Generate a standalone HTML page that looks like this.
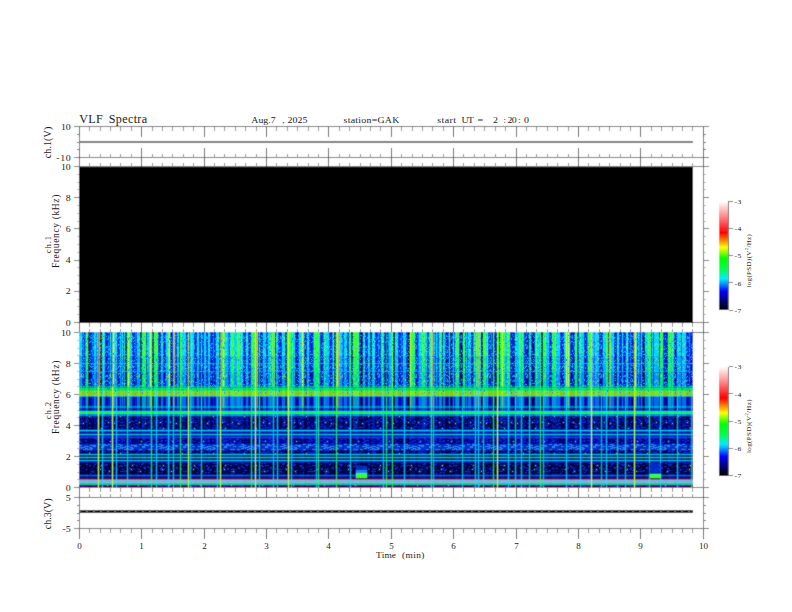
<!DOCTYPE html><html><head><meta charset="utf-8"><style>html,body{margin:0;padding:0;background:#fff;}svg{display:block}</style></head><body><svg width="792" height="612" viewBox="0 0 792 612" shape-rendering="crispEdges" font-family="Liberation Serif" fill="#1a1a1a">
<defs><filter id="soft" x="0" y="0" width="792" height="612" filterUnits="userSpaceOnUse"><feConvolveMatrix order="3" kernelMatrix="1 2 1 2 16 2 1 2 1" edgeMode="duplicate"/></filter></defs>
<g filter="url(#soft)">
<rect width="792" height="612" fill="#fff"/>
<line x1="79.5" y1="126.5" x2="703.5" y2="126.5" stroke="#686868" stroke-width="1"/>
<line x1="79.5" y1="157.5" x2="703.5" y2="157.5" stroke="#686868" stroke-width="1"/>
<line x1="79.5" y1="126.5" x2="79.5" y2="157.5" stroke="#686868" stroke-width="1"/>
<line x1="703.5" y1="126.5" x2="703.5" y2="157.5" stroke="#686868" stroke-width="1"/>
<line x1="79.5" y1="126.5" x2="79.5" y2="136.5" stroke="#404040" stroke-width="1"/>
<line x1="89.5" y1="126.5" x2="89.5" y2="130.5" stroke="#8a8a8a" stroke-width="1"/>
<line x1="100.5" y1="126.5" x2="100.5" y2="130.5" stroke="#8a8a8a" stroke-width="1"/>
<line x1="110.5" y1="126.5" x2="110.5" y2="130.5" stroke="#8a8a8a" stroke-width="1"/>
<line x1="120.5" y1="126.5" x2="120.5" y2="130.5" stroke="#8a8a8a" stroke-width="1"/>
<line x1="131.5" y1="126.5" x2="131.5" y2="130.5" stroke="#8a8a8a" stroke-width="1"/>
<line x1="141.5" y1="126.5" x2="141.5" y2="136.5" stroke="#404040" stroke-width="1"/>
<line x1="152.5" y1="126.5" x2="152.5" y2="130.5" stroke="#8a8a8a" stroke-width="1"/>
<line x1="162.5" y1="126.5" x2="162.5" y2="130.5" stroke="#8a8a8a" stroke-width="1"/>
<line x1="172.5" y1="126.5" x2="172.5" y2="130.5" stroke="#8a8a8a" stroke-width="1"/>
<line x1="183.5" y1="126.5" x2="183.5" y2="130.5" stroke="#8a8a8a" stroke-width="1"/>
<line x1="193.5" y1="126.5" x2="193.5" y2="130.5" stroke="#8a8a8a" stroke-width="1"/>
<line x1="204.5" y1="126.5" x2="204.5" y2="136.5" stroke="#404040" stroke-width="1"/>
<line x1="214.5" y1="126.5" x2="214.5" y2="130.5" stroke="#8a8a8a" stroke-width="1"/>
<line x1="224.5" y1="126.5" x2="224.5" y2="130.5" stroke="#8a8a8a" stroke-width="1"/>
<line x1="235.5" y1="126.5" x2="235.5" y2="130.5" stroke="#8a8a8a" stroke-width="1"/>
<line x1="245.5" y1="126.5" x2="245.5" y2="130.5" stroke="#8a8a8a" stroke-width="1"/>
<line x1="256.5" y1="126.5" x2="256.5" y2="130.5" stroke="#8a8a8a" stroke-width="1"/>
<line x1="266.5" y1="126.5" x2="266.5" y2="136.5" stroke="#404040" stroke-width="1"/>
<line x1="276.5" y1="126.5" x2="276.5" y2="130.5" stroke="#8a8a8a" stroke-width="1"/>
<line x1="287.5" y1="126.5" x2="287.5" y2="130.5" stroke="#8a8a8a" stroke-width="1"/>
<line x1="297.5" y1="126.5" x2="297.5" y2="130.5" stroke="#8a8a8a" stroke-width="1"/>
<line x1="308.5" y1="126.5" x2="308.5" y2="130.5" stroke="#8a8a8a" stroke-width="1"/>
<line x1="318.5" y1="126.5" x2="318.5" y2="130.5" stroke="#8a8a8a" stroke-width="1"/>
<line x1="328.5" y1="126.5" x2="328.5" y2="136.5" stroke="#404040" stroke-width="1"/>
<line x1="339.5" y1="126.5" x2="339.5" y2="130.5" stroke="#8a8a8a" stroke-width="1"/>
<line x1="349.5" y1="126.5" x2="349.5" y2="130.5" stroke="#8a8a8a" stroke-width="1"/>
<line x1="360.5" y1="126.5" x2="360.5" y2="130.5" stroke="#8a8a8a" stroke-width="1"/>
<line x1="370.5" y1="126.5" x2="370.5" y2="130.5" stroke="#8a8a8a" stroke-width="1"/>
<line x1="380.5" y1="126.5" x2="380.5" y2="130.5" stroke="#8a8a8a" stroke-width="1"/>
<line x1="391.5" y1="126.5" x2="391.5" y2="136.5" stroke="#404040" stroke-width="1"/>
<line x1="401.5" y1="126.5" x2="401.5" y2="130.5" stroke="#8a8a8a" stroke-width="1"/>
<line x1="412.5" y1="126.5" x2="412.5" y2="130.5" stroke="#8a8a8a" stroke-width="1"/>
<line x1="422.5" y1="126.5" x2="422.5" y2="130.5" stroke="#8a8a8a" stroke-width="1"/>
<line x1="432.5" y1="126.5" x2="432.5" y2="130.5" stroke="#8a8a8a" stroke-width="1"/>
<line x1="443.5" y1="126.5" x2="443.5" y2="130.5" stroke="#8a8a8a" stroke-width="1"/>
<line x1="453.5" y1="126.5" x2="453.5" y2="136.5" stroke="#404040" stroke-width="1"/>
<line x1="463.5" y1="126.5" x2="463.5" y2="130.5" stroke="#8a8a8a" stroke-width="1"/>
<line x1="474.5" y1="126.5" x2="474.5" y2="130.5" stroke="#8a8a8a" stroke-width="1"/>
<line x1="484.5" y1="126.5" x2="484.5" y2="130.5" stroke="#8a8a8a" stroke-width="1"/>
<line x1="495.5" y1="126.5" x2="495.5" y2="130.5" stroke="#8a8a8a" stroke-width="1"/>
<line x1="505.5" y1="126.5" x2="505.5" y2="130.5" stroke="#8a8a8a" stroke-width="1"/>
<line x1="516.5" y1="126.5" x2="516.5" y2="136.5" stroke="#404040" stroke-width="1"/>
<line x1="526.5" y1="126.5" x2="526.5" y2="130.5" stroke="#8a8a8a" stroke-width="1"/>
<line x1="536.5" y1="126.5" x2="536.5" y2="130.5" stroke="#8a8a8a" stroke-width="1"/>
<line x1="547.5" y1="126.5" x2="547.5" y2="130.5" stroke="#8a8a8a" stroke-width="1"/>
<line x1="557.5" y1="126.5" x2="557.5" y2="130.5" stroke="#8a8a8a" stroke-width="1"/>
<line x1="568.5" y1="126.5" x2="568.5" y2="130.5" stroke="#8a8a8a" stroke-width="1"/>
<line x1="578.5" y1="126.5" x2="578.5" y2="136.5" stroke="#404040" stroke-width="1"/>
<line x1="588.5" y1="126.5" x2="588.5" y2="130.5" stroke="#8a8a8a" stroke-width="1"/>
<line x1="599.5" y1="126.5" x2="599.5" y2="130.5" stroke="#8a8a8a" stroke-width="1"/>
<line x1="609.5" y1="126.5" x2="609.5" y2="130.5" stroke="#8a8a8a" stroke-width="1"/>
<line x1="620.5" y1="126.5" x2="620.5" y2="130.5" stroke="#8a8a8a" stroke-width="1"/>
<line x1="630.5" y1="126.5" x2="630.5" y2="130.5" stroke="#8a8a8a" stroke-width="1"/>
<line x1="640.5" y1="126.5" x2="640.5" y2="136.5" stroke="#404040" stroke-width="1"/>
<line x1="651.5" y1="126.5" x2="651.5" y2="130.5" stroke="#8a8a8a" stroke-width="1"/>
<line x1="661.5" y1="126.5" x2="661.5" y2="130.5" stroke="#8a8a8a" stroke-width="1"/>
<line x1="672.5" y1="126.5" x2="672.5" y2="130.5" stroke="#8a8a8a" stroke-width="1"/>
<line x1="682.5" y1="126.5" x2="682.5" y2="130.5" stroke="#8a8a8a" stroke-width="1"/>
<line x1="692.5" y1="126.5" x2="692.5" y2="130.5" stroke="#8a8a8a" stroke-width="1"/>
<line x1="703.5" y1="126.5" x2="703.5" y2="136.5" stroke="#404040" stroke-width="1"/>
<line x1="79.5" y1="157.5" x2="79.5" y2="147.5" stroke="#404040" stroke-width="1"/>
<line x1="89.5" y1="157.5" x2="89.5" y2="153.5" stroke="#8a8a8a" stroke-width="1"/>
<line x1="100.5" y1="157.5" x2="100.5" y2="153.5" stroke="#8a8a8a" stroke-width="1"/>
<line x1="110.5" y1="157.5" x2="110.5" y2="153.5" stroke="#8a8a8a" stroke-width="1"/>
<line x1="120.5" y1="157.5" x2="120.5" y2="153.5" stroke="#8a8a8a" stroke-width="1"/>
<line x1="131.5" y1="157.5" x2="131.5" y2="153.5" stroke="#8a8a8a" stroke-width="1"/>
<line x1="141.5" y1="157.5" x2="141.5" y2="147.5" stroke="#404040" stroke-width="1"/>
<line x1="152.5" y1="157.5" x2="152.5" y2="153.5" stroke="#8a8a8a" stroke-width="1"/>
<line x1="162.5" y1="157.5" x2="162.5" y2="153.5" stroke="#8a8a8a" stroke-width="1"/>
<line x1="172.5" y1="157.5" x2="172.5" y2="153.5" stroke="#8a8a8a" stroke-width="1"/>
<line x1="183.5" y1="157.5" x2="183.5" y2="153.5" stroke="#8a8a8a" stroke-width="1"/>
<line x1="193.5" y1="157.5" x2="193.5" y2="153.5" stroke="#8a8a8a" stroke-width="1"/>
<line x1="204.5" y1="157.5" x2="204.5" y2="147.5" stroke="#404040" stroke-width="1"/>
<line x1="214.5" y1="157.5" x2="214.5" y2="153.5" stroke="#8a8a8a" stroke-width="1"/>
<line x1="224.5" y1="157.5" x2="224.5" y2="153.5" stroke="#8a8a8a" stroke-width="1"/>
<line x1="235.5" y1="157.5" x2="235.5" y2="153.5" stroke="#8a8a8a" stroke-width="1"/>
<line x1="245.5" y1="157.5" x2="245.5" y2="153.5" stroke="#8a8a8a" stroke-width="1"/>
<line x1="256.5" y1="157.5" x2="256.5" y2="153.5" stroke="#8a8a8a" stroke-width="1"/>
<line x1="266.5" y1="157.5" x2="266.5" y2="147.5" stroke="#404040" stroke-width="1"/>
<line x1="276.5" y1="157.5" x2="276.5" y2="153.5" stroke="#8a8a8a" stroke-width="1"/>
<line x1="287.5" y1="157.5" x2="287.5" y2="153.5" stroke="#8a8a8a" stroke-width="1"/>
<line x1="297.5" y1="157.5" x2="297.5" y2="153.5" stroke="#8a8a8a" stroke-width="1"/>
<line x1="308.5" y1="157.5" x2="308.5" y2="153.5" stroke="#8a8a8a" stroke-width="1"/>
<line x1="318.5" y1="157.5" x2="318.5" y2="153.5" stroke="#8a8a8a" stroke-width="1"/>
<line x1="328.5" y1="157.5" x2="328.5" y2="147.5" stroke="#404040" stroke-width="1"/>
<line x1="339.5" y1="157.5" x2="339.5" y2="153.5" stroke="#8a8a8a" stroke-width="1"/>
<line x1="349.5" y1="157.5" x2="349.5" y2="153.5" stroke="#8a8a8a" stroke-width="1"/>
<line x1="360.5" y1="157.5" x2="360.5" y2="153.5" stroke="#8a8a8a" stroke-width="1"/>
<line x1="370.5" y1="157.5" x2="370.5" y2="153.5" stroke="#8a8a8a" stroke-width="1"/>
<line x1="380.5" y1="157.5" x2="380.5" y2="153.5" stroke="#8a8a8a" stroke-width="1"/>
<line x1="391.5" y1="157.5" x2="391.5" y2="147.5" stroke="#404040" stroke-width="1"/>
<line x1="401.5" y1="157.5" x2="401.5" y2="153.5" stroke="#8a8a8a" stroke-width="1"/>
<line x1="412.5" y1="157.5" x2="412.5" y2="153.5" stroke="#8a8a8a" stroke-width="1"/>
<line x1="422.5" y1="157.5" x2="422.5" y2="153.5" stroke="#8a8a8a" stroke-width="1"/>
<line x1="432.5" y1="157.5" x2="432.5" y2="153.5" stroke="#8a8a8a" stroke-width="1"/>
<line x1="443.5" y1="157.5" x2="443.5" y2="153.5" stroke="#8a8a8a" stroke-width="1"/>
<line x1="453.5" y1="157.5" x2="453.5" y2="147.5" stroke="#404040" stroke-width="1"/>
<line x1="463.5" y1="157.5" x2="463.5" y2="153.5" stroke="#8a8a8a" stroke-width="1"/>
<line x1="474.5" y1="157.5" x2="474.5" y2="153.5" stroke="#8a8a8a" stroke-width="1"/>
<line x1="484.5" y1="157.5" x2="484.5" y2="153.5" stroke="#8a8a8a" stroke-width="1"/>
<line x1="495.5" y1="157.5" x2="495.5" y2="153.5" stroke="#8a8a8a" stroke-width="1"/>
<line x1="505.5" y1="157.5" x2="505.5" y2="153.5" stroke="#8a8a8a" stroke-width="1"/>
<line x1="516.5" y1="157.5" x2="516.5" y2="147.5" stroke="#404040" stroke-width="1"/>
<line x1="526.5" y1="157.5" x2="526.5" y2="153.5" stroke="#8a8a8a" stroke-width="1"/>
<line x1="536.5" y1="157.5" x2="536.5" y2="153.5" stroke="#8a8a8a" stroke-width="1"/>
<line x1="547.5" y1="157.5" x2="547.5" y2="153.5" stroke="#8a8a8a" stroke-width="1"/>
<line x1="557.5" y1="157.5" x2="557.5" y2="153.5" stroke="#8a8a8a" stroke-width="1"/>
<line x1="568.5" y1="157.5" x2="568.5" y2="153.5" stroke="#8a8a8a" stroke-width="1"/>
<line x1="578.5" y1="157.5" x2="578.5" y2="147.5" stroke="#404040" stroke-width="1"/>
<line x1="588.5" y1="157.5" x2="588.5" y2="153.5" stroke="#8a8a8a" stroke-width="1"/>
<line x1="599.5" y1="157.5" x2="599.5" y2="153.5" stroke="#8a8a8a" stroke-width="1"/>
<line x1="609.5" y1="157.5" x2="609.5" y2="153.5" stroke="#8a8a8a" stroke-width="1"/>
<line x1="620.5" y1="157.5" x2="620.5" y2="153.5" stroke="#8a8a8a" stroke-width="1"/>
<line x1="630.5" y1="157.5" x2="630.5" y2="153.5" stroke="#8a8a8a" stroke-width="1"/>
<line x1="640.5" y1="157.5" x2="640.5" y2="147.5" stroke="#404040" stroke-width="1"/>
<line x1="651.5" y1="157.5" x2="651.5" y2="153.5" stroke="#8a8a8a" stroke-width="1"/>
<line x1="661.5" y1="157.5" x2="661.5" y2="153.5" stroke="#8a8a8a" stroke-width="1"/>
<line x1="672.5" y1="157.5" x2="672.5" y2="153.5" stroke="#8a8a8a" stroke-width="1"/>
<line x1="682.5" y1="157.5" x2="682.5" y2="153.5" stroke="#8a8a8a" stroke-width="1"/>
<line x1="692.5" y1="157.5" x2="692.5" y2="153.5" stroke="#8a8a8a" stroke-width="1"/>
<line x1="703.5" y1="157.5" x2="703.5" y2="147.5" stroke="#404040" stroke-width="1"/>
<line x1="74" y1="126.5" x2="79.5" y2="126.5" stroke="#686868" stroke-width="1"/>
<line x1="703.5" y1="126.5" x2="708.5" y2="126.5" stroke="#686868" stroke-width="1"/>
<line x1="74" y1="157.5" x2="79.5" y2="157.5" stroke="#686868" stroke-width="1"/>
<line x1="703.5" y1="157.5" x2="708.5" y2="157.5" stroke="#686868" stroke-width="1"/>
<line x1="77" y1="134.25" x2="79.5" y2="134.25" stroke="#666" stroke-width="1"/>
<line x1="703.5" y1="134.25" x2="705.5" y2="134.25" stroke="#666" stroke-width="1"/>
<line x1="77" y1="149.75" x2="79.5" y2="149.75" stroke="#666" stroke-width="1"/>
<line x1="703.5" y1="149.75" x2="705.5" y2="149.75" stroke="#666" stroke-width="1"/>
<line x1="77" y1="142.0" x2="79.5" y2="142.0" stroke="#666" stroke-width="1"/>
<line x1="703.5" y1="142.0" x2="705.5" y2="142.0" stroke="#666" stroke-width="1"/>
<rect x="79" y="141" width="614" height="2" fill="#777"/>
<line x1="79.5" y1="166.5" x2="703.5" y2="166.5" stroke="#686868" stroke-width="1"/>
<line x1="79.5" y1="322.5" x2="703.5" y2="322.5" stroke="#686868" stroke-width="1"/>
<line x1="79.5" y1="166.5" x2="79.5" y2="322.5" stroke="#686868" stroke-width="1"/>
<line x1="703.5" y1="166.5" x2="703.5" y2="322.5" stroke="#686868" stroke-width="1"/>
<line x1="79.5" y1="166.5" x2="79.5" y2="156.5" stroke="#404040" stroke-width="1"/>
<line x1="89.5" y1="166.5" x2="89.5" y2="162.5" stroke="#8a8a8a" stroke-width="1"/>
<line x1="100.5" y1="166.5" x2="100.5" y2="162.5" stroke="#8a8a8a" stroke-width="1"/>
<line x1="110.5" y1="166.5" x2="110.5" y2="162.5" stroke="#8a8a8a" stroke-width="1"/>
<line x1="120.5" y1="166.5" x2="120.5" y2="162.5" stroke="#8a8a8a" stroke-width="1"/>
<line x1="131.5" y1="166.5" x2="131.5" y2="162.5" stroke="#8a8a8a" stroke-width="1"/>
<line x1="141.5" y1="166.5" x2="141.5" y2="156.5" stroke="#404040" stroke-width="1"/>
<line x1="152.5" y1="166.5" x2="152.5" y2="162.5" stroke="#8a8a8a" stroke-width="1"/>
<line x1="162.5" y1="166.5" x2="162.5" y2="162.5" stroke="#8a8a8a" stroke-width="1"/>
<line x1="172.5" y1="166.5" x2="172.5" y2="162.5" stroke="#8a8a8a" stroke-width="1"/>
<line x1="183.5" y1="166.5" x2="183.5" y2="162.5" stroke="#8a8a8a" stroke-width="1"/>
<line x1="193.5" y1="166.5" x2="193.5" y2="162.5" stroke="#8a8a8a" stroke-width="1"/>
<line x1="204.5" y1="166.5" x2="204.5" y2="156.5" stroke="#404040" stroke-width="1"/>
<line x1="214.5" y1="166.5" x2="214.5" y2="162.5" stroke="#8a8a8a" stroke-width="1"/>
<line x1="224.5" y1="166.5" x2="224.5" y2="162.5" stroke="#8a8a8a" stroke-width="1"/>
<line x1="235.5" y1="166.5" x2="235.5" y2="162.5" stroke="#8a8a8a" stroke-width="1"/>
<line x1="245.5" y1="166.5" x2="245.5" y2="162.5" stroke="#8a8a8a" stroke-width="1"/>
<line x1="256.5" y1="166.5" x2="256.5" y2="162.5" stroke="#8a8a8a" stroke-width="1"/>
<line x1="266.5" y1="166.5" x2="266.5" y2="156.5" stroke="#404040" stroke-width="1"/>
<line x1="276.5" y1="166.5" x2="276.5" y2="162.5" stroke="#8a8a8a" stroke-width="1"/>
<line x1="287.5" y1="166.5" x2="287.5" y2="162.5" stroke="#8a8a8a" stroke-width="1"/>
<line x1="297.5" y1="166.5" x2="297.5" y2="162.5" stroke="#8a8a8a" stroke-width="1"/>
<line x1="308.5" y1="166.5" x2="308.5" y2="162.5" stroke="#8a8a8a" stroke-width="1"/>
<line x1="318.5" y1="166.5" x2="318.5" y2="162.5" stroke="#8a8a8a" stroke-width="1"/>
<line x1="328.5" y1="166.5" x2="328.5" y2="156.5" stroke="#404040" stroke-width="1"/>
<line x1="339.5" y1="166.5" x2="339.5" y2="162.5" stroke="#8a8a8a" stroke-width="1"/>
<line x1="349.5" y1="166.5" x2="349.5" y2="162.5" stroke="#8a8a8a" stroke-width="1"/>
<line x1="360.5" y1="166.5" x2="360.5" y2="162.5" stroke="#8a8a8a" stroke-width="1"/>
<line x1="370.5" y1="166.5" x2="370.5" y2="162.5" stroke="#8a8a8a" stroke-width="1"/>
<line x1="380.5" y1="166.5" x2="380.5" y2="162.5" stroke="#8a8a8a" stroke-width="1"/>
<line x1="391.5" y1="166.5" x2="391.5" y2="156.5" stroke="#404040" stroke-width="1"/>
<line x1="401.5" y1="166.5" x2="401.5" y2="162.5" stroke="#8a8a8a" stroke-width="1"/>
<line x1="412.5" y1="166.5" x2="412.5" y2="162.5" stroke="#8a8a8a" stroke-width="1"/>
<line x1="422.5" y1="166.5" x2="422.5" y2="162.5" stroke="#8a8a8a" stroke-width="1"/>
<line x1="432.5" y1="166.5" x2="432.5" y2="162.5" stroke="#8a8a8a" stroke-width="1"/>
<line x1="443.5" y1="166.5" x2="443.5" y2="162.5" stroke="#8a8a8a" stroke-width="1"/>
<line x1="453.5" y1="166.5" x2="453.5" y2="156.5" stroke="#404040" stroke-width="1"/>
<line x1="463.5" y1="166.5" x2="463.5" y2="162.5" stroke="#8a8a8a" stroke-width="1"/>
<line x1="474.5" y1="166.5" x2="474.5" y2="162.5" stroke="#8a8a8a" stroke-width="1"/>
<line x1="484.5" y1="166.5" x2="484.5" y2="162.5" stroke="#8a8a8a" stroke-width="1"/>
<line x1="495.5" y1="166.5" x2="495.5" y2="162.5" stroke="#8a8a8a" stroke-width="1"/>
<line x1="505.5" y1="166.5" x2="505.5" y2="162.5" stroke="#8a8a8a" stroke-width="1"/>
<line x1="516.5" y1="166.5" x2="516.5" y2="156.5" stroke="#404040" stroke-width="1"/>
<line x1="526.5" y1="166.5" x2="526.5" y2="162.5" stroke="#8a8a8a" stroke-width="1"/>
<line x1="536.5" y1="166.5" x2="536.5" y2="162.5" stroke="#8a8a8a" stroke-width="1"/>
<line x1="547.5" y1="166.5" x2="547.5" y2="162.5" stroke="#8a8a8a" stroke-width="1"/>
<line x1="557.5" y1="166.5" x2="557.5" y2="162.5" stroke="#8a8a8a" stroke-width="1"/>
<line x1="568.5" y1="166.5" x2="568.5" y2="162.5" stroke="#8a8a8a" stroke-width="1"/>
<line x1="578.5" y1="166.5" x2="578.5" y2="156.5" stroke="#404040" stroke-width="1"/>
<line x1="588.5" y1="166.5" x2="588.5" y2="162.5" stroke="#8a8a8a" stroke-width="1"/>
<line x1="599.5" y1="166.5" x2="599.5" y2="162.5" stroke="#8a8a8a" stroke-width="1"/>
<line x1="609.5" y1="166.5" x2="609.5" y2="162.5" stroke="#8a8a8a" stroke-width="1"/>
<line x1="620.5" y1="166.5" x2="620.5" y2="162.5" stroke="#8a8a8a" stroke-width="1"/>
<line x1="630.5" y1="166.5" x2="630.5" y2="162.5" stroke="#8a8a8a" stroke-width="1"/>
<line x1="640.5" y1="166.5" x2="640.5" y2="156.5" stroke="#404040" stroke-width="1"/>
<line x1="651.5" y1="166.5" x2="651.5" y2="162.5" stroke="#8a8a8a" stroke-width="1"/>
<line x1="661.5" y1="166.5" x2="661.5" y2="162.5" stroke="#8a8a8a" stroke-width="1"/>
<line x1="672.5" y1="166.5" x2="672.5" y2="162.5" stroke="#8a8a8a" stroke-width="1"/>
<line x1="682.5" y1="166.5" x2="682.5" y2="162.5" stroke="#8a8a8a" stroke-width="1"/>
<line x1="692.5" y1="166.5" x2="692.5" y2="162.5" stroke="#8a8a8a" stroke-width="1"/>
<line x1="703.5" y1="166.5" x2="703.5" y2="156.5" stroke="#404040" stroke-width="1"/>
<line x1="79.5" y1="322.5" x2="79.5" y2="332.5" stroke="#404040" stroke-width="1"/>
<line x1="89.5" y1="322.5" x2="89.5" y2="326.5" stroke="#8a8a8a" stroke-width="1"/>
<line x1="100.5" y1="322.5" x2="100.5" y2="326.5" stroke="#8a8a8a" stroke-width="1"/>
<line x1="110.5" y1="322.5" x2="110.5" y2="326.5" stroke="#8a8a8a" stroke-width="1"/>
<line x1="120.5" y1="322.5" x2="120.5" y2="326.5" stroke="#8a8a8a" stroke-width="1"/>
<line x1="131.5" y1="322.5" x2="131.5" y2="326.5" stroke="#8a8a8a" stroke-width="1"/>
<line x1="141.5" y1="322.5" x2="141.5" y2="332.5" stroke="#404040" stroke-width="1"/>
<line x1="152.5" y1="322.5" x2="152.5" y2="326.5" stroke="#8a8a8a" stroke-width="1"/>
<line x1="162.5" y1="322.5" x2="162.5" y2="326.5" stroke="#8a8a8a" stroke-width="1"/>
<line x1="172.5" y1="322.5" x2="172.5" y2="326.5" stroke="#8a8a8a" stroke-width="1"/>
<line x1="183.5" y1="322.5" x2="183.5" y2="326.5" stroke="#8a8a8a" stroke-width="1"/>
<line x1="193.5" y1="322.5" x2="193.5" y2="326.5" stroke="#8a8a8a" stroke-width="1"/>
<line x1="204.5" y1="322.5" x2="204.5" y2="332.5" stroke="#404040" stroke-width="1"/>
<line x1="214.5" y1="322.5" x2="214.5" y2="326.5" stroke="#8a8a8a" stroke-width="1"/>
<line x1="224.5" y1="322.5" x2="224.5" y2="326.5" stroke="#8a8a8a" stroke-width="1"/>
<line x1="235.5" y1="322.5" x2="235.5" y2="326.5" stroke="#8a8a8a" stroke-width="1"/>
<line x1="245.5" y1="322.5" x2="245.5" y2="326.5" stroke="#8a8a8a" stroke-width="1"/>
<line x1="256.5" y1="322.5" x2="256.5" y2="326.5" stroke="#8a8a8a" stroke-width="1"/>
<line x1="266.5" y1="322.5" x2="266.5" y2="332.5" stroke="#404040" stroke-width="1"/>
<line x1="276.5" y1="322.5" x2="276.5" y2="326.5" stroke="#8a8a8a" stroke-width="1"/>
<line x1="287.5" y1="322.5" x2="287.5" y2="326.5" stroke="#8a8a8a" stroke-width="1"/>
<line x1="297.5" y1="322.5" x2="297.5" y2="326.5" stroke="#8a8a8a" stroke-width="1"/>
<line x1="308.5" y1="322.5" x2="308.5" y2="326.5" stroke="#8a8a8a" stroke-width="1"/>
<line x1="318.5" y1="322.5" x2="318.5" y2="326.5" stroke="#8a8a8a" stroke-width="1"/>
<line x1="328.5" y1="322.5" x2="328.5" y2="332.5" stroke="#404040" stroke-width="1"/>
<line x1="339.5" y1="322.5" x2="339.5" y2="326.5" stroke="#8a8a8a" stroke-width="1"/>
<line x1="349.5" y1="322.5" x2="349.5" y2="326.5" stroke="#8a8a8a" stroke-width="1"/>
<line x1="360.5" y1="322.5" x2="360.5" y2="326.5" stroke="#8a8a8a" stroke-width="1"/>
<line x1="370.5" y1="322.5" x2="370.5" y2="326.5" stroke="#8a8a8a" stroke-width="1"/>
<line x1="380.5" y1="322.5" x2="380.5" y2="326.5" stroke="#8a8a8a" stroke-width="1"/>
<line x1="391.5" y1="322.5" x2="391.5" y2="332.5" stroke="#404040" stroke-width="1"/>
<line x1="401.5" y1="322.5" x2="401.5" y2="326.5" stroke="#8a8a8a" stroke-width="1"/>
<line x1="412.5" y1="322.5" x2="412.5" y2="326.5" stroke="#8a8a8a" stroke-width="1"/>
<line x1="422.5" y1="322.5" x2="422.5" y2="326.5" stroke="#8a8a8a" stroke-width="1"/>
<line x1="432.5" y1="322.5" x2="432.5" y2="326.5" stroke="#8a8a8a" stroke-width="1"/>
<line x1="443.5" y1="322.5" x2="443.5" y2="326.5" stroke="#8a8a8a" stroke-width="1"/>
<line x1="453.5" y1="322.5" x2="453.5" y2="332.5" stroke="#404040" stroke-width="1"/>
<line x1="463.5" y1="322.5" x2="463.5" y2="326.5" stroke="#8a8a8a" stroke-width="1"/>
<line x1="474.5" y1="322.5" x2="474.5" y2="326.5" stroke="#8a8a8a" stroke-width="1"/>
<line x1="484.5" y1="322.5" x2="484.5" y2="326.5" stroke="#8a8a8a" stroke-width="1"/>
<line x1="495.5" y1="322.5" x2="495.5" y2="326.5" stroke="#8a8a8a" stroke-width="1"/>
<line x1="505.5" y1="322.5" x2="505.5" y2="326.5" stroke="#8a8a8a" stroke-width="1"/>
<line x1="516.5" y1="322.5" x2="516.5" y2="332.5" stroke="#404040" stroke-width="1"/>
<line x1="526.5" y1="322.5" x2="526.5" y2="326.5" stroke="#8a8a8a" stroke-width="1"/>
<line x1="536.5" y1="322.5" x2="536.5" y2="326.5" stroke="#8a8a8a" stroke-width="1"/>
<line x1="547.5" y1="322.5" x2="547.5" y2="326.5" stroke="#8a8a8a" stroke-width="1"/>
<line x1="557.5" y1="322.5" x2="557.5" y2="326.5" stroke="#8a8a8a" stroke-width="1"/>
<line x1="568.5" y1="322.5" x2="568.5" y2="326.5" stroke="#8a8a8a" stroke-width="1"/>
<line x1="578.5" y1="322.5" x2="578.5" y2="332.5" stroke="#404040" stroke-width="1"/>
<line x1="588.5" y1="322.5" x2="588.5" y2="326.5" stroke="#8a8a8a" stroke-width="1"/>
<line x1="599.5" y1="322.5" x2="599.5" y2="326.5" stroke="#8a8a8a" stroke-width="1"/>
<line x1="609.5" y1="322.5" x2="609.5" y2="326.5" stroke="#8a8a8a" stroke-width="1"/>
<line x1="620.5" y1="322.5" x2="620.5" y2="326.5" stroke="#8a8a8a" stroke-width="1"/>
<line x1="630.5" y1="322.5" x2="630.5" y2="326.5" stroke="#8a8a8a" stroke-width="1"/>
<line x1="640.5" y1="322.5" x2="640.5" y2="332.5" stroke="#404040" stroke-width="1"/>
<line x1="651.5" y1="322.5" x2="651.5" y2="326.5" stroke="#8a8a8a" stroke-width="1"/>
<line x1="661.5" y1="322.5" x2="661.5" y2="326.5" stroke="#8a8a8a" stroke-width="1"/>
<line x1="672.5" y1="322.5" x2="672.5" y2="326.5" stroke="#8a8a8a" stroke-width="1"/>
<line x1="682.5" y1="322.5" x2="682.5" y2="326.5" stroke="#8a8a8a" stroke-width="1"/>
<line x1="692.5" y1="322.5" x2="692.5" y2="326.5" stroke="#8a8a8a" stroke-width="1"/>
<line x1="703.5" y1="322.5" x2="703.5" y2="332.5" stroke="#404040" stroke-width="1"/>
<line x1="74" y1="322.5" x2="79.5" y2="322.5" stroke="#686868" stroke-width="1"/>
<line x1="703.5" y1="322.5" x2="708.5" y2="322.5" stroke="#686868" stroke-width="1"/>
<line x1="77" y1="314.7" x2="79.5" y2="314.7" stroke="#bbb" stroke-width="1"/>
<line x1="703.5" y1="314.7" x2="705.5" y2="314.7" stroke="#bbb" stroke-width="1"/>
<line x1="77" y1="306.9" x2="79.5" y2="306.9" stroke="#bbb" stroke-width="1"/>
<line x1="703.5" y1="306.9" x2="705.5" y2="306.9" stroke="#bbb" stroke-width="1"/>
<line x1="77" y1="299.1" x2="79.5" y2="299.1" stroke="#bbb" stroke-width="1"/>
<line x1="703.5" y1="299.1" x2="705.5" y2="299.1" stroke="#bbb" stroke-width="1"/>
<line x1="74" y1="291.3" x2="79.5" y2="291.3" stroke="#686868" stroke-width="1"/>
<line x1="703.5" y1="291.3" x2="708.5" y2="291.3" stroke="#686868" stroke-width="1"/>
<line x1="77" y1="283.5" x2="79.5" y2="283.5" stroke="#bbb" stroke-width="1"/>
<line x1="703.5" y1="283.5" x2="705.5" y2="283.5" stroke="#bbb" stroke-width="1"/>
<line x1="77" y1="275.7" x2="79.5" y2="275.7" stroke="#bbb" stroke-width="1"/>
<line x1="703.5" y1="275.7" x2="705.5" y2="275.7" stroke="#bbb" stroke-width="1"/>
<line x1="77" y1="267.9" x2="79.5" y2="267.9" stroke="#bbb" stroke-width="1"/>
<line x1="703.5" y1="267.9" x2="705.5" y2="267.9" stroke="#bbb" stroke-width="1"/>
<line x1="74" y1="260.1" x2="79.5" y2="260.1" stroke="#686868" stroke-width="1"/>
<line x1="703.5" y1="260.1" x2="708.5" y2="260.1" stroke="#686868" stroke-width="1"/>
<line x1="77" y1="252.3" x2="79.5" y2="252.3" stroke="#bbb" stroke-width="1"/>
<line x1="703.5" y1="252.3" x2="705.5" y2="252.3" stroke="#bbb" stroke-width="1"/>
<line x1="77" y1="244.5" x2="79.5" y2="244.5" stroke="#bbb" stroke-width="1"/>
<line x1="703.5" y1="244.5" x2="705.5" y2="244.5" stroke="#bbb" stroke-width="1"/>
<line x1="77" y1="236.7" x2="79.5" y2="236.7" stroke="#bbb" stroke-width="1"/>
<line x1="703.5" y1="236.7" x2="705.5" y2="236.7" stroke="#bbb" stroke-width="1"/>
<line x1="74" y1="228.9" x2="79.5" y2="228.9" stroke="#686868" stroke-width="1"/>
<line x1="703.5" y1="228.9" x2="708.5" y2="228.9" stroke="#686868" stroke-width="1"/>
<line x1="77" y1="221.10000000000002" x2="79.5" y2="221.10000000000002" stroke="#bbb" stroke-width="1"/>
<line x1="703.5" y1="221.10000000000002" x2="705.5" y2="221.10000000000002" stroke="#bbb" stroke-width="1"/>
<line x1="77" y1="213.3" x2="79.5" y2="213.3" stroke="#bbb" stroke-width="1"/>
<line x1="703.5" y1="213.3" x2="705.5" y2="213.3" stroke="#bbb" stroke-width="1"/>
<line x1="77" y1="205.5" x2="79.5" y2="205.5" stroke="#bbb" stroke-width="1"/>
<line x1="703.5" y1="205.5" x2="705.5" y2="205.5" stroke="#bbb" stroke-width="1"/>
<line x1="74" y1="197.7" x2="79.5" y2="197.7" stroke="#686868" stroke-width="1"/>
<line x1="703.5" y1="197.7" x2="708.5" y2="197.7" stroke="#686868" stroke-width="1"/>
<line x1="77" y1="189.9" x2="79.5" y2="189.9" stroke="#bbb" stroke-width="1"/>
<line x1="703.5" y1="189.9" x2="705.5" y2="189.9" stroke="#bbb" stroke-width="1"/>
<line x1="77" y1="182.1" x2="79.5" y2="182.1" stroke="#bbb" stroke-width="1"/>
<line x1="703.5" y1="182.1" x2="705.5" y2="182.1" stroke="#bbb" stroke-width="1"/>
<line x1="77" y1="174.3" x2="79.5" y2="174.3" stroke="#bbb" stroke-width="1"/>
<line x1="703.5" y1="174.3" x2="705.5" y2="174.3" stroke="#bbb" stroke-width="1"/>
<line x1="74" y1="166.5" x2="79.5" y2="166.5" stroke="#686868" stroke-width="1"/>
<line x1="703.5" y1="166.5" x2="708.5" y2="166.5" stroke="#686868" stroke-width="1"/>
<rect x="79" y="167" width="614" height="156" fill="#000"/>
<line x1="79.5" y1="332.5" x2="703.5" y2="332.5" stroke="#686868" stroke-width="1"/>
<line x1="79.5" y1="487.5" x2="703.5" y2="487.5" stroke="#686868" stroke-width="1"/>
<line x1="79.5" y1="332.5" x2="79.5" y2="487.5" stroke="#686868" stroke-width="1"/>
<line x1="703.5" y1="332.5" x2="703.5" y2="487.5" stroke="#686868" stroke-width="1"/>
<line x1="79.5" y1="332.5" x2="79.5" y2="322.5" stroke="#404040" stroke-width="1"/>
<line x1="89.5" y1="332.5" x2="89.5" y2="328.5" stroke="#8a8a8a" stroke-width="1"/>
<line x1="100.5" y1="332.5" x2="100.5" y2="328.5" stroke="#8a8a8a" stroke-width="1"/>
<line x1="110.5" y1="332.5" x2="110.5" y2="328.5" stroke="#8a8a8a" stroke-width="1"/>
<line x1="120.5" y1="332.5" x2="120.5" y2="328.5" stroke="#8a8a8a" stroke-width="1"/>
<line x1="131.5" y1="332.5" x2="131.5" y2="328.5" stroke="#8a8a8a" stroke-width="1"/>
<line x1="141.5" y1="332.5" x2="141.5" y2="322.5" stroke="#404040" stroke-width="1"/>
<line x1="152.5" y1="332.5" x2="152.5" y2="328.5" stroke="#8a8a8a" stroke-width="1"/>
<line x1="162.5" y1="332.5" x2="162.5" y2="328.5" stroke="#8a8a8a" stroke-width="1"/>
<line x1="172.5" y1="332.5" x2="172.5" y2="328.5" stroke="#8a8a8a" stroke-width="1"/>
<line x1="183.5" y1="332.5" x2="183.5" y2="328.5" stroke="#8a8a8a" stroke-width="1"/>
<line x1="193.5" y1="332.5" x2="193.5" y2="328.5" stroke="#8a8a8a" stroke-width="1"/>
<line x1="204.5" y1="332.5" x2="204.5" y2="322.5" stroke="#404040" stroke-width="1"/>
<line x1="214.5" y1="332.5" x2="214.5" y2="328.5" stroke="#8a8a8a" stroke-width="1"/>
<line x1="224.5" y1="332.5" x2="224.5" y2="328.5" stroke="#8a8a8a" stroke-width="1"/>
<line x1="235.5" y1="332.5" x2="235.5" y2="328.5" stroke="#8a8a8a" stroke-width="1"/>
<line x1="245.5" y1="332.5" x2="245.5" y2="328.5" stroke="#8a8a8a" stroke-width="1"/>
<line x1="256.5" y1="332.5" x2="256.5" y2="328.5" stroke="#8a8a8a" stroke-width="1"/>
<line x1="266.5" y1="332.5" x2="266.5" y2="322.5" stroke="#404040" stroke-width="1"/>
<line x1="276.5" y1="332.5" x2="276.5" y2="328.5" stroke="#8a8a8a" stroke-width="1"/>
<line x1="287.5" y1="332.5" x2="287.5" y2="328.5" stroke="#8a8a8a" stroke-width="1"/>
<line x1="297.5" y1="332.5" x2="297.5" y2="328.5" stroke="#8a8a8a" stroke-width="1"/>
<line x1="308.5" y1="332.5" x2="308.5" y2="328.5" stroke="#8a8a8a" stroke-width="1"/>
<line x1="318.5" y1="332.5" x2="318.5" y2="328.5" stroke="#8a8a8a" stroke-width="1"/>
<line x1="328.5" y1="332.5" x2="328.5" y2="322.5" stroke="#404040" stroke-width="1"/>
<line x1="339.5" y1="332.5" x2="339.5" y2="328.5" stroke="#8a8a8a" stroke-width="1"/>
<line x1="349.5" y1="332.5" x2="349.5" y2="328.5" stroke="#8a8a8a" stroke-width="1"/>
<line x1="360.5" y1="332.5" x2="360.5" y2="328.5" stroke="#8a8a8a" stroke-width="1"/>
<line x1="370.5" y1="332.5" x2="370.5" y2="328.5" stroke="#8a8a8a" stroke-width="1"/>
<line x1="380.5" y1="332.5" x2="380.5" y2="328.5" stroke="#8a8a8a" stroke-width="1"/>
<line x1="391.5" y1="332.5" x2="391.5" y2="322.5" stroke="#404040" stroke-width="1"/>
<line x1="401.5" y1="332.5" x2="401.5" y2="328.5" stroke="#8a8a8a" stroke-width="1"/>
<line x1="412.5" y1="332.5" x2="412.5" y2="328.5" stroke="#8a8a8a" stroke-width="1"/>
<line x1="422.5" y1="332.5" x2="422.5" y2="328.5" stroke="#8a8a8a" stroke-width="1"/>
<line x1="432.5" y1="332.5" x2="432.5" y2="328.5" stroke="#8a8a8a" stroke-width="1"/>
<line x1="443.5" y1="332.5" x2="443.5" y2="328.5" stroke="#8a8a8a" stroke-width="1"/>
<line x1="453.5" y1="332.5" x2="453.5" y2="322.5" stroke="#404040" stroke-width="1"/>
<line x1="463.5" y1="332.5" x2="463.5" y2="328.5" stroke="#8a8a8a" stroke-width="1"/>
<line x1="474.5" y1="332.5" x2="474.5" y2="328.5" stroke="#8a8a8a" stroke-width="1"/>
<line x1="484.5" y1="332.5" x2="484.5" y2="328.5" stroke="#8a8a8a" stroke-width="1"/>
<line x1="495.5" y1="332.5" x2="495.5" y2="328.5" stroke="#8a8a8a" stroke-width="1"/>
<line x1="505.5" y1="332.5" x2="505.5" y2="328.5" stroke="#8a8a8a" stroke-width="1"/>
<line x1="516.5" y1="332.5" x2="516.5" y2="322.5" stroke="#404040" stroke-width="1"/>
<line x1="526.5" y1="332.5" x2="526.5" y2="328.5" stroke="#8a8a8a" stroke-width="1"/>
<line x1="536.5" y1="332.5" x2="536.5" y2="328.5" stroke="#8a8a8a" stroke-width="1"/>
<line x1="547.5" y1="332.5" x2="547.5" y2="328.5" stroke="#8a8a8a" stroke-width="1"/>
<line x1="557.5" y1="332.5" x2="557.5" y2="328.5" stroke="#8a8a8a" stroke-width="1"/>
<line x1="568.5" y1="332.5" x2="568.5" y2="328.5" stroke="#8a8a8a" stroke-width="1"/>
<line x1="578.5" y1="332.5" x2="578.5" y2="322.5" stroke="#404040" stroke-width="1"/>
<line x1="588.5" y1="332.5" x2="588.5" y2="328.5" stroke="#8a8a8a" stroke-width="1"/>
<line x1="599.5" y1="332.5" x2="599.5" y2="328.5" stroke="#8a8a8a" stroke-width="1"/>
<line x1="609.5" y1="332.5" x2="609.5" y2="328.5" stroke="#8a8a8a" stroke-width="1"/>
<line x1="620.5" y1="332.5" x2="620.5" y2="328.5" stroke="#8a8a8a" stroke-width="1"/>
<line x1="630.5" y1="332.5" x2="630.5" y2="328.5" stroke="#8a8a8a" stroke-width="1"/>
<line x1="640.5" y1="332.5" x2="640.5" y2="322.5" stroke="#404040" stroke-width="1"/>
<line x1="651.5" y1="332.5" x2="651.5" y2="328.5" stroke="#8a8a8a" stroke-width="1"/>
<line x1="661.5" y1="332.5" x2="661.5" y2="328.5" stroke="#8a8a8a" stroke-width="1"/>
<line x1="672.5" y1="332.5" x2="672.5" y2="328.5" stroke="#8a8a8a" stroke-width="1"/>
<line x1="682.5" y1="332.5" x2="682.5" y2="328.5" stroke="#8a8a8a" stroke-width="1"/>
<line x1="692.5" y1="332.5" x2="692.5" y2="328.5" stroke="#8a8a8a" stroke-width="1"/>
<line x1="703.5" y1="332.5" x2="703.5" y2="322.5" stroke="#404040" stroke-width="1"/>
<line x1="79.5" y1="487.5" x2="79.5" y2="497.5" stroke="#404040" stroke-width="1"/>
<line x1="89.5" y1="487.5" x2="89.5" y2="491.5" stroke="#8a8a8a" stroke-width="1"/>
<line x1="100.5" y1="487.5" x2="100.5" y2="491.5" stroke="#8a8a8a" stroke-width="1"/>
<line x1="110.5" y1="487.5" x2="110.5" y2="491.5" stroke="#8a8a8a" stroke-width="1"/>
<line x1="120.5" y1="487.5" x2="120.5" y2="491.5" stroke="#8a8a8a" stroke-width="1"/>
<line x1="131.5" y1="487.5" x2="131.5" y2="491.5" stroke="#8a8a8a" stroke-width="1"/>
<line x1="141.5" y1="487.5" x2="141.5" y2="497.5" stroke="#404040" stroke-width="1"/>
<line x1="152.5" y1="487.5" x2="152.5" y2="491.5" stroke="#8a8a8a" stroke-width="1"/>
<line x1="162.5" y1="487.5" x2="162.5" y2="491.5" stroke="#8a8a8a" stroke-width="1"/>
<line x1="172.5" y1="487.5" x2="172.5" y2="491.5" stroke="#8a8a8a" stroke-width="1"/>
<line x1="183.5" y1="487.5" x2="183.5" y2="491.5" stroke="#8a8a8a" stroke-width="1"/>
<line x1="193.5" y1="487.5" x2="193.5" y2="491.5" stroke="#8a8a8a" stroke-width="1"/>
<line x1="204.5" y1="487.5" x2="204.5" y2="497.5" stroke="#404040" stroke-width="1"/>
<line x1="214.5" y1="487.5" x2="214.5" y2="491.5" stroke="#8a8a8a" stroke-width="1"/>
<line x1="224.5" y1="487.5" x2="224.5" y2="491.5" stroke="#8a8a8a" stroke-width="1"/>
<line x1="235.5" y1="487.5" x2="235.5" y2="491.5" stroke="#8a8a8a" stroke-width="1"/>
<line x1="245.5" y1="487.5" x2="245.5" y2="491.5" stroke="#8a8a8a" stroke-width="1"/>
<line x1="256.5" y1="487.5" x2="256.5" y2="491.5" stroke="#8a8a8a" stroke-width="1"/>
<line x1="266.5" y1="487.5" x2="266.5" y2="497.5" stroke="#404040" stroke-width="1"/>
<line x1="276.5" y1="487.5" x2="276.5" y2="491.5" stroke="#8a8a8a" stroke-width="1"/>
<line x1="287.5" y1="487.5" x2="287.5" y2="491.5" stroke="#8a8a8a" stroke-width="1"/>
<line x1="297.5" y1="487.5" x2="297.5" y2="491.5" stroke="#8a8a8a" stroke-width="1"/>
<line x1="308.5" y1="487.5" x2="308.5" y2="491.5" stroke="#8a8a8a" stroke-width="1"/>
<line x1="318.5" y1="487.5" x2="318.5" y2="491.5" stroke="#8a8a8a" stroke-width="1"/>
<line x1="328.5" y1="487.5" x2="328.5" y2="497.5" stroke="#404040" stroke-width="1"/>
<line x1="339.5" y1="487.5" x2="339.5" y2="491.5" stroke="#8a8a8a" stroke-width="1"/>
<line x1="349.5" y1="487.5" x2="349.5" y2="491.5" stroke="#8a8a8a" stroke-width="1"/>
<line x1="360.5" y1="487.5" x2="360.5" y2="491.5" stroke="#8a8a8a" stroke-width="1"/>
<line x1="370.5" y1="487.5" x2="370.5" y2="491.5" stroke="#8a8a8a" stroke-width="1"/>
<line x1="380.5" y1="487.5" x2="380.5" y2="491.5" stroke="#8a8a8a" stroke-width="1"/>
<line x1="391.5" y1="487.5" x2="391.5" y2="497.5" stroke="#404040" stroke-width="1"/>
<line x1="401.5" y1="487.5" x2="401.5" y2="491.5" stroke="#8a8a8a" stroke-width="1"/>
<line x1="412.5" y1="487.5" x2="412.5" y2="491.5" stroke="#8a8a8a" stroke-width="1"/>
<line x1="422.5" y1="487.5" x2="422.5" y2="491.5" stroke="#8a8a8a" stroke-width="1"/>
<line x1="432.5" y1="487.5" x2="432.5" y2="491.5" stroke="#8a8a8a" stroke-width="1"/>
<line x1="443.5" y1="487.5" x2="443.5" y2="491.5" stroke="#8a8a8a" stroke-width="1"/>
<line x1="453.5" y1="487.5" x2="453.5" y2="497.5" stroke="#404040" stroke-width="1"/>
<line x1="463.5" y1="487.5" x2="463.5" y2="491.5" stroke="#8a8a8a" stroke-width="1"/>
<line x1="474.5" y1="487.5" x2="474.5" y2="491.5" stroke="#8a8a8a" stroke-width="1"/>
<line x1="484.5" y1="487.5" x2="484.5" y2="491.5" stroke="#8a8a8a" stroke-width="1"/>
<line x1="495.5" y1="487.5" x2="495.5" y2="491.5" stroke="#8a8a8a" stroke-width="1"/>
<line x1="505.5" y1="487.5" x2="505.5" y2="491.5" stroke="#8a8a8a" stroke-width="1"/>
<line x1="516.5" y1="487.5" x2="516.5" y2="497.5" stroke="#404040" stroke-width="1"/>
<line x1="526.5" y1="487.5" x2="526.5" y2="491.5" stroke="#8a8a8a" stroke-width="1"/>
<line x1="536.5" y1="487.5" x2="536.5" y2="491.5" stroke="#8a8a8a" stroke-width="1"/>
<line x1="547.5" y1="487.5" x2="547.5" y2="491.5" stroke="#8a8a8a" stroke-width="1"/>
<line x1="557.5" y1="487.5" x2="557.5" y2="491.5" stroke="#8a8a8a" stroke-width="1"/>
<line x1="568.5" y1="487.5" x2="568.5" y2="491.5" stroke="#8a8a8a" stroke-width="1"/>
<line x1="578.5" y1="487.5" x2="578.5" y2="497.5" stroke="#404040" stroke-width="1"/>
<line x1="588.5" y1="487.5" x2="588.5" y2="491.5" stroke="#8a8a8a" stroke-width="1"/>
<line x1="599.5" y1="487.5" x2="599.5" y2="491.5" stroke="#8a8a8a" stroke-width="1"/>
<line x1="609.5" y1="487.5" x2="609.5" y2="491.5" stroke="#8a8a8a" stroke-width="1"/>
<line x1="620.5" y1="487.5" x2="620.5" y2="491.5" stroke="#8a8a8a" stroke-width="1"/>
<line x1="630.5" y1="487.5" x2="630.5" y2="491.5" stroke="#8a8a8a" stroke-width="1"/>
<line x1="640.5" y1="487.5" x2="640.5" y2="497.5" stroke="#404040" stroke-width="1"/>
<line x1="651.5" y1="487.5" x2="651.5" y2="491.5" stroke="#8a8a8a" stroke-width="1"/>
<line x1="661.5" y1="487.5" x2="661.5" y2="491.5" stroke="#8a8a8a" stroke-width="1"/>
<line x1="672.5" y1="487.5" x2="672.5" y2="491.5" stroke="#8a8a8a" stroke-width="1"/>
<line x1="682.5" y1="487.5" x2="682.5" y2="491.5" stroke="#8a8a8a" stroke-width="1"/>
<line x1="692.5" y1="487.5" x2="692.5" y2="491.5" stroke="#8a8a8a" stroke-width="1"/>
<line x1="703.5" y1="487.5" x2="703.5" y2="497.5" stroke="#404040" stroke-width="1"/>
<line x1="74" y1="487.5" x2="79.5" y2="487.5" stroke="#686868" stroke-width="1"/>
<line x1="703.5" y1="487.5" x2="708.5" y2="487.5" stroke="#686868" stroke-width="1"/>
<line x1="77" y1="479.75" x2="79.5" y2="479.75" stroke="#bbb" stroke-width="1"/>
<line x1="703.5" y1="479.75" x2="705.5" y2="479.75" stroke="#bbb" stroke-width="1"/>
<line x1="77" y1="472.0" x2="79.5" y2="472.0" stroke="#bbb" stroke-width="1"/>
<line x1="703.5" y1="472.0" x2="705.5" y2="472.0" stroke="#bbb" stroke-width="1"/>
<line x1="77" y1="464.25" x2="79.5" y2="464.25" stroke="#bbb" stroke-width="1"/>
<line x1="703.5" y1="464.25" x2="705.5" y2="464.25" stroke="#bbb" stroke-width="1"/>
<line x1="74" y1="456.5" x2="79.5" y2="456.5" stroke="#686868" stroke-width="1"/>
<line x1="703.5" y1="456.5" x2="708.5" y2="456.5" stroke="#686868" stroke-width="1"/>
<line x1="77" y1="448.75" x2="79.5" y2="448.75" stroke="#bbb" stroke-width="1"/>
<line x1="703.5" y1="448.75" x2="705.5" y2="448.75" stroke="#bbb" stroke-width="1"/>
<line x1="77" y1="441.0" x2="79.5" y2="441.0" stroke="#bbb" stroke-width="1"/>
<line x1="703.5" y1="441.0" x2="705.5" y2="441.0" stroke="#bbb" stroke-width="1"/>
<line x1="77" y1="433.25" x2="79.5" y2="433.25" stroke="#bbb" stroke-width="1"/>
<line x1="703.5" y1="433.25" x2="705.5" y2="433.25" stroke="#bbb" stroke-width="1"/>
<line x1="74" y1="425.5" x2="79.5" y2="425.5" stroke="#686868" stroke-width="1"/>
<line x1="703.5" y1="425.5" x2="708.5" y2="425.5" stroke="#686868" stroke-width="1"/>
<line x1="77" y1="417.75" x2="79.5" y2="417.75" stroke="#bbb" stroke-width="1"/>
<line x1="703.5" y1="417.75" x2="705.5" y2="417.75" stroke="#bbb" stroke-width="1"/>
<line x1="77" y1="410.0" x2="79.5" y2="410.0" stroke="#bbb" stroke-width="1"/>
<line x1="703.5" y1="410.0" x2="705.5" y2="410.0" stroke="#bbb" stroke-width="1"/>
<line x1="77" y1="402.25" x2="79.5" y2="402.25" stroke="#bbb" stroke-width="1"/>
<line x1="703.5" y1="402.25" x2="705.5" y2="402.25" stroke="#bbb" stroke-width="1"/>
<line x1="74" y1="394.5" x2="79.5" y2="394.5" stroke="#686868" stroke-width="1"/>
<line x1="703.5" y1="394.5" x2="708.5" y2="394.5" stroke="#686868" stroke-width="1"/>
<line x1="77" y1="386.75" x2="79.5" y2="386.75" stroke="#bbb" stroke-width="1"/>
<line x1="703.5" y1="386.75" x2="705.5" y2="386.75" stroke="#bbb" stroke-width="1"/>
<line x1="77" y1="379.0" x2="79.5" y2="379.0" stroke="#bbb" stroke-width="1"/>
<line x1="703.5" y1="379.0" x2="705.5" y2="379.0" stroke="#bbb" stroke-width="1"/>
<line x1="77" y1="371.25" x2="79.5" y2="371.25" stroke="#bbb" stroke-width="1"/>
<line x1="703.5" y1="371.25" x2="705.5" y2="371.25" stroke="#bbb" stroke-width="1"/>
<line x1="74" y1="363.5" x2="79.5" y2="363.5" stroke="#686868" stroke-width="1"/>
<line x1="703.5" y1="363.5" x2="708.5" y2="363.5" stroke="#686868" stroke-width="1"/>
<line x1="77" y1="355.75" x2="79.5" y2="355.75" stroke="#bbb" stroke-width="1"/>
<line x1="703.5" y1="355.75" x2="705.5" y2="355.75" stroke="#bbb" stroke-width="1"/>
<line x1="77" y1="348.0" x2="79.5" y2="348.0" stroke="#bbb" stroke-width="1"/>
<line x1="703.5" y1="348.0" x2="705.5" y2="348.0" stroke="#bbb" stroke-width="1"/>
<line x1="77" y1="340.25" x2="79.5" y2="340.25" stroke="#bbb" stroke-width="1"/>
<line x1="703.5" y1="340.25" x2="705.5" y2="340.25" stroke="#bbb" stroke-width="1"/>
<line x1="74" y1="332.5" x2="79.5" y2="332.5" stroke="#686868" stroke-width="1"/>
<line x1="703.5" y1="332.5" x2="708.5" y2="332.5" stroke="#686868" stroke-width="1"/>
<defs>
<filter id="bl" x="0" y="0" width="1" height="1"><feGaussianBlur stdDeviation="0.7"/></filter>
<pattern id="pc" width="37" height="29" patternUnits="userSpaceOnUse"><path d="M0 0h1v1h-1zM8 0h1v1h-1zM9 0h1v1h-1zM13 0h1v1h-1zM19 0h1v1h-1zM20 0h1v1h-1zM26 0h1v1h-1zM35 0h1v1h-1zM2 1h1v1h-1zM5 1h1v1h-1zM19 1h1v1h-1zM23 1h1v1h-1zM34 1h1v1h-1zM35 1h1v1h-1zM3 2h1v1h-1zM17 2h1v1h-1zM26 2h1v1h-1zM29 2h1v1h-1zM1 3h1v1h-1zM3 3h1v1h-1zM12 3h1v1h-1zM13 3h1v1h-1zM14 3h1v1h-1zM17 3h1v1h-1zM20 3h1v1h-1zM21 3h1v1h-1zM23 3h1v1h-1zM29 3h1v1h-1zM32 3h1v1h-1zM33 3h1v1h-1zM2 4h1v1h-1zM3 4h1v1h-1zM4 4h1v1h-1zM6 4h1v1h-1zM20 4h1v1h-1zM31 4h1v1h-1zM33 4h1v1h-1zM0 5h1v1h-1zM10 5h1v1h-1zM11 5h1v1h-1zM18 5h1v1h-1zM35 5h1v1h-1zM36 5h1v1h-1zM12 6h1v1h-1zM14 6h1v1h-1zM15 6h1v1h-1zM16 6h1v1h-1zM26 6h1v1h-1zM35 6h1v1h-1zM0 7h1v1h-1zM1 7h1v1h-1zM3 7h1v1h-1zM7 7h1v1h-1zM8 7h1v1h-1zM11 7h1v1h-1zM19 7h1v1h-1zM21 7h1v1h-1zM22 7h1v1h-1zM28 7h1v1h-1zM32 7h1v1h-1zM6 8h1v1h-1zM25 8h1v1h-1zM27 8h1v1h-1zM29 8h1v1h-1zM30 8h1v1h-1zM36 8h1v1h-1zM2 9h1v1h-1zM4 9h1v1h-1zM9 9h1v1h-1zM14 9h1v1h-1zM16 9h1v1h-1zM24 9h1v1h-1zM26 9h1v1h-1zM30 9h1v1h-1zM3 10h1v1h-1zM7 10h1v1h-1zM9 10h1v1h-1zM10 10h1v1h-1zM17 10h1v1h-1zM34 10h1v1h-1zM35 10h1v1h-1zM1 11h1v1h-1zM15 11h1v1h-1zM20 11h1v1h-1zM25 11h1v1h-1zM27 11h1v1h-1zM34 11h1v1h-1zM8 12h1v1h-1zM10 12h1v1h-1zM13 12h1v1h-1zM16 12h1v1h-1zM20 12h1v1h-1zM21 12h1v1h-1zM23 12h1v1h-1zM7 13h1v1h-1zM9 13h1v1h-1zM15 13h1v1h-1zM22 13h1v1h-1zM33 13h1v1h-1zM9 14h1v1h-1zM13 14h1v1h-1zM4 15h1v1h-1zM8 15h1v1h-1zM14 15h1v1h-1zM25 15h1v1h-1zM31 15h1v1h-1zM2 16h1v1h-1zM10 16h1v1h-1zM17 16h1v1h-1zM19 16h1v1h-1zM27 16h1v1h-1zM28 16h1v1h-1zM36 16h1v1h-1zM2 17h1v1h-1zM3 17h1v1h-1zM4 17h1v1h-1zM8 17h1v1h-1zM15 17h1v1h-1zM17 17h1v1h-1zM21 17h1v1h-1zM32 17h1v1h-1zM5 18h1v1h-1zM7 18h1v1h-1zM8 18h1v1h-1zM10 18h1v1h-1zM12 18h1v1h-1zM16 18h1v1h-1zM17 18h1v1h-1zM19 18h1v1h-1zM21 18h1v1h-1zM22 18h1v1h-1zM23 18h1v1h-1zM34 18h1v1h-1zM4 19h1v1h-1zM7 19h1v1h-1zM17 19h1v1h-1zM21 19h1v1h-1zM22 19h1v1h-1zM27 19h1v1h-1zM30 19h1v1h-1zM34 19h1v1h-1zM36 19h1v1h-1zM1 20h1v1h-1zM2 20h1v1h-1zM6 20h1v1h-1zM19 20h1v1h-1zM30 20h1v1h-1zM33 20h1v1h-1zM36 20h1v1h-1zM9 21h1v1h-1zM13 21h1v1h-1zM23 21h1v1h-1zM0 22h1v1h-1zM1 22h1v1h-1zM5 22h1v1h-1zM8 22h1v1h-1zM9 22h1v1h-1zM12 22h1v1h-1zM16 22h1v1h-1zM17 22h1v1h-1zM20 22h1v1h-1zM22 22h1v1h-1zM12 23h1v1h-1zM15 23h1v1h-1zM18 23h1v1h-1zM19 23h1v1h-1zM2 24h1v1h-1zM23 24h1v1h-1zM26 24h1v1h-1zM27 24h1v1h-1zM7 25h1v1h-1zM8 25h1v1h-1zM11 25h1v1h-1zM18 25h1v1h-1zM26 25h1v1h-1zM30 25h1v1h-1zM1 26h1v1h-1zM7 26h1v1h-1zM9 26h1v1h-1zM25 26h1v1h-1zM2 27h1v1h-1zM3 27h1v1h-1zM9 27h1v1h-1zM19 27h1v1h-1zM23 27h1v1h-1zM32 27h1v1h-1zM33 27h1v1h-1zM35 27h1v1h-1zM4 28h1v1h-1zM8 28h1v1h-1zM9 28h1v1h-1zM12 28h1v1h-1zM19 28h1v1h-1zM21 28h1v1h-1zM25 28h1v1h-1zM26 28h1v1h-1zM28 28h1v1h-1zM31 28h1v1h-1zM32 28h1v1h-1zM33 28h1v1h-1z" fill="#20b0ff" fill-opacity="0.85"/></pattern>
<pattern id="pb" width="41" height="31" patternUnits="userSpaceOnUse"><path d="M2 0h1v1h-1zM3 0h1v1h-1zM20 0h1v1h-1zM21 0h1v1h-1zM29 0h1v1h-1zM31 0h1v1h-1zM40 1h1v1h-1zM5 2h1v1h-1zM10 2h1v1h-1zM18 2h1v1h-1zM22 2h1v1h-1zM24 2h1v1h-1zM26 2h1v1h-1zM33 2h1v1h-1zM36 2h1v1h-1zM40 2h1v1h-1zM1 3h1v1h-1zM13 3h1v1h-1zM16 3h1v1h-1zM25 3h1v1h-1zM28 3h1v1h-1zM29 3h1v1h-1zM31 3h1v1h-1zM6 4h1v1h-1zM7 4h1v1h-1zM9 4h1v1h-1zM12 4h1v1h-1zM27 4h1v1h-1zM31 4h1v1h-1zM40 4h1v1h-1zM1 5h1v1h-1zM5 5h1v1h-1zM11 5h1v1h-1zM15 5h1v1h-1zM23 5h1v1h-1zM24 5h1v1h-1zM25 5h1v1h-1zM30 5h1v1h-1zM13 6h1v1h-1zM18 6h1v1h-1zM19 6h1v1h-1zM23 6h1v1h-1zM30 6h1v1h-1zM34 6h1v1h-1zM6 7h1v1h-1zM29 7h1v1h-1zM35 7h1v1h-1zM0 8h1v1h-1zM8 8h1v1h-1zM16 8h1v1h-1zM17 8h1v1h-1zM27 8h1v1h-1zM28 8h1v1h-1zM37 8h1v1h-1zM1 9h1v1h-1zM14 9h1v1h-1zM22 9h1v1h-1zM35 9h1v1h-1zM40 9h1v1h-1zM10 10h1v1h-1zM5 11h1v1h-1zM6 11h1v1h-1zM22 11h1v1h-1zM35 11h1v1h-1zM40 11h1v1h-1zM21 12h1v1h-1zM22 12h1v1h-1zM24 12h1v1h-1zM28 12h1v1h-1zM31 12h1v1h-1zM32 12h1v1h-1zM37 12h1v1h-1zM40 12h1v1h-1zM4 13h1v1h-1zM6 13h1v1h-1zM13 13h1v1h-1zM15 13h1v1h-1zM16 13h1v1h-1zM17 13h1v1h-1zM19 13h1v1h-1zM29 13h1v1h-1zM8 14h1v1h-1zM18 14h1v1h-1zM23 14h1v1h-1zM25 14h1v1h-1zM4 15h1v1h-1zM0 16h1v1h-1zM11 16h1v1h-1zM13 16h1v1h-1zM17 16h1v1h-1zM36 16h1v1h-1zM38 16h1v1h-1zM9 17h1v1h-1zM12 17h1v1h-1zM16 17h1v1h-1zM24 17h1v1h-1zM26 17h1v1h-1zM33 17h1v1h-1zM35 17h1v1h-1zM6 18h1v1h-1zM15 18h1v1h-1zM18 18h1v1h-1zM23 18h1v1h-1zM30 18h1v1h-1zM37 18h1v1h-1zM2 19h1v1h-1zM4 19h1v1h-1zM7 19h1v1h-1zM12 19h1v1h-1zM17 19h1v1h-1zM31 19h1v1h-1zM33 19h1v1h-1zM7 20h1v1h-1zM31 20h1v1h-1zM20 21h1v1h-1zM22 21h1v1h-1zM30 21h1v1h-1zM35 21h1v1h-1zM36 21h1v1h-1zM37 21h1v1h-1zM40 21h1v1h-1zM1 23h1v1h-1zM4 23h1v1h-1zM5 23h1v1h-1zM11 23h1v1h-1zM16 23h1v1h-1zM23 23h1v1h-1zM26 23h1v1h-1zM31 23h1v1h-1zM35 23h1v1h-1zM39 23h1v1h-1zM10 24h1v1h-1zM11 24h1v1h-1zM12 24h1v1h-1zM24 24h1v1h-1zM25 24h1v1h-1zM30 24h1v1h-1zM36 24h1v1h-1zM39 24h1v1h-1zM8 25h1v1h-1zM14 25h1v1h-1zM27 25h1v1h-1zM36 25h1v1h-1zM8 26h1v1h-1zM18 26h1v1h-1zM24 26h1v1h-1zM27 26h1v1h-1zM32 26h1v1h-1zM15 27h1v1h-1zM16 27h1v1h-1zM20 27h1v1h-1zM36 27h1v1h-1zM3 28h1v1h-1zM19 28h1v1h-1zM23 28h1v1h-1zM32 28h1v1h-1zM38 28h1v1h-1zM3 29h1v1h-1zM13 29h1v1h-1zM23 29h1v1h-1zM24 29h1v1h-1zM30 29h1v1h-1zM31 29h1v1h-1zM33 29h1v1h-1zM37 29h1v1h-1zM6 30h1v1h-1zM15 30h1v1h-1zM23 30h1v1h-1zM26 30h1v1h-1zM31 30h1v1h-1zM39 30h1v1h-1z" fill="#0040e8" fill-opacity="0.75"/></pattern>
<pattern id="pk" width="43" height="23" patternUnits="userSpaceOnUse"><path d="M6 0h1v1h-1zM25 0h1v1h-1zM1 2h1v1h-1zM27 2h1v1h-1zM30 2h1v1h-1zM40 2h1v1h-1zM12 3h1v1h-1zM12 4h1v1h-1zM38 4h1v1h-1zM18 5h1v1h-1zM28 5h1v1h-1zM1 7h1v1h-1zM9 7h1v1h-1zM18 7h1v1h-1zM31 8h1v1h-1zM35 9h1v1h-1zM42 11h1v1h-1zM14 12h1v1h-1zM22 12h1v1h-1zM33 13h1v1h-1zM0 14h1v1h-1zM5 14h1v1h-1zM12 14h1v1h-1zM37 14h1v1h-1zM38 14h1v1h-1zM41 14h1v1h-1zM8 15h1v1h-1zM40 15h1v1h-1zM25 16h1v1h-1zM40 16h1v1h-1zM8 19h1v1h-1zM20 19h1v1h-1zM22 19h1v1h-1zM5 20h1v1h-1zM35 20h1v1h-1zM30 21h1v1h-1zM35 22h1v1h-1z" fill="#000050" fill-opacity="0.6"/></pattern>
<pattern id="pb2" width="41" height="31" patternUnits="userSpaceOnUse"><path d="M4 0h1v1h-1zM16 0h1v1h-1zM23 0h1v1h-1zM24 0h1v1h-1zM37 0h1v1h-1zM4 1h1v1h-1zM19 1h1v1h-1zM31 1h1v1h-1zM35 1h1v1h-1zM8 2h1v1h-1zM13 2h1v1h-1zM14 2h1v1h-1zM19 2h1v1h-1zM23 3h1v1h-1zM14 4h1v1h-1zM23 4h1v1h-1zM18 5h1v1h-1zM4 6h1v1h-1zM16 6h1v1h-1zM18 6h1v1h-1zM15 7h1v1h-1zM18 7h1v1h-1zM19 7h1v1h-1zM28 7h1v1h-1zM8 8h1v1h-1zM11 10h1v1h-1zM23 10h1v1h-1zM24 10h1v1h-1zM15 11h1v1h-1zM30 11h1v1h-1zM7 12h1v1h-1zM31 12h1v1h-1zM6 13h1v1h-1zM14 13h1v1h-1zM24 13h1v1h-1zM31 13h1v1h-1zM15 15h1v1h-1zM22 15h1v1h-1zM24 15h1v1h-1zM38 15h1v1h-1zM25 16h1v1h-1zM27 16h1v1h-1zM6 17h1v1h-1zM14 17h1v1h-1zM18 17h1v1h-1zM26 17h1v1h-1zM17 18h1v1h-1zM19 18h1v1h-1zM29 18h1v1h-1zM33 18h1v1h-1zM33 19h1v1h-1zM5 20h1v1h-1zM14 20h1v1h-1zM19 20h1v1h-1zM24 20h1v1h-1zM12 21h1v1h-1zM19 21h1v1h-1zM31 21h1v1h-1zM24 23h1v1h-1zM35 25h1v1h-1zM38 25h1v1h-1zM11 26h1v1h-1zM13 26h1v1h-1zM21 26h1v1h-1zM25 26h1v1h-1zM6 27h1v1h-1zM8 27h1v1h-1zM18 27h1v1h-1zM5 28h1v1h-1zM29 28h1v1h-1zM36 28h1v1h-1zM5 29h1v1h-1zM11 29h1v1h-1zM20 29h1v1h-1zM34 29h1v1h-1zM37 29h1v1h-1zM17 30h1v1h-1z" fill="#0050f0" fill-opacity="0.7"/></pattern>
<pattern id="pg" width="29" height="37" patternUnits="userSpaceOnUse"><path d="M16 0h1v1h-1zM0 2h1v1h-1zM6 2h1v1h-1zM7 3h1v1h-1zM11 3h1v1h-1zM14 3h1v1h-1zM15 3h1v1h-1zM21 3h1v1h-1zM25 3h1v1h-1zM4 4h1v1h-1zM18 4h1v1h-1zM20 4h1v1h-1zM23 4h1v1h-1zM9 5h1v1h-1zM15 5h1v1h-1zM23 5h1v1h-1zM21 6h1v1h-1zM22 6h1v1h-1zM23 6h1v1h-1zM14 7h1v1h-1zM15 7h1v1h-1zM6 8h1v1h-1zM21 8h1v1h-1zM26 8h1v1h-1zM5 9h1v1h-1zM10 9h1v1h-1zM28 9h1v1h-1zM18 10h1v1h-1zM28 10h1v1h-1zM10 11h1v1h-1zM13 11h1v1h-1zM17 11h1v1h-1zM19 11h1v1h-1zM0 12h1v1h-1zM16 12h1v1h-1zM6 13h1v1h-1zM8 13h1v1h-1zM15 13h1v1h-1zM20 13h1v1h-1zM8 14h1v1h-1zM3 15h1v1h-1zM12 15h1v1h-1zM18 15h1v1h-1zM27 15h1v1h-1zM5 16h1v1h-1zM14 16h1v1h-1zM23 16h1v1h-1zM6 17h1v1h-1zM10 17h1v1h-1zM11 17h1v1h-1zM27 17h1v1h-1zM20 18h1v1h-1zM2 19h1v1h-1zM28 19h1v1h-1zM9 20h1v1h-1zM15 20h1v1h-1zM21 20h1v1h-1zM23 20h1v1h-1zM4 21h1v1h-1zM13 21h1v1h-1zM15 21h1v1h-1zM22 21h1v1h-1zM27 21h1v1h-1zM6 22h1v1h-1zM16 22h1v1h-1zM4 23h1v1h-1zM17 24h1v1h-1zM25 24h1v1h-1zM26 24h1v1h-1zM2 25h1v1h-1zM6 25h1v1h-1zM8 25h1v1h-1zM18 25h1v1h-1zM18 26h1v1h-1zM0 27h1v1h-1zM9 27h1v1h-1zM17 27h1v1h-1zM20 27h1v1h-1zM2 28h1v1h-1zM15 28h1v1h-1zM24 28h1v1h-1zM26 28h1v1h-1zM5 29h1v1h-1zM10 29h1v1h-1zM16 29h1v1h-1zM26 30h1v1h-1zM11 31h1v1h-1zM20 31h1v1h-1zM20 32h1v1h-1zM22 32h1v1h-1zM27 32h1v1h-1zM4 33h1v1h-1zM1 34h1v1h-1zM2 34h1v1h-1zM8 34h1v1h-1zM13 34h1v1h-1zM14 34h1v1h-1zM16 34h1v1h-1zM8 35h1v1h-1zM11 35h1v1h-1zM0 36h1v1h-1zM5 36h1v1h-1z" fill="#90ff40" fill-opacity="0.6"/></pattern>
<pattern id="pn" width="47" height="19" patternUnits="userSpaceOnUse"><path d="M4 0h2v1h-2zM25 0h2v1h-2zM31 0h2v1h-2zM0 1h2v1h-2zM1 1h2v1h-2zM19 1h2v1h-2zM27 1h2v1h-2zM33 1h2v1h-2zM1 2h2v1h-2zM2 2h2v1h-2zM7 2h2v1h-2zM11 2h2v1h-2zM12 2h2v1h-2zM16 2h2v1h-2zM28 2h2v1h-2zM34 2h2v1h-2zM41 2h2v1h-2zM4 3h2v1h-2zM20 3h2v1h-2zM24 3h2v1h-2zM29 3h2v1h-2zM36 3h2v1h-2zM38 3h2v1h-2zM6 4h2v1h-2zM7 4h2v1h-2zM16 4h2v1h-2zM19 4h2v1h-2zM27 4h2v1h-2zM35 4h2v1h-2zM4 5h2v1h-2zM10 5h2v1h-2zM33 5h2v1h-2zM42 5h2v1h-2zM2 6h2v1h-2zM3 6h2v1h-2zM39 6h2v1h-2zM1 7h2v1h-2zM7 7h2v1h-2zM25 7h2v1h-2zM26 7h2v1h-2zM29 7h2v1h-2zM0 8h2v1h-2zM10 8h2v1h-2zM12 8h2v1h-2zM39 8h2v1h-2zM11 9h2v1h-2zM18 9h2v1h-2zM26 9h2v1h-2zM30 9h2v1h-2zM32 9h2v1h-2zM42 9h2v1h-2zM6 10h2v1h-2zM18 10h2v1h-2zM24 10h2v1h-2zM27 10h2v1h-2zM46 10h2v1h-2zM3 11h2v1h-2zM7 11h2v1h-2zM20 11h2v1h-2zM35 11h2v1h-2zM3 12h2v1h-2zM9 12h2v1h-2zM19 12h2v1h-2zM35 12h2v1h-2zM39 12h2v1h-2zM19 13h2v1h-2zM22 13h2v1h-2zM28 13h2v1h-2zM39 13h2v1h-2zM43 13h2v1h-2zM45 13h2v1h-2zM9 14h2v1h-2zM10 14h2v1h-2zM14 14h2v1h-2zM21 14h2v1h-2zM32 14h2v1h-2zM26 15h2v1h-2zM28 15h2v1h-2zM29 15h2v1h-2zM31 15h2v1h-2zM42 15h2v1h-2zM44 15h2v1h-2zM45 15h2v1h-2zM46 15h2v1h-2zM8 16h2v1h-2zM17 16h2v1h-2zM20 16h2v1h-2zM46 16h2v1h-2zM13 17h2v1h-2zM43 17h2v1h-2zM0 18h2v1h-2zM8 18h2v1h-2zM9 18h2v1h-2zM15 18h2v1h-2zM18 18h2v1h-2zM22 18h2v1h-2zM33 18h2v1h-2zM43 18h2v1h-2z" fill="#0a30f0" fill-opacity="0.8"/></pattern>
<pattern id="pd" width="53" height="29" patternUnits="userSpaceOnUse"><path d="M4 0h3v2h-3zM44 0h3v2h-3zM8 1h3v2h-3zM10 1h3v2h-3zM42 1h3v2h-3zM19 2h3v2h-3zM22 2h3v2h-3zM28 3h3v2h-3zM33 3h3v2h-3zM51 3h3v2h-3zM34 4h3v2h-3zM40 4h3v2h-3zM25 5h3v2h-3zM29 5h3v2h-3zM36 5h3v2h-3zM38 5h3v2h-3zM29 6h3v2h-3zM33 7h3v2h-3zM35 7h3v2h-3zM51 7h3v2h-3zM3 8h3v2h-3zM23 8h3v2h-3zM27 8h3v2h-3zM32 8h3v2h-3zM33 8h3v2h-3zM34 9h3v2h-3zM47 9h3v2h-3zM14 10h3v2h-3zM13 11h3v2h-3zM46 11h3v2h-3zM48 11h3v2h-3zM49 11h3v2h-3zM50 11h3v2h-3zM6 12h3v2h-3zM26 12h3v2h-3zM43 12h3v2h-3zM48 12h3v2h-3zM16 13h3v2h-3zM36 13h3v2h-3zM40 13h3v2h-3zM45 13h3v2h-3zM14 14h3v2h-3zM40 14h3v2h-3zM17 15h3v2h-3zM20 15h3v2h-3zM21 15h3v2h-3zM29 15h3v2h-3zM45 15h3v2h-3zM21 16h3v2h-3zM23 16h3v2h-3zM24 16h3v2h-3zM38 16h3v2h-3zM6 17h3v2h-3zM9 17h3v2h-3zM12 17h3v2h-3zM32 17h3v2h-3zM23 18h3v2h-3zM28 18h3v2h-3zM32 18h3v2h-3zM39 18h3v2h-3zM42 18h3v2h-3zM8 19h3v2h-3zM25 19h3v2h-3zM39 19h3v2h-3zM40 19h3v2h-3zM14 20h3v2h-3zM17 20h3v2h-3zM33 20h3v2h-3zM48 20h3v2h-3zM21 22h3v2h-3zM24 22h3v2h-3zM37 22h3v2h-3zM39 22h3v2h-3zM45 22h3v2h-3zM26 23h3v2h-3zM29 23h3v2h-3zM12 24h3v2h-3zM17 24h3v2h-3zM34 24h3v2h-3zM12 25h3v2h-3zM14 25h3v2h-3zM43 25h3v2h-3zM52 25h3v2h-3zM6 26h3v2h-3zM20 26h3v2h-3zM25 26h3v2h-3zM36 26h3v2h-3zM48 26h3v2h-3zM40 27h3v2h-3zM46 27h3v2h-3zM13 28h3v2h-3zM23 28h3v2h-3z" fill="#000040" fill-opacity="0.6"/></pattern>
<pattern id="pw" width="31" height="37" patternUnits="userSpaceOnUse"><path d="M6 0h1v1h-1zM16 0h1v1h-1zM26 0h1v1h-1zM17 1h1v1h-1zM28 1h1v1h-1zM0 2h1v1h-1zM4 2h1v1h-1zM5 5h1v1h-1zM10 6h1v1h-1zM1 7h1v1h-1zM28 7h1v1h-1zM28 8h1v1h-1zM29 9h1v1h-1zM1 11h1v1h-1zM3 13h1v1h-1zM9 14h1v1h-1zM12 15h1v1h-1zM30 15h1v1h-1zM5 17h1v1h-1zM1 19h1v1h-1zM12 19h1v1h-1zM12 21h1v1h-1zM18 21h1v1h-1zM0 23h1v1h-1zM4 27h1v1h-1zM7 27h1v1h-1zM0 28h1v1h-1zM29 28h1v1h-1zM2 30h1v1h-1zM13 30h1v1h-1zM4 32h1v1h-1zM2 33h1v1h-1zM12 35h1v1h-1z" fill="#80c8ff" fill-opacity="0.9"/></pattern>
<pattern id="pw2" width="31" height="37" patternUnits="userSpaceOnUse"><path d="M1 0h1v1h-1zM29 2h1v1h-1zM14 4h1v1h-1zM27 9h1v1h-1zM5 15h1v1h-1zM15 15h1v1h-1zM21 16h1v1h-1zM8 21h1v1h-1zM7 25h1v1h-1zM16 27h1v1h-1zM12 30h1v1h-1zM17 34h1v1h-1z" fill="#80c8ff" fill-opacity="0.8"/></pattern>
<pattern id="plb" width="41" height="13" patternUnits="userSpaceOnUse"><path d="M10 0h3v1h-3zM13 0h3v1h-3zM17 0h3v1h-3zM22 0h3v1h-3zM25 0h3v1h-3zM37 0h3v1h-3zM19 1h3v1h-3zM20 1h3v1h-3zM38 1h3v1h-3zM39 1h3v1h-3zM16 2h3v1h-3zM21 2h3v1h-3zM26 2h3v1h-3zM36 2h3v1h-3zM8 3h3v1h-3zM11 3h3v1h-3zM21 3h3v1h-3zM22 3h3v1h-3zM23 3h3v1h-3zM38 3h3v1h-3zM2 4h3v1h-3zM4 4h3v1h-3zM11 4h3v1h-3zM19 4h3v1h-3zM28 4h3v1h-3zM34 4h3v1h-3zM35 4h3v1h-3zM36 4h3v1h-3zM0 5h3v1h-3zM7 5h3v1h-3zM19 5h3v1h-3zM38 5h3v1h-3zM3 6h3v1h-3zM8 6h3v1h-3zM36 6h3v1h-3zM40 6h3v1h-3zM1 7h3v1h-3zM5 7h3v1h-3zM7 7h3v1h-3zM16 7h3v1h-3zM25 7h3v1h-3zM27 7h3v1h-3zM32 7h3v1h-3zM3 8h3v1h-3zM4 8h3v1h-3zM9 8h3v1h-3zM10 8h3v1h-3zM15 8h3v1h-3zM22 8h3v1h-3zM25 8h3v1h-3zM6 9h3v1h-3zM23 9h3v1h-3zM30 9h3v1h-3zM33 9h3v1h-3zM36 9h3v1h-3zM14 10h3v1h-3zM23 10h3v1h-3zM33 10h3v1h-3zM11 11h3v1h-3zM30 11h3v1h-3zM36 11h3v1h-3zM12 12h3v1h-3zM18 12h3v1h-3zM25 12h3v1h-3zM31 12h3v1h-3zM33 12h3v1h-3zM39 12h3v1h-3z" fill="#3090ff" fill-opacity="0.8"/></pattern>
</defs>
<g>
<rect x="79" y="332" width="614" height="156" fill="#00008a"/>
<rect x="79" y="332" width="3" height="24" fill="#00d7fa"/>
<rect x="82" y="332" width="1" height="24" fill="#001ee6"/>
<rect x="83" y="332" width="1" height="24" fill="#0082ff"/>
<rect x="84" y="332" width="1" height="24" fill="#001ee6"/>
<rect x="85" y="332" width="1" height="24" fill="#0082ff"/>
<rect x="86" y="332" width="2" height="24" fill="#32ff3c"/>
<rect x="88" y="332" width="1" height="24" fill="#00003c"/>
<rect x="89" y="332" width="1" height="24" fill="#0000aa"/>
<rect x="90" y="332" width="2" height="24" fill="#001ee6"/>
<rect x="92" y="332" width="1" height="24" fill="#0082ff"/>
<rect x="93" y="332" width="1" height="24" fill="#001ee6"/>
<rect x="94" y="332" width="2" height="24" fill="#00d7fa"/>
<rect x="96" y="332" width="1" height="24" fill="#0082ff"/>
<rect x="97" y="332" width="1" height="24" fill="#00d7fa"/>
<rect x="98" y="332" width="1" height="24" fill="#001ee6"/>
<rect x="99" y="332" width="1" height="24" fill="#c8aa3c"/>
<rect x="100" y="332" width="2" height="24" fill="#00003c"/>
<rect x="102" y="332" width="1" height="24" fill="#00d7fa"/>
<rect x="103" y="332" width="1" height="24" fill="#32ff3c"/>
<rect x="104" y="332" width="1" height="24" fill="#00d7fa"/>
<rect x="105" y="332" width="1" height="24" fill="#0000aa"/>
<rect x="106" y="332" width="2" height="24" fill="#001ee6"/>
<rect x="108" y="332" width="1" height="24" fill="#0082ff"/>
<rect x="109" y="332" width="1" height="24" fill="#001ee6"/>
<rect x="110" y="332" width="1" height="24" fill="#00d7fa"/>
<rect x="111" y="332" width="1" height="24" fill="#001ee6"/>
<rect x="112" y="332" width="1" height="24" fill="#0082ff"/>
<rect x="113" y="332" width="1" height="24" fill="#b4ff00"/>
<rect x="114" y="332" width="3" height="24" fill="#00d7fa"/>
<rect x="117" y="332" width="1" height="24" fill="#0000aa"/>
<rect x="118" y="332" width="2" height="24" fill="#001ee6"/>
<rect x="120" y="332" width="1" height="24" fill="#00d7fa"/>
<rect x="121" y="332" width="1" height="24" fill="#0082ff"/>
<rect x="122" y="332" width="1" height="24" fill="#00d7fa"/>
<rect x="123" y="332" width="1" height="24" fill="#001ee6"/>
<rect x="124" y="332" width="1" height="24" fill="#00d7fa"/>
<rect x="125" y="332" width="2" height="24" fill="#00003c"/>
<rect x="127" y="332" width="1" height="24" fill="#32ff3c"/>
<rect x="128" y="332" width="1" height="24" fill="#b4ff00"/>
<rect x="129" y="332" width="1" height="24" fill="#32ff3c"/>
<rect x="130" y="332" width="2" height="24" fill="#00d7fa"/>
<rect x="132" y="332" width="3" height="24" fill="#001ee6"/>
<rect x="135" y="332" width="1" height="24" fill="#0082ff"/>
<rect x="136" y="332" width="1" height="24" fill="#001ee6"/>
<rect x="137" y="332" width="3" height="24" fill="#00d7fa"/>
<rect x="140" y="332" width="1" height="24" fill="#00003c"/>
<rect x="141" y="332" width="1" height="24" fill="#0000aa"/>
<rect x="142" y="332" width="4" height="24" fill="#32ff3c"/>
<rect x="146" y="332" width="1" height="24" fill="#0000aa"/>
<rect x="147" y="332" width="3" height="24" fill="#00d7fa"/>
<rect x="150" y="332" width="2" height="24" fill="#b4ff00"/>
<rect x="152" y="332" width="1" height="24" fill="#00003c"/>
<rect x="153" y="332" width="1" height="24" fill="#0000aa"/>
<rect x="154" y="332" width="4" height="24" fill="#32ff3c"/>
<rect x="158" y="332" width="2" height="24" fill="#001ee6"/>
<rect x="160" y="332" width="1" height="24" fill="#0000aa"/>
<rect x="161" y="332" width="2" height="24" fill="#00d7fa"/>
<rect x="163" y="332" width="3" height="24" fill="#001ee6"/>
<rect x="166" y="332" width="2" height="24" fill="#00d7fa"/>
<rect x="168" y="332" width="1" height="24" fill="#32ff3c"/>
<rect x="169" y="332" width="1" height="24" fill="#b4ff00"/>
<rect x="170" y="332" width="1" height="24" fill="#0000aa"/>
<rect x="171" y="332" width="2" height="24" fill="#001ee6"/>
<rect x="173" y="332" width="1" height="24" fill="#00d7fa"/>
<rect x="174" y="332" width="1" height="24" fill="#c8aa3c"/>
<rect x="175" y="332" width="2" height="24" fill="#001ee6"/>
<rect x="177" y="332" width="2" height="24" fill="#00d7fa"/>
<rect x="179" y="332" width="1" height="24" fill="#00003c"/>
<rect x="180" y="332" width="2" height="24" fill="#32ff3c"/>
<rect x="182" y="332" width="4" height="24" fill="#00d7fa"/>
<rect x="186" y="332" width="2" height="24" fill="#001ee6"/>
<rect x="188" y="332" width="1" height="24" fill="#c8aa3c"/>
<rect x="189" y="332" width="1" height="24" fill="#0000aa"/>
<rect x="190" y="332" width="1" height="24" fill="#00d7fa"/>
<rect x="191" y="332" width="1" height="24" fill="#32ff3c"/>
<rect x="192" y="332" width="2" height="24" fill="#00d7fa"/>
<rect x="194" y="332" width="3" height="24" fill="#001ee6"/>
<rect x="197" y="332" width="2" height="24" fill="#00d7fa"/>
<rect x="199" y="332" width="1" height="24" fill="#0000aa"/>
<rect x="200" y="332" width="1" height="24" fill="#001ee6"/>
<rect x="201" y="332" width="1" height="24" fill="#00d7fa"/>
<rect x="202" y="332" width="2" height="24" fill="#001ee6"/>
<rect x="204" y="332" width="2" height="24" fill="#00d7fa"/>
<rect x="206" y="332" width="2" height="24" fill="#001ee6"/>
<rect x="208" y="332" width="2" height="24" fill="#00d7fa"/>
<rect x="210" y="332" width="3" height="24" fill="#001ee6"/>
<rect x="213" y="332" width="1" height="24" fill="#0082ff"/>
<rect x="214" y="332" width="2" height="24" fill="#001ee6"/>
<rect x="216" y="332" width="3" height="24" fill="#00d7fa"/>
<rect x="219" y="332" width="2" height="24" fill="#001ee6"/>
<rect x="221" y="332" width="1" height="24" fill="#c8aa3c"/>
<rect x="222" y="332" width="1" height="24" fill="#32ff3c"/>
<rect x="223" y="332" width="1" height="24" fill="#b4ff00"/>
<rect x="224" y="332" width="1" height="24" fill="#32ff3c"/>
<rect x="225" y="332" width="3" height="24" fill="#00d7fa"/>
<rect x="228" y="332" width="1" height="24" fill="#0082ff"/>
<rect x="229" y="332" width="1" height="24" fill="#001ee6"/>
<rect x="230" y="332" width="1" height="24" fill="#00d7fa"/>
<rect x="231" y="332" width="3" height="24" fill="#32ff3c"/>
<rect x="234" y="332" width="3" height="24" fill="#00d7fa"/>
<rect x="237" y="332" width="3" height="24" fill="#32ff3c"/>
<rect x="240" y="332" width="1" height="24" fill="#00d7fa"/>
<rect x="241" y="332" width="1" height="24" fill="#32ff3c"/>
<rect x="242" y="332" width="1" height="24" fill="#00d7fa"/>
<rect x="243" y="332" width="3" height="24" fill="#001ee6"/>
<rect x="246" y="332" width="2" height="24" fill="#00d7fa"/>
<rect x="248" y="332" width="3" height="24" fill="#001ee6"/>
<rect x="251" y="332" width="1" height="24" fill="#00d7fa"/>
<rect x="252" y="332" width="3" height="24" fill="#32ff3c"/>
<rect x="255" y="332" width="1" height="24" fill="#b4ff00"/>
<rect x="256" y="332" width="1" height="24" fill="#c8aa3c"/>
<rect x="257" y="332" width="1" height="24" fill="#32ff3c"/>
<rect x="258" y="332" width="1" height="24" fill="#0000aa"/>
<rect x="259" y="332" width="1" height="24" fill="#00d7fa"/>
<rect x="260" y="332" width="1" height="24" fill="#0000aa"/>
<rect x="261" y="332" width="2" height="24" fill="#001ee6"/>
<rect x="263" y="332" width="3" height="24" fill="#00d7fa"/>
<rect x="266" y="332" width="2" height="24" fill="#001ee6"/>
<rect x="268" y="332" width="2" height="24" fill="#00d7fa"/>
<rect x="270" y="332" width="1" height="24" fill="#32ff3c"/>
<rect x="271" y="332" width="1" height="24" fill="#00d7fa"/>
<rect x="272" y="332" width="1" height="24" fill="#32ff3c"/>
<rect x="273" y="332" width="1" height="24" fill="#c8aa3c"/>
<rect x="274" y="332" width="1" height="24" fill="#32ff3c"/>
<rect x="275" y="332" width="1" height="24" fill="#00003c"/>
<rect x="276" y="332" width="2" height="24" fill="#00d7fa"/>
<rect x="278" y="332" width="4" height="24" fill="#001ee6"/>
<rect x="282" y="332" width="3" height="24" fill="#00d7fa"/>
<rect x="285" y="332" width="1" height="24" fill="#0000aa"/>
<rect x="286" y="332" width="1" height="24" fill="#00003c"/>
<rect x="287" y="332" width="1" height="24" fill="#32ff3c"/>
<rect x="288" y="332" width="1" height="24" fill="#b4ff00"/>
<rect x="289" y="332" width="2" height="24" fill="#32ff3c"/>
<rect x="291" y="332" width="1" height="24" fill="#00d7fa"/>
<rect x="292" y="332" width="1" height="24" fill="#32ff3c"/>
<rect x="293" y="332" width="2" height="24" fill="#00d7fa"/>
<rect x="295" y="332" width="1" height="24" fill="#0000aa"/>
<rect x="296" y="332" width="1" height="24" fill="#001ee6"/>
<rect x="297" y="332" width="1" height="24" fill="#0000aa"/>
<rect x="298" y="332" width="1" height="24" fill="#001ee6"/>
<rect x="299" y="332" width="3" height="24" fill="#00d7fa"/>
<rect x="302" y="332" width="1" height="24" fill="#b4ff00"/>
<rect x="303" y="332" width="1" height="24" fill="#32ff3c"/>
<rect x="304" y="332" width="1" height="24" fill="#0000aa"/>
<rect x="305" y="332" width="2" height="24" fill="#001ee6"/>
<rect x="307" y="332" width="2" height="24" fill="#00d7fa"/>
<rect x="309" y="332" width="4" height="24" fill="#001ee6"/>
<rect x="313" y="332" width="1" height="24" fill="#0082ff"/>
<rect x="314" y="332" width="5" height="24" fill="#32ff3c"/>
<rect x="319" y="332" width="1" height="24" fill="#00d7fa"/>
<rect x="320" y="332" width="3" height="24" fill="#001ee6"/>
<rect x="323" y="332" width="1" height="24" fill="#0082ff"/>
<rect x="324" y="332" width="1" height="24" fill="#32ff3c"/>
<rect x="325" y="332" width="4" height="24" fill="#00d7fa"/>
<rect x="329" y="332" width="3" height="24" fill="#001ee6"/>
<rect x="332" y="332" width="1" height="24" fill="#0082ff"/>
<rect x="333" y="332" width="1" height="24" fill="#32ff3c"/>
<rect x="334" y="332" width="1" height="24" fill="#00003c"/>
<rect x="335" y="332" width="1" height="24" fill="#0000aa"/>
<rect x="336" y="332" width="2" height="24" fill="#b4ff00"/>
<rect x="338" y="332" width="1" height="24" fill="#c8aa3c"/>
<rect x="339" y="332" width="3" height="24" fill="#00d7fa"/>
<rect x="342" y="332" width="1" height="24" fill="#0082ff"/>
<rect x="343" y="332" width="1" height="24" fill="#001ee6"/>
<rect x="344" y="332" width="3" height="24" fill="#00d7fa"/>
<rect x="347" y="332" width="2" height="24" fill="#001ee6"/>
<rect x="349" y="332" width="1" height="24" fill="#00d7fa"/>
<rect x="350" y="332" width="1" height="24" fill="#32ff3c"/>
<rect x="351" y="332" width="2" height="24" fill="#00003c"/>
<rect x="353" y="332" width="6" height="24" fill="#32ff3c"/>
<rect x="359" y="332" width="2" height="24" fill="#001ee6"/>
<rect x="361" y="332" width="2" height="24" fill="#00003c"/>
<rect x="363" y="332" width="2" height="24" fill="#00d7fa"/>
<rect x="365" y="332" width="3" height="24" fill="#001ee6"/>
<rect x="368" y="332" width="2" height="24" fill="#00d7fa"/>
<rect x="370" y="332" width="1" height="24" fill="#0000aa"/>
<rect x="371" y="332" width="1" height="24" fill="#00003c"/>
<rect x="372" y="332" width="1" height="24" fill="#00d7fa"/>
<rect x="373" y="332" width="1" height="24" fill="#32ff3c"/>
<rect x="374" y="332" width="1" height="24" fill="#00d7fa"/>
<rect x="375" y="332" width="3" height="24" fill="#001ee6"/>
<rect x="378" y="332" width="1" height="24" fill="#0082ff"/>
<rect x="379" y="332" width="2" height="24" fill="#001ee6"/>
<rect x="381" y="332" width="1" height="24" fill="#00d7fa"/>
<rect x="382" y="332" width="1" height="24" fill="#32ff3c"/>
<rect x="383" y="332" width="1" height="24" fill="#00d7fa"/>
<rect x="384" y="332" width="1" height="24" fill="#001ee6"/>
<rect x="385" y="332" width="1" height="24" fill="#0000aa"/>
<rect x="386" y="332" width="2" height="24" fill="#001ee6"/>
<rect x="388" y="332" width="1" height="24" fill="#0082ff"/>
<rect x="389" y="332" width="3" height="24" fill="#00d7fa"/>
<rect x="392" y="332" width="1" height="24" fill="#b4ff00"/>
<rect x="393" y="332" width="2" height="24" fill="#00003c"/>
<rect x="395" y="332" width="3" height="24" fill="#00d7fa"/>
<rect x="398" y="332" width="3" height="24" fill="#001ee6"/>
<rect x="401" y="332" width="1" height="24" fill="#0082ff"/>
<rect x="402" y="332" width="1" height="24" fill="#001ee6"/>
<rect x="403" y="332" width="3" height="24" fill="#00d7fa"/>
<rect x="406" y="332" width="2" height="24" fill="#001ee6"/>
<rect x="408" y="332" width="2" height="24" fill="#00003c"/>
<rect x="410" y="332" width="1" height="24" fill="#b4ff00"/>
<rect x="411" y="332" width="4" height="24" fill="#32ff3c"/>
<rect x="415" y="332" width="3" height="24" fill="#001ee6"/>
<rect x="418" y="332" width="1" height="24" fill="#0082ff"/>
<rect x="419" y="332" width="3" height="24" fill="#00d7fa"/>
<rect x="422" y="332" width="3" height="24" fill="#32ff3c"/>
<rect x="425" y="332" width="2" height="24" fill="#00d7fa"/>
<rect x="427" y="332" width="2" height="24" fill="#001ee6"/>
<rect x="429" y="332" width="1" height="24" fill="#00d7fa"/>
<rect x="430" y="332" width="1" height="24" fill="#32ff3c"/>
<rect x="431" y="332" width="1" height="24" fill="#b4ff00"/>
<rect x="432" y="332" width="1" height="24" fill="#c8aa3c"/>
<rect x="433" y="332" width="1" height="24" fill="#0082ff"/>
<rect x="434" y="332" width="1" height="24" fill="#00d7fa"/>
<rect x="435" y="332" width="1" height="24" fill="#001ee6"/>
<rect x="436" y="332" width="1" height="24" fill="#00d7fa"/>
<rect x="437" y="332" width="1" height="24" fill="#0082ff"/>
<rect x="438" y="332" width="1" height="24" fill="#001ee6"/>
<rect x="439" y="332" width="1" height="24" fill="#00d7fa"/>
<rect x="440" y="332" width="1" height="24" fill="#32ff3c"/>
<rect x="441" y="332" width="1" height="24" fill="#00d7fa"/>
<rect x="442" y="332" width="1" height="24" fill="#00003c"/>
<rect x="443" y="332" width="2" height="24" fill="#00d7fa"/>
<rect x="445" y="332" width="1" height="24" fill="#001ee6"/>
<rect x="446" y="332" width="1" height="24" fill="#0000aa"/>
<rect x="447" y="332" width="2" height="24" fill="#001ee6"/>
<rect x="449" y="332" width="1" height="24" fill="#00d7fa"/>
<rect x="450" y="332" width="1" height="24" fill="#00003c"/>
<rect x="451" y="332" width="1" height="24" fill="#0000aa"/>
<rect x="452" y="332" width="1" height="24" fill="#001ee6"/>
<rect x="453" y="332" width="1" height="24" fill="#00d7fa"/>
<rect x="454" y="332" width="1" height="24" fill="#001ee6"/>
<rect x="455" y="332" width="1" height="24" fill="#00d7fa"/>
<rect x="456" y="332" width="3" height="24" fill="#32ff3c"/>
<rect x="459" y="332" width="2" height="24" fill="#001ee6"/>
<rect x="461" y="332" width="2" height="24" fill="#00003c"/>
<rect x="463" y="332" width="2" height="24" fill="#32ff3c"/>
<rect x="465" y="332" width="1" height="24" fill="#001ee6"/>
<rect x="466" y="332" width="1" height="24" fill="#00d7fa"/>
<rect x="467" y="332" width="1" height="24" fill="#001ee6"/>
<rect x="468" y="332" width="3" height="24" fill="#00d7fa"/>
<rect x="471" y="332" width="1" height="24" fill="#00003c"/>
<rect x="472" y="332" width="1" height="24" fill="#001ee6"/>
<rect x="473" y="332" width="1" height="24" fill="#0082ff"/>
<rect x="474" y="332" width="1" height="24" fill="#32ff3c"/>
<rect x="475" y="332" width="1" height="24" fill="#00d7fa"/>
<rect x="476" y="332" width="1" height="24" fill="#32ff3c"/>
<rect x="477" y="332" width="1" height="24" fill="#c8aa3c"/>
<rect x="478" y="332" width="1" height="24" fill="#32ff3c"/>
<rect x="479" y="332" width="1" height="24" fill="#c8aa3c"/>
<rect x="480" y="332" width="1" height="24" fill="#00d7fa"/>
<rect x="481" y="332" width="2" height="24" fill="#00003c"/>
<rect x="483" y="332" width="3" height="24" fill="#32ff3c"/>
<rect x="486" y="332" width="1" height="24" fill="#00d7fa"/>
<rect x="487" y="332" width="1" height="24" fill="#32ff3c"/>
<rect x="488" y="332" width="3" height="24" fill="#001ee6"/>
<rect x="491" y="332" width="1" height="24" fill="#0082ff"/>
<rect x="492" y="332" width="1" height="24" fill="#00003c"/>
<rect x="493" y="332" width="1" height="24" fill="#00d7fa"/>
<rect x="494" y="332" width="1" height="24" fill="#001ee6"/>
<rect x="495" y="332" width="1" height="24" fill="#0000aa"/>
<rect x="496" y="332" width="1" height="24" fill="#00003c"/>
<rect x="497" y="332" width="2" height="24" fill="#32ff3c"/>
<rect x="499" y="332" width="1" height="24" fill="#00003c"/>
<rect x="500" y="332" width="2" height="24" fill="#32ff3c"/>
<rect x="502" y="332" width="1" height="24" fill="#b4ff00"/>
<rect x="503" y="332" width="2" height="24" fill="#32ff3c"/>
<rect x="505" y="332" width="2" height="24" fill="#00d7fa"/>
<rect x="507" y="332" width="3" height="24" fill="#32ff3c"/>
<rect x="510" y="332" width="4" height="24" fill="#001ee6"/>
<rect x="514" y="332" width="1" height="24" fill="#00003c"/>
<rect x="515" y="332" width="4" height="24" fill="#00d7fa"/>
<rect x="519" y="332" width="2" height="24" fill="#32ff3c"/>
<rect x="521" y="332" width="1" height="24" fill="#00d7fa"/>
<rect x="522" y="332" width="1" height="24" fill="#32ff3c"/>
<rect x="523" y="332" width="1" height="24" fill="#00d7fa"/>
<rect x="524" y="332" width="3" height="24" fill="#001ee6"/>
<rect x="527" y="332" width="2" height="24" fill="#00003c"/>
<rect x="529" y="332" width="2" height="24" fill="#00d7fa"/>
<rect x="531" y="332" width="4" height="24" fill="#0000aa"/>
<rect x="535" y="332" width="1" height="24" fill="#00d7fa"/>
<rect x="536" y="332" width="1" height="24" fill="#32ff3c"/>
<rect x="537" y="332" width="4" height="24" fill="#00d7fa"/>
<rect x="541" y="332" width="2" height="24" fill="#00003c"/>
<rect x="543" y="332" width="3" height="24" fill="#32ff3c"/>
<rect x="546" y="332" width="3" height="24" fill="#00d7fa"/>
<rect x="549" y="332" width="3" height="24" fill="#001ee6"/>
<rect x="552" y="332" width="4" height="24" fill="#32ff3c"/>
<rect x="556" y="332" width="4" height="24" fill="#00d7fa"/>
<rect x="560" y="332" width="3" height="24" fill="#001ee6"/>
<rect x="563" y="332" width="1" height="24" fill="#00003c"/>
<rect x="564" y="332" width="2" height="24" fill="#00d7fa"/>
<rect x="566" y="332" width="1" height="24" fill="#b4ff00"/>
<rect x="567" y="332" width="1" height="24" fill="#32ff3c"/>
<rect x="568" y="332" width="1" height="24" fill="#b4ff00"/>
<rect x="569" y="332" width="1" height="24" fill="#00d7fa"/>
<rect x="570" y="332" width="1" height="24" fill="#001ee6"/>
<rect x="571" y="332" width="1" height="24" fill="#0000aa"/>
<rect x="572" y="332" width="2" height="24" fill="#001ee6"/>
<rect x="574" y="332" width="1" height="24" fill="#0000aa"/>
<rect x="575" y="332" width="2" height="24" fill="#32ff3c"/>
<rect x="577" y="332" width="2" height="24" fill="#001ee6"/>
<rect x="579" y="332" width="1" height="24" fill="#00d7fa"/>
<rect x="580" y="332" width="1" height="24" fill="#32ff3c"/>
<rect x="581" y="332" width="3" height="24" fill="#00d7fa"/>
<rect x="584" y="332" width="3" height="24" fill="#001ee6"/>
<rect x="587" y="332" width="1" height="24" fill="#0082ff"/>
<rect x="588" y="332" width="3" height="24" fill="#32ff3c"/>
<rect x="591" y="332" width="1" height="24" fill="#c8aa3c"/>
<rect x="592" y="332" width="2" height="24" fill="#00d7fa"/>
<rect x="594" y="332" width="1" height="24" fill="#0082ff"/>
<rect x="595" y="332" width="4" height="24" fill="#00d7fa"/>
<rect x="599" y="332" width="1" height="24" fill="#00003c"/>
<rect x="600" y="332" width="3" height="24" fill="#001ee6"/>
<rect x="603" y="332" width="3" height="24" fill="#00d7fa"/>
<rect x="606" y="332" width="2" height="24" fill="#32ff3c"/>
<rect x="608" y="332" width="1" height="24" fill="#00003c"/>
<rect x="609" y="332" width="1" height="24" fill="#c8aa3c"/>
<rect x="610" y="332" width="1" height="24" fill="#32ff3c"/>
<rect x="611" y="332" width="3" height="24" fill="#00d7fa"/>
<rect x="614" y="332" width="2" height="24" fill="#001ee6"/>
<rect x="616" y="332" width="1" height="24" fill="#0000aa"/>
<rect x="617" y="332" width="2" height="24" fill="#00d7fa"/>
<rect x="619" y="332" width="1" height="24" fill="#0000aa"/>
<rect x="620" y="332" width="2" height="24" fill="#001ee6"/>
<rect x="622" y="332" width="1" height="24" fill="#00d7fa"/>
<rect x="623" y="332" width="3" height="24" fill="#001ee6"/>
<rect x="626" y="332" width="1" height="24" fill="#00d7fa"/>
<rect x="627" y="332" width="1" height="24" fill="#32ff3c"/>
<rect x="628" y="332" width="2" height="24" fill="#001ee6"/>
<rect x="630" y="332" width="1" height="24" fill="#0082ff"/>
<rect x="631" y="332" width="2" height="24" fill="#001ee6"/>
<rect x="633" y="332" width="1" height="24" fill="#00003c"/>
<rect x="634" y="332" width="1" height="24" fill="#c8aa3c"/>
<rect x="635" y="332" width="1" height="24" fill="#b4ff00"/>
<rect x="636" y="332" width="1" height="24" fill="#00d7fa"/>
<rect x="637" y="332" width="1" height="24" fill="#001ee6"/>
<rect x="638" y="332" width="1" height="24" fill="#00d7fa"/>
<rect x="639" y="332" width="1" height="24" fill="#0082ff"/>
<rect x="640" y="332" width="1" height="24" fill="#001ee6"/>
<rect x="641" y="332" width="1" height="24" fill="#00d7fa"/>
<rect x="642" y="332" width="1" height="24" fill="#001ee6"/>
<rect x="643" y="332" width="2" height="24" fill="#00003c"/>
<rect x="645" y="332" width="3" height="24" fill="#00d7fa"/>
<rect x="648" y="332" width="3" height="24" fill="#32ff3c"/>
<rect x="651" y="332" width="1" height="24" fill="#001ee6"/>
<rect x="652" y="332" width="1" height="24" fill="#00d7fa"/>
<rect x="653" y="332" width="1" height="24" fill="#001ee6"/>
<rect x="654" y="332" width="5" height="24" fill="#00d7fa"/>
<rect x="659" y="332" width="1" height="24" fill="#00003c"/>
<rect x="660" y="332" width="3" height="24" fill="#32ff3c"/>
<rect x="663" y="332" width="4" height="24" fill="#001ee6"/>
<rect x="667" y="332" width="1" height="24" fill="#00003c"/>
<rect x="668" y="332" width="3" height="24" fill="#32ff3c"/>
<rect x="671" y="332" width="1" height="24" fill="#00d7fa"/>
<rect x="672" y="332" width="1" height="24" fill="#32ff3c"/>
<rect x="673" y="332" width="1" height="24" fill="#00d7fa"/>
<rect x="674" y="332" width="1" height="24" fill="#001ee6"/>
<rect x="675" y="332" width="1" height="24" fill="#00003c"/>
<rect x="676" y="332" width="1" height="24" fill="#001ee6"/>
<rect x="677" y="332" width="4" height="24" fill="#00d7fa"/>
<rect x="681" y="332" width="1" height="24" fill="#001ee6"/>
<rect x="682" y="332" width="4" height="24" fill="#00d7fa"/>
<rect x="686" y="332" width="3" height="24" fill="#001ee6"/>
<rect x="689" y="332" width="1" height="24" fill="#0082ff"/>
<rect x="690" y="332" width="3" height="24" fill="#001ee6"/>
<rect x="79" y="356" width="3" height="15" fill="#00b4fa"/>
<rect x="82" y="356" width="1" height="15" fill="#000ad2"/>
<rect x="83" y="356" width="1" height="15" fill="#005afa"/>
<rect x="84" y="356" width="1" height="15" fill="#000ad2"/>
<rect x="85" y="356" width="1" height="15" fill="#005afa"/>
<rect x="86" y="356" width="2" height="15" fill="#14f564"/>
<rect x="88" y="356" width="1" height="15" fill="#000032"/>
<rect x="89" y="356" width="1" height="15" fill="#00008c"/>
<rect x="90" y="356" width="2" height="15" fill="#000ad2"/>
<rect x="92" y="356" width="1" height="15" fill="#005afa"/>
<rect x="93" y="356" width="1" height="15" fill="#000ad2"/>
<rect x="94" y="356" width="2" height="15" fill="#00b4fa"/>
<rect x="96" y="356" width="1" height="15" fill="#005afa"/>
<rect x="97" y="356" width="1" height="15" fill="#00b4fa"/>
<rect x="98" y="356" width="1" height="15" fill="#000ad2"/>
<rect x="99" y="356" width="1" height="15" fill="#b4963c"/>
<rect x="100" y="356" width="2" height="15" fill="#000032"/>
<rect x="102" y="356" width="1" height="15" fill="#00b4fa"/>
<rect x="103" y="356" width="1" height="15" fill="#14f564"/>
<rect x="104" y="356" width="1" height="15" fill="#00b4fa"/>
<rect x="105" y="356" width="1" height="15" fill="#00008c"/>
<rect x="106" y="356" width="2" height="15" fill="#000ad2"/>
<rect x="108" y="356" width="1" height="15" fill="#005afa"/>
<rect x="109" y="356" width="1" height="15" fill="#000ad2"/>
<rect x="110" y="356" width="1" height="15" fill="#00b4fa"/>
<rect x="111" y="356" width="1" height="15" fill="#000ad2"/>
<rect x="112" y="356" width="1" height="15" fill="#005afa"/>
<rect x="113" y="356" width="1" height="15" fill="#aaff00"/>
<rect x="114" y="356" width="3" height="15" fill="#00b4fa"/>
<rect x="117" y="356" width="1" height="15" fill="#00008c"/>
<rect x="118" y="356" width="2" height="15" fill="#000ad2"/>
<rect x="120" y="356" width="1" height="15" fill="#00b4fa"/>
<rect x="121" y="356" width="1" height="15" fill="#005afa"/>
<rect x="122" y="356" width="1" height="15" fill="#00b4fa"/>
<rect x="123" y="356" width="1" height="15" fill="#000ad2"/>
<rect x="124" y="356" width="1" height="15" fill="#00b4fa"/>
<rect x="125" y="356" width="2" height="15" fill="#000032"/>
<rect x="127" y="356" width="1" height="15" fill="#14f564"/>
<rect x="128" y="356" width="1" height="15" fill="#aaff00"/>
<rect x="129" y="356" width="1" height="15" fill="#14f564"/>
<rect x="130" y="356" width="2" height="15" fill="#00b4fa"/>
<rect x="132" y="356" width="3" height="15" fill="#000ad2"/>
<rect x="135" y="356" width="1" height="15" fill="#005afa"/>
<rect x="136" y="356" width="1" height="15" fill="#000ad2"/>
<rect x="137" y="356" width="3" height="15" fill="#00b4fa"/>
<rect x="140" y="356" width="1" height="15" fill="#000032"/>
<rect x="141" y="356" width="1" height="15" fill="#00008c"/>
<rect x="142" y="356" width="4" height="15" fill="#14f564"/>
<rect x="146" y="356" width="1" height="15" fill="#00008c"/>
<rect x="147" y="356" width="3" height="15" fill="#00b4fa"/>
<rect x="150" y="356" width="2" height="15" fill="#aaff00"/>
<rect x="152" y="356" width="1" height="15" fill="#000032"/>
<rect x="153" y="356" width="1" height="15" fill="#00008c"/>
<rect x="154" y="356" width="4" height="15" fill="#14f564"/>
<rect x="158" y="356" width="2" height="15" fill="#000ad2"/>
<rect x="160" y="356" width="1" height="15" fill="#00008c"/>
<rect x="161" y="356" width="2" height="15" fill="#00b4fa"/>
<rect x="163" y="356" width="3" height="15" fill="#000ad2"/>
<rect x="166" y="356" width="2" height="15" fill="#00b4fa"/>
<rect x="168" y="356" width="1" height="15" fill="#14f564"/>
<rect x="169" y="356" width="1" height="15" fill="#aaff00"/>
<rect x="170" y="356" width="1" height="15" fill="#00008c"/>
<rect x="171" y="356" width="2" height="15" fill="#000ad2"/>
<rect x="173" y="356" width="1" height="15" fill="#00b4fa"/>
<rect x="174" y="356" width="1" height="15" fill="#b4963c"/>
<rect x="175" y="356" width="2" height="15" fill="#000ad2"/>
<rect x="177" y="356" width="2" height="15" fill="#00b4fa"/>
<rect x="179" y="356" width="1" height="15" fill="#000032"/>
<rect x="180" y="356" width="2" height="15" fill="#14f564"/>
<rect x="182" y="356" width="4" height="15" fill="#00b4fa"/>
<rect x="186" y="356" width="2" height="15" fill="#000ad2"/>
<rect x="188" y="356" width="1" height="15" fill="#b4963c"/>
<rect x="189" y="356" width="1" height="15" fill="#00008c"/>
<rect x="190" y="356" width="1" height="15" fill="#00b4fa"/>
<rect x="191" y="356" width="1" height="15" fill="#14f564"/>
<rect x="192" y="356" width="2" height="15" fill="#00b4fa"/>
<rect x="194" y="356" width="3" height="15" fill="#000ad2"/>
<rect x="197" y="356" width="2" height="15" fill="#00b4fa"/>
<rect x="199" y="356" width="1" height="15" fill="#00008c"/>
<rect x="200" y="356" width="1" height="15" fill="#000ad2"/>
<rect x="201" y="356" width="1" height="15" fill="#00b4fa"/>
<rect x="202" y="356" width="2" height="15" fill="#000ad2"/>
<rect x="204" y="356" width="2" height="15" fill="#00b4fa"/>
<rect x="206" y="356" width="2" height="15" fill="#000ad2"/>
<rect x="208" y="356" width="2" height="15" fill="#00b4fa"/>
<rect x="210" y="356" width="3" height="15" fill="#000ad2"/>
<rect x="213" y="356" width="1" height="15" fill="#005afa"/>
<rect x="214" y="356" width="2" height="15" fill="#000ad2"/>
<rect x="216" y="356" width="3" height="15" fill="#00b4fa"/>
<rect x="219" y="356" width="2" height="15" fill="#000ad2"/>
<rect x="221" y="356" width="1" height="15" fill="#b4963c"/>
<rect x="222" y="356" width="1" height="15" fill="#14f564"/>
<rect x="223" y="356" width="1" height="15" fill="#aaff00"/>
<rect x="224" y="356" width="1" height="15" fill="#14f564"/>
<rect x="225" y="356" width="3" height="15" fill="#00b4fa"/>
<rect x="228" y="356" width="1" height="15" fill="#005afa"/>
<rect x="229" y="356" width="1" height="15" fill="#000ad2"/>
<rect x="230" y="356" width="1" height="15" fill="#00b4fa"/>
<rect x="231" y="356" width="3" height="15" fill="#14f564"/>
<rect x="234" y="356" width="3" height="15" fill="#00b4fa"/>
<rect x="237" y="356" width="3" height="15" fill="#14f564"/>
<rect x="240" y="356" width="1" height="15" fill="#00b4fa"/>
<rect x="241" y="356" width="1" height="15" fill="#14f564"/>
<rect x="242" y="356" width="1" height="15" fill="#00b4fa"/>
<rect x="243" y="356" width="3" height="15" fill="#000ad2"/>
<rect x="246" y="356" width="2" height="15" fill="#00b4fa"/>
<rect x="248" y="356" width="3" height="15" fill="#000ad2"/>
<rect x="251" y="356" width="1" height="15" fill="#00b4fa"/>
<rect x="252" y="356" width="3" height="15" fill="#14f564"/>
<rect x="255" y="356" width="1" height="15" fill="#aaff00"/>
<rect x="256" y="356" width="1" height="15" fill="#b4963c"/>
<rect x="257" y="356" width="1" height="15" fill="#14f564"/>
<rect x="258" y="356" width="1" height="15" fill="#00008c"/>
<rect x="259" y="356" width="1" height="15" fill="#00b4fa"/>
<rect x="260" y="356" width="1" height="15" fill="#00008c"/>
<rect x="261" y="356" width="2" height="15" fill="#000ad2"/>
<rect x="263" y="356" width="3" height="15" fill="#00b4fa"/>
<rect x="266" y="356" width="2" height="15" fill="#000ad2"/>
<rect x="268" y="356" width="2" height="15" fill="#00b4fa"/>
<rect x="270" y="356" width="1" height="15" fill="#14f564"/>
<rect x="271" y="356" width="1" height="15" fill="#00b4fa"/>
<rect x="272" y="356" width="1" height="15" fill="#14f564"/>
<rect x="273" y="356" width="1" height="15" fill="#b4963c"/>
<rect x="274" y="356" width="1" height="15" fill="#14f564"/>
<rect x="275" y="356" width="1" height="15" fill="#000032"/>
<rect x="276" y="356" width="2" height="15" fill="#00b4fa"/>
<rect x="278" y="356" width="4" height="15" fill="#000ad2"/>
<rect x="282" y="356" width="3" height="15" fill="#00b4fa"/>
<rect x="285" y="356" width="1" height="15" fill="#00008c"/>
<rect x="286" y="356" width="1" height="15" fill="#000032"/>
<rect x="287" y="356" width="1" height="15" fill="#14f564"/>
<rect x="288" y="356" width="1" height="15" fill="#aaff00"/>
<rect x="289" y="356" width="2" height="15" fill="#14f564"/>
<rect x="291" y="356" width="1" height="15" fill="#00b4fa"/>
<rect x="292" y="356" width="1" height="15" fill="#14f564"/>
<rect x="293" y="356" width="2" height="15" fill="#00b4fa"/>
<rect x="295" y="356" width="1" height="15" fill="#00008c"/>
<rect x="296" y="356" width="1" height="15" fill="#000ad2"/>
<rect x="297" y="356" width="1" height="15" fill="#00008c"/>
<rect x="298" y="356" width="1" height="15" fill="#000ad2"/>
<rect x="299" y="356" width="3" height="15" fill="#00b4fa"/>
<rect x="302" y="356" width="1" height="15" fill="#aaff00"/>
<rect x="303" y="356" width="1" height="15" fill="#14f564"/>
<rect x="304" y="356" width="1" height="15" fill="#00008c"/>
<rect x="305" y="356" width="2" height="15" fill="#000ad2"/>
<rect x="307" y="356" width="2" height="15" fill="#00b4fa"/>
<rect x="309" y="356" width="4" height="15" fill="#000ad2"/>
<rect x="313" y="356" width="1" height="15" fill="#005afa"/>
<rect x="314" y="356" width="5" height="15" fill="#14f564"/>
<rect x="319" y="356" width="1" height="15" fill="#00b4fa"/>
<rect x="320" y="356" width="3" height="15" fill="#000ad2"/>
<rect x="323" y="356" width="1" height="15" fill="#005afa"/>
<rect x="324" y="356" width="1" height="15" fill="#14f564"/>
<rect x="325" y="356" width="4" height="15" fill="#00b4fa"/>
<rect x="329" y="356" width="3" height="15" fill="#000ad2"/>
<rect x="332" y="356" width="1" height="15" fill="#005afa"/>
<rect x="333" y="356" width="1" height="15" fill="#14f564"/>
<rect x="334" y="356" width="1" height="15" fill="#000032"/>
<rect x="335" y="356" width="1" height="15" fill="#00008c"/>
<rect x="336" y="356" width="2" height="15" fill="#aaff00"/>
<rect x="338" y="356" width="1" height="15" fill="#b4963c"/>
<rect x="339" y="356" width="3" height="15" fill="#00b4fa"/>
<rect x="342" y="356" width="1" height="15" fill="#005afa"/>
<rect x="343" y="356" width="1" height="15" fill="#000ad2"/>
<rect x="344" y="356" width="3" height="15" fill="#00b4fa"/>
<rect x="347" y="356" width="2" height="15" fill="#000ad2"/>
<rect x="349" y="356" width="1" height="15" fill="#00b4fa"/>
<rect x="350" y="356" width="1" height="15" fill="#14f564"/>
<rect x="351" y="356" width="2" height="15" fill="#000032"/>
<rect x="353" y="356" width="6" height="15" fill="#14f564"/>
<rect x="359" y="356" width="2" height="15" fill="#000ad2"/>
<rect x="361" y="356" width="2" height="15" fill="#000032"/>
<rect x="363" y="356" width="2" height="15" fill="#00b4fa"/>
<rect x="365" y="356" width="3" height="15" fill="#000ad2"/>
<rect x="368" y="356" width="2" height="15" fill="#00b4fa"/>
<rect x="370" y="356" width="1" height="15" fill="#00008c"/>
<rect x="371" y="356" width="1" height="15" fill="#000032"/>
<rect x="372" y="356" width="1" height="15" fill="#00b4fa"/>
<rect x="373" y="356" width="1" height="15" fill="#14f564"/>
<rect x="374" y="356" width="1" height="15" fill="#00b4fa"/>
<rect x="375" y="356" width="3" height="15" fill="#000ad2"/>
<rect x="378" y="356" width="1" height="15" fill="#005afa"/>
<rect x="379" y="356" width="2" height="15" fill="#000ad2"/>
<rect x="381" y="356" width="1" height="15" fill="#00b4fa"/>
<rect x="382" y="356" width="1" height="15" fill="#14f564"/>
<rect x="383" y="356" width="1" height="15" fill="#00b4fa"/>
<rect x="384" y="356" width="1" height="15" fill="#000ad2"/>
<rect x="385" y="356" width="1" height="15" fill="#00008c"/>
<rect x="386" y="356" width="2" height="15" fill="#000ad2"/>
<rect x="388" y="356" width="1" height="15" fill="#005afa"/>
<rect x="389" y="356" width="3" height="15" fill="#00b4fa"/>
<rect x="392" y="356" width="1" height="15" fill="#aaff00"/>
<rect x="393" y="356" width="2" height="15" fill="#000032"/>
<rect x="395" y="356" width="3" height="15" fill="#00b4fa"/>
<rect x="398" y="356" width="3" height="15" fill="#000ad2"/>
<rect x="401" y="356" width="1" height="15" fill="#005afa"/>
<rect x="402" y="356" width="1" height="15" fill="#000ad2"/>
<rect x="403" y="356" width="3" height="15" fill="#00b4fa"/>
<rect x="406" y="356" width="2" height="15" fill="#000ad2"/>
<rect x="408" y="356" width="2" height="15" fill="#000032"/>
<rect x="410" y="356" width="1" height="15" fill="#aaff00"/>
<rect x="411" y="356" width="4" height="15" fill="#14f564"/>
<rect x="415" y="356" width="3" height="15" fill="#000ad2"/>
<rect x="418" y="356" width="1" height="15" fill="#005afa"/>
<rect x="419" y="356" width="3" height="15" fill="#00b4fa"/>
<rect x="422" y="356" width="3" height="15" fill="#14f564"/>
<rect x="425" y="356" width="2" height="15" fill="#00b4fa"/>
<rect x="427" y="356" width="2" height="15" fill="#000ad2"/>
<rect x="429" y="356" width="1" height="15" fill="#00b4fa"/>
<rect x="430" y="356" width="1" height="15" fill="#14f564"/>
<rect x="431" y="356" width="1" height="15" fill="#aaff00"/>
<rect x="432" y="356" width="1" height="15" fill="#b4963c"/>
<rect x="433" y="356" width="1" height="15" fill="#005afa"/>
<rect x="434" y="356" width="1" height="15" fill="#00b4fa"/>
<rect x="435" y="356" width="1" height="15" fill="#000ad2"/>
<rect x="436" y="356" width="1" height="15" fill="#00b4fa"/>
<rect x="437" y="356" width="1" height="15" fill="#005afa"/>
<rect x="438" y="356" width="1" height="15" fill="#000ad2"/>
<rect x="439" y="356" width="1" height="15" fill="#00b4fa"/>
<rect x="440" y="356" width="1" height="15" fill="#14f564"/>
<rect x="441" y="356" width="1" height="15" fill="#00b4fa"/>
<rect x="442" y="356" width="1" height="15" fill="#000032"/>
<rect x="443" y="356" width="2" height="15" fill="#00b4fa"/>
<rect x="445" y="356" width="1" height="15" fill="#000ad2"/>
<rect x="446" y="356" width="1" height="15" fill="#00008c"/>
<rect x="447" y="356" width="2" height="15" fill="#000ad2"/>
<rect x="449" y="356" width="1" height="15" fill="#00b4fa"/>
<rect x="450" y="356" width="1" height="15" fill="#000032"/>
<rect x="451" y="356" width="1" height="15" fill="#00008c"/>
<rect x="452" y="356" width="1" height="15" fill="#000ad2"/>
<rect x="453" y="356" width="1" height="15" fill="#00b4fa"/>
<rect x="454" y="356" width="1" height="15" fill="#000ad2"/>
<rect x="455" y="356" width="1" height="15" fill="#00b4fa"/>
<rect x="456" y="356" width="3" height="15" fill="#14f564"/>
<rect x="459" y="356" width="2" height="15" fill="#000ad2"/>
<rect x="461" y="356" width="2" height="15" fill="#000032"/>
<rect x="463" y="356" width="2" height="15" fill="#14f564"/>
<rect x="465" y="356" width="1" height="15" fill="#000ad2"/>
<rect x="466" y="356" width="1" height="15" fill="#00b4fa"/>
<rect x="467" y="356" width="1" height="15" fill="#000ad2"/>
<rect x="468" y="356" width="3" height="15" fill="#00b4fa"/>
<rect x="471" y="356" width="1" height="15" fill="#000032"/>
<rect x="472" y="356" width="1" height="15" fill="#000ad2"/>
<rect x="473" y="356" width="1" height="15" fill="#005afa"/>
<rect x="474" y="356" width="1" height="15" fill="#14f564"/>
<rect x="475" y="356" width="1" height="15" fill="#00b4fa"/>
<rect x="476" y="356" width="1" height="15" fill="#14f564"/>
<rect x="477" y="356" width="1" height="15" fill="#b4963c"/>
<rect x="478" y="356" width="1" height="15" fill="#14f564"/>
<rect x="479" y="356" width="1" height="15" fill="#b4963c"/>
<rect x="480" y="356" width="1" height="15" fill="#00b4fa"/>
<rect x="481" y="356" width="2" height="15" fill="#000032"/>
<rect x="483" y="356" width="3" height="15" fill="#14f564"/>
<rect x="486" y="356" width="1" height="15" fill="#00b4fa"/>
<rect x="487" y="356" width="1" height="15" fill="#14f564"/>
<rect x="488" y="356" width="3" height="15" fill="#000ad2"/>
<rect x="491" y="356" width="1" height="15" fill="#005afa"/>
<rect x="492" y="356" width="1" height="15" fill="#000032"/>
<rect x="493" y="356" width="1" height="15" fill="#00b4fa"/>
<rect x="494" y="356" width="1" height="15" fill="#000ad2"/>
<rect x="495" y="356" width="1" height="15" fill="#00008c"/>
<rect x="496" y="356" width="1" height="15" fill="#000032"/>
<rect x="497" y="356" width="2" height="15" fill="#14f564"/>
<rect x="499" y="356" width="1" height="15" fill="#000032"/>
<rect x="500" y="356" width="2" height="15" fill="#14f564"/>
<rect x="502" y="356" width="1" height="15" fill="#aaff00"/>
<rect x="503" y="356" width="2" height="15" fill="#14f564"/>
<rect x="505" y="356" width="2" height="15" fill="#00b4fa"/>
<rect x="507" y="356" width="3" height="15" fill="#14f564"/>
<rect x="510" y="356" width="4" height="15" fill="#000ad2"/>
<rect x="514" y="356" width="1" height="15" fill="#000032"/>
<rect x="515" y="356" width="4" height="15" fill="#00b4fa"/>
<rect x="519" y="356" width="2" height="15" fill="#14f564"/>
<rect x="521" y="356" width="1" height="15" fill="#00b4fa"/>
<rect x="522" y="356" width="1" height="15" fill="#14f564"/>
<rect x="523" y="356" width="1" height="15" fill="#00b4fa"/>
<rect x="524" y="356" width="3" height="15" fill="#000ad2"/>
<rect x="527" y="356" width="2" height="15" fill="#000032"/>
<rect x="529" y="356" width="2" height="15" fill="#00b4fa"/>
<rect x="531" y="356" width="4" height="15" fill="#00008c"/>
<rect x="535" y="356" width="1" height="15" fill="#00b4fa"/>
<rect x="536" y="356" width="1" height="15" fill="#14f564"/>
<rect x="537" y="356" width="4" height="15" fill="#00b4fa"/>
<rect x="541" y="356" width="2" height="15" fill="#000032"/>
<rect x="543" y="356" width="3" height="15" fill="#14f564"/>
<rect x="546" y="356" width="3" height="15" fill="#00b4fa"/>
<rect x="549" y="356" width="3" height="15" fill="#000ad2"/>
<rect x="552" y="356" width="4" height="15" fill="#14f564"/>
<rect x="556" y="356" width="4" height="15" fill="#00b4fa"/>
<rect x="560" y="356" width="3" height="15" fill="#000ad2"/>
<rect x="563" y="356" width="1" height="15" fill="#000032"/>
<rect x="564" y="356" width="2" height="15" fill="#00b4fa"/>
<rect x="566" y="356" width="1" height="15" fill="#aaff00"/>
<rect x="567" y="356" width="1" height="15" fill="#14f564"/>
<rect x="568" y="356" width="1" height="15" fill="#aaff00"/>
<rect x="569" y="356" width="1" height="15" fill="#00b4fa"/>
<rect x="570" y="356" width="1" height="15" fill="#000ad2"/>
<rect x="571" y="356" width="1" height="15" fill="#00008c"/>
<rect x="572" y="356" width="2" height="15" fill="#000ad2"/>
<rect x="574" y="356" width="1" height="15" fill="#00008c"/>
<rect x="575" y="356" width="2" height="15" fill="#14f564"/>
<rect x="577" y="356" width="2" height="15" fill="#000ad2"/>
<rect x="579" y="356" width="1" height="15" fill="#00b4fa"/>
<rect x="580" y="356" width="1" height="15" fill="#14f564"/>
<rect x="581" y="356" width="3" height="15" fill="#00b4fa"/>
<rect x="584" y="356" width="3" height="15" fill="#000ad2"/>
<rect x="587" y="356" width="1" height="15" fill="#005afa"/>
<rect x="588" y="356" width="3" height="15" fill="#14f564"/>
<rect x="591" y="356" width="1" height="15" fill="#b4963c"/>
<rect x="592" y="356" width="2" height="15" fill="#00b4fa"/>
<rect x="594" y="356" width="1" height="15" fill="#005afa"/>
<rect x="595" y="356" width="4" height="15" fill="#00b4fa"/>
<rect x="599" y="356" width="1" height="15" fill="#000032"/>
<rect x="600" y="356" width="3" height="15" fill="#000ad2"/>
<rect x="603" y="356" width="3" height="15" fill="#00b4fa"/>
<rect x="606" y="356" width="2" height="15" fill="#14f564"/>
<rect x="608" y="356" width="1" height="15" fill="#000032"/>
<rect x="609" y="356" width="1" height="15" fill="#b4963c"/>
<rect x="610" y="356" width="1" height="15" fill="#14f564"/>
<rect x="611" y="356" width="3" height="15" fill="#00b4fa"/>
<rect x="614" y="356" width="2" height="15" fill="#000ad2"/>
<rect x="616" y="356" width="1" height="15" fill="#00008c"/>
<rect x="617" y="356" width="2" height="15" fill="#00b4fa"/>
<rect x="619" y="356" width="1" height="15" fill="#00008c"/>
<rect x="620" y="356" width="2" height="15" fill="#000ad2"/>
<rect x="622" y="356" width="1" height="15" fill="#00b4fa"/>
<rect x="623" y="356" width="3" height="15" fill="#000ad2"/>
<rect x="626" y="356" width="1" height="15" fill="#00b4fa"/>
<rect x="627" y="356" width="1" height="15" fill="#14f564"/>
<rect x="628" y="356" width="2" height="15" fill="#000ad2"/>
<rect x="630" y="356" width="1" height="15" fill="#005afa"/>
<rect x="631" y="356" width="2" height="15" fill="#000ad2"/>
<rect x="633" y="356" width="1" height="15" fill="#000032"/>
<rect x="634" y="356" width="1" height="15" fill="#b4963c"/>
<rect x="635" y="356" width="1" height="15" fill="#aaff00"/>
<rect x="636" y="356" width="1" height="15" fill="#00b4fa"/>
<rect x="637" y="356" width="1" height="15" fill="#000ad2"/>
<rect x="638" y="356" width="1" height="15" fill="#00b4fa"/>
<rect x="639" y="356" width="1" height="15" fill="#005afa"/>
<rect x="640" y="356" width="1" height="15" fill="#000ad2"/>
<rect x="641" y="356" width="1" height="15" fill="#00b4fa"/>
<rect x="642" y="356" width="1" height="15" fill="#000ad2"/>
<rect x="643" y="356" width="2" height="15" fill="#000032"/>
<rect x="645" y="356" width="3" height="15" fill="#00b4fa"/>
<rect x="648" y="356" width="3" height="15" fill="#14f564"/>
<rect x="651" y="356" width="1" height="15" fill="#000ad2"/>
<rect x="652" y="356" width="1" height="15" fill="#00b4fa"/>
<rect x="653" y="356" width="1" height="15" fill="#000ad2"/>
<rect x="654" y="356" width="5" height="15" fill="#00b4fa"/>
<rect x="659" y="356" width="1" height="15" fill="#000032"/>
<rect x="660" y="356" width="3" height="15" fill="#14f564"/>
<rect x="663" y="356" width="4" height="15" fill="#000ad2"/>
<rect x="667" y="356" width="1" height="15" fill="#000032"/>
<rect x="668" y="356" width="3" height="15" fill="#14f564"/>
<rect x="671" y="356" width="1" height="15" fill="#00b4fa"/>
<rect x="672" y="356" width="1" height="15" fill="#14f564"/>
<rect x="673" y="356" width="1" height="15" fill="#00b4fa"/>
<rect x="674" y="356" width="1" height="15" fill="#000ad2"/>
<rect x="675" y="356" width="1" height="15" fill="#000032"/>
<rect x="676" y="356" width="1" height="15" fill="#000ad2"/>
<rect x="677" y="356" width="4" height="15" fill="#00b4fa"/>
<rect x="681" y="356" width="1" height="15" fill="#000ad2"/>
<rect x="682" y="356" width="4" height="15" fill="#00b4fa"/>
<rect x="686" y="356" width="3" height="15" fill="#000ad2"/>
<rect x="689" y="356" width="1" height="15" fill="#005afa"/>
<rect x="690" y="356" width="3" height="15" fill="#000ad2"/>
<rect x="79" y="371" width="3" height="16" fill="#0096fa"/>
<rect x="82" y="371" width="1" height="16" fill="#0000be"/>
<rect x="83" y="371" width="1" height="16" fill="#0046f0"/>
<rect x="84" y="371" width="1" height="16" fill="#0000be"/>
<rect x="85" y="371" width="1" height="16" fill="#0046f0"/>
<rect x="86" y="371" width="2" height="16" fill="#00e678"/>
<rect x="88" y="371" width="1" height="16" fill="#000028"/>
<rect x="89" y="371" width="1" height="16" fill="#000078"/>
<rect x="90" y="371" width="2" height="16" fill="#0000be"/>
<rect x="92" y="371" width="1" height="16" fill="#0046f0"/>
<rect x="93" y="371" width="1" height="16" fill="#0000be"/>
<rect x="94" y="371" width="2" height="16" fill="#0096fa"/>
<rect x="96" y="371" width="1" height="16" fill="#0046f0"/>
<rect x="97" y="371" width="1" height="16" fill="#0096fa"/>
<rect x="98" y="371" width="1" height="16" fill="#0000be"/>
<rect x="99" y="371" width="1" height="16" fill="#969650"/>
<rect x="100" y="371" width="2" height="16" fill="#000028"/>
<rect x="102" y="371" width="1" height="16" fill="#0096fa"/>
<rect x="103" y="371" width="1" height="16" fill="#00e678"/>
<rect x="104" y="371" width="1" height="16" fill="#0096fa"/>
<rect x="105" y="371" width="1" height="16" fill="#000078"/>
<rect x="106" y="371" width="2" height="16" fill="#0000be"/>
<rect x="108" y="371" width="1" height="16" fill="#0046f0"/>
<rect x="109" y="371" width="1" height="16" fill="#0000be"/>
<rect x="110" y="371" width="1" height="16" fill="#0096fa"/>
<rect x="111" y="371" width="1" height="16" fill="#0000be"/>
<rect x="112" y="371" width="1" height="16" fill="#0046f0"/>
<rect x="113" y="371" width="1" height="16" fill="#aaff14"/>
<rect x="114" y="371" width="3" height="16" fill="#0096fa"/>
<rect x="117" y="371" width="1" height="16" fill="#000078"/>
<rect x="118" y="371" width="2" height="16" fill="#0000be"/>
<rect x="120" y="371" width="1" height="16" fill="#0096fa"/>
<rect x="121" y="371" width="1" height="16" fill="#0046f0"/>
<rect x="122" y="371" width="1" height="16" fill="#0096fa"/>
<rect x="123" y="371" width="1" height="16" fill="#0000be"/>
<rect x="124" y="371" width="1" height="16" fill="#0096fa"/>
<rect x="125" y="371" width="2" height="16" fill="#000028"/>
<rect x="127" y="371" width="1" height="16" fill="#00e678"/>
<rect x="128" y="371" width="1" height="16" fill="#aaff14"/>
<rect x="129" y="371" width="1" height="16" fill="#00e678"/>
<rect x="130" y="371" width="2" height="16" fill="#0096fa"/>
<rect x="132" y="371" width="3" height="16" fill="#0000be"/>
<rect x="135" y="371" width="1" height="16" fill="#0046f0"/>
<rect x="136" y="371" width="1" height="16" fill="#0000be"/>
<rect x="137" y="371" width="3" height="16" fill="#0096fa"/>
<rect x="140" y="371" width="1" height="16" fill="#000028"/>
<rect x="141" y="371" width="1" height="16" fill="#000078"/>
<rect x="142" y="371" width="4" height="16" fill="#00e678"/>
<rect x="146" y="371" width="1" height="16" fill="#000078"/>
<rect x="147" y="371" width="3" height="16" fill="#0096fa"/>
<rect x="150" y="371" width="2" height="16" fill="#aaff14"/>
<rect x="152" y="371" width="1" height="16" fill="#000028"/>
<rect x="153" y="371" width="1" height="16" fill="#000078"/>
<rect x="154" y="371" width="4" height="16" fill="#00e678"/>
<rect x="158" y="371" width="2" height="16" fill="#0000be"/>
<rect x="160" y="371" width="1" height="16" fill="#000078"/>
<rect x="161" y="371" width="2" height="16" fill="#0096fa"/>
<rect x="163" y="371" width="3" height="16" fill="#0000be"/>
<rect x="166" y="371" width="2" height="16" fill="#0096fa"/>
<rect x="168" y="371" width="1" height="16" fill="#00e678"/>
<rect x="169" y="371" width="1" height="16" fill="#aaff14"/>
<rect x="170" y="371" width="1" height="16" fill="#000078"/>
<rect x="171" y="371" width="2" height="16" fill="#0000be"/>
<rect x="173" y="371" width="1" height="16" fill="#0096fa"/>
<rect x="174" y="371" width="1" height="16" fill="#969650"/>
<rect x="175" y="371" width="2" height="16" fill="#0000be"/>
<rect x="177" y="371" width="2" height="16" fill="#0096fa"/>
<rect x="179" y="371" width="1" height="16" fill="#000028"/>
<rect x="180" y="371" width="2" height="16" fill="#00e678"/>
<rect x="182" y="371" width="4" height="16" fill="#0096fa"/>
<rect x="186" y="371" width="2" height="16" fill="#0000be"/>
<rect x="188" y="371" width="1" height="16" fill="#969650"/>
<rect x="189" y="371" width="1" height="16" fill="#000078"/>
<rect x="190" y="371" width="1" height="16" fill="#0096fa"/>
<rect x="191" y="371" width="1" height="16" fill="#00e678"/>
<rect x="192" y="371" width="2" height="16" fill="#0096fa"/>
<rect x="194" y="371" width="3" height="16" fill="#0000be"/>
<rect x="197" y="371" width="2" height="16" fill="#0096fa"/>
<rect x="199" y="371" width="1" height="16" fill="#000078"/>
<rect x="200" y="371" width="1" height="16" fill="#0000be"/>
<rect x="201" y="371" width="1" height="16" fill="#0096fa"/>
<rect x="202" y="371" width="2" height="16" fill="#0000be"/>
<rect x="204" y="371" width="2" height="16" fill="#0096fa"/>
<rect x="206" y="371" width="2" height="16" fill="#0000be"/>
<rect x="208" y="371" width="2" height="16" fill="#0096fa"/>
<rect x="210" y="371" width="3" height="16" fill="#0000be"/>
<rect x="213" y="371" width="1" height="16" fill="#0046f0"/>
<rect x="214" y="371" width="2" height="16" fill="#0000be"/>
<rect x="216" y="371" width="3" height="16" fill="#0096fa"/>
<rect x="219" y="371" width="2" height="16" fill="#0000be"/>
<rect x="221" y="371" width="1" height="16" fill="#969650"/>
<rect x="222" y="371" width="1" height="16" fill="#00e678"/>
<rect x="223" y="371" width="1" height="16" fill="#aaff14"/>
<rect x="224" y="371" width="1" height="16" fill="#00e678"/>
<rect x="225" y="371" width="3" height="16" fill="#0096fa"/>
<rect x="228" y="371" width="1" height="16" fill="#0046f0"/>
<rect x="229" y="371" width="1" height="16" fill="#0000be"/>
<rect x="230" y="371" width="1" height="16" fill="#0096fa"/>
<rect x="231" y="371" width="3" height="16" fill="#00e678"/>
<rect x="234" y="371" width="3" height="16" fill="#0096fa"/>
<rect x="237" y="371" width="3" height="16" fill="#00e678"/>
<rect x="240" y="371" width="1" height="16" fill="#0096fa"/>
<rect x="241" y="371" width="1" height="16" fill="#00e678"/>
<rect x="242" y="371" width="1" height="16" fill="#0096fa"/>
<rect x="243" y="371" width="3" height="16" fill="#0000be"/>
<rect x="246" y="371" width="2" height="16" fill="#0096fa"/>
<rect x="248" y="371" width="3" height="16" fill="#0000be"/>
<rect x="251" y="371" width="1" height="16" fill="#0096fa"/>
<rect x="252" y="371" width="3" height="16" fill="#00e678"/>
<rect x="255" y="371" width="1" height="16" fill="#aaff14"/>
<rect x="256" y="371" width="1" height="16" fill="#969650"/>
<rect x="257" y="371" width="1" height="16" fill="#00e678"/>
<rect x="258" y="371" width="1" height="16" fill="#000078"/>
<rect x="259" y="371" width="1" height="16" fill="#0096fa"/>
<rect x="260" y="371" width="1" height="16" fill="#000078"/>
<rect x="261" y="371" width="2" height="16" fill="#0000be"/>
<rect x="263" y="371" width="3" height="16" fill="#0096fa"/>
<rect x="266" y="371" width="2" height="16" fill="#0000be"/>
<rect x="268" y="371" width="2" height="16" fill="#0096fa"/>
<rect x="270" y="371" width="1" height="16" fill="#00e678"/>
<rect x="271" y="371" width="1" height="16" fill="#0096fa"/>
<rect x="272" y="371" width="1" height="16" fill="#00e678"/>
<rect x="273" y="371" width="1" height="16" fill="#969650"/>
<rect x="274" y="371" width="1" height="16" fill="#00e678"/>
<rect x="275" y="371" width="1" height="16" fill="#000028"/>
<rect x="276" y="371" width="2" height="16" fill="#0096fa"/>
<rect x="278" y="371" width="4" height="16" fill="#0000be"/>
<rect x="282" y="371" width="3" height="16" fill="#0096fa"/>
<rect x="285" y="371" width="1" height="16" fill="#000078"/>
<rect x="286" y="371" width="1" height="16" fill="#000028"/>
<rect x="287" y="371" width="1" height="16" fill="#00e678"/>
<rect x="288" y="371" width="1" height="16" fill="#aaff14"/>
<rect x="289" y="371" width="2" height="16" fill="#00e678"/>
<rect x="291" y="371" width="1" height="16" fill="#0096fa"/>
<rect x="292" y="371" width="1" height="16" fill="#00e678"/>
<rect x="293" y="371" width="2" height="16" fill="#0096fa"/>
<rect x="295" y="371" width="1" height="16" fill="#000078"/>
<rect x="296" y="371" width="1" height="16" fill="#0000be"/>
<rect x="297" y="371" width="1" height="16" fill="#000078"/>
<rect x="298" y="371" width="1" height="16" fill="#0000be"/>
<rect x="299" y="371" width="3" height="16" fill="#0096fa"/>
<rect x="302" y="371" width="1" height="16" fill="#aaff14"/>
<rect x="303" y="371" width="1" height="16" fill="#00e678"/>
<rect x="304" y="371" width="1" height="16" fill="#000078"/>
<rect x="305" y="371" width="2" height="16" fill="#0000be"/>
<rect x="307" y="371" width="2" height="16" fill="#0096fa"/>
<rect x="309" y="371" width="4" height="16" fill="#0000be"/>
<rect x="313" y="371" width="1" height="16" fill="#0046f0"/>
<rect x="314" y="371" width="5" height="16" fill="#00e678"/>
<rect x="319" y="371" width="1" height="16" fill="#0096fa"/>
<rect x="320" y="371" width="3" height="16" fill="#0000be"/>
<rect x="323" y="371" width="1" height="16" fill="#0046f0"/>
<rect x="324" y="371" width="1" height="16" fill="#00e678"/>
<rect x="325" y="371" width="4" height="16" fill="#0096fa"/>
<rect x="329" y="371" width="3" height="16" fill="#0000be"/>
<rect x="332" y="371" width="1" height="16" fill="#0046f0"/>
<rect x="333" y="371" width="1" height="16" fill="#00e678"/>
<rect x="334" y="371" width="1" height="16" fill="#000028"/>
<rect x="335" y="371" width="1" height="16" fill="#000078"/>
<rect x="336" y="371" width="2" height="16" fill="#aaff14"/>
<rect x="338" y="371" width="1" height="16" fill="#969650"/>
<rect x="339" y="371" width="3" height="16" fill="#0096fa"/>
<rect x="342" y="371" width="1" height="16" fill="#0046f0"/>
<rect x="343" y="371" width="1" height="16" fill="#0000be"/>
<rect x="344" y="371" width="3" height="16" fill="#0096fa"/>
<rect x="347" y="371" width="2" height="16" fill="#0000be"/>
<rect x="349" y="371" width="1" height="16" fill="#0096fa"/>
<rect x="350" y="371" width="1" height="16" fill="#00e678"/>
<rect x="351" y="371" width="2" height="16" fill="#000028"/>
<rect x="353" y="371" width="6" height="16" fill="#00e678"/>
<rect x="359" y="371" width="2" height="16" fill="#0000be"/>
<rect x="361" y="371" width="2" height="16" fill="#000028"/>
<rect x="363" y="371" width="2" height="16" fill="#0096fa"/>
<rect x="365" y="371" width="3" height="16" fill="#0000be"/>
<rect x="368" y="371" width="2" height="16" fill="#0096fa"/>
<rect x="370" y="371" width="1" height="16" fill="#000078"/>
<rect x="371" y="371" width="1" height="16" fill="#000028"/>
<rect x="372" y="371" width="1" height="16" fill="#0096fa"/>
<rect x="373" y="371" width="1" height="16" fill="#00e678"/>
<rect x="374" y="371" width="1" height="16" fill="#0096fa"/>
<rect x="375" y="371" width="3" height="16" fill="#0000be"/>
<rect x="378" y="371" width="1" height="16" fill="#0046f0"/>
<rect x="379" y="371" width="2" height="16" fill="#0000be"/>
<rect x="381" y="371" width="1" height="16" fill="#0096fa"/>
<rect x="382" y="371" width="1" height="16" fill="#00e678"/>
<rect x="383" y="371" width="1" height="16" fill="#0096fa"/>
<rect x="384" y="371" width="1" height="16" fill="#0000be"/>
<rect x="385" y="371" width="1" height="16" fill="#000078"/>
<rect x="386" y="371" width="2" height="16" fill="#0000be"/>
<rect x="388" y="371" width="1" height="16" fill="#0046f0"/>
<rect x="389" y="371" width="3" height="16" fill="#0096fa"/>
<rect x="392" y="371" width="1" height="16" fill="#aaff14"/>
<rect x="393" y="371" width="2" height="16" fill="#000028"/>
<rect x="395" y="371" width="3" height="16" fill="#0096fa"/>
<rect x="398" y="371" width="3" height="16" fill="#0000be"/>
<rect x="401" y="371" width="1" height="16" fill="#0046f0"/>
<rect x="402" y="371" width="1" height="16" fill="#0000be"/>
<rect x="403" y="371" width="3" height="16" fill="#0096fa"/>
<rect x="406" y="371" width="2" height="16" fill="#0000be"/>
<rect x="408" y="371" width="2" height="16" fill="#000028"/>
<rect x="410" y="371" width="1" height="16" fill="#aaff14"/>
<rect x="411" y="371" width="4" height="16" fill="#00e678"/>
<rect x="415" y="371" width="3" height="16" fill="#0000be"/>
<rect x="418" y="371" width="1" height="16" fill="#0046f0"/>
<rect x="419" y="371" width="3" height="16" fill="#0096fa"/>
<rect x="422" y="371" width="3" height="16" fill="#00e678"/>
<rect x="425" y="371" width="2" height="16" fill="#0096fa"/>
<rect x="427" y="371" width="2" height="16" fill="#0000be"/>
<rect x="429" y="371" width="1" height="16" fill="#0096fa"/>
<rect x="430" y="371" width="1" height="16" fill="#00e678"/>
<rect x="431" y="371" width="1" height="16" fill="#aaff14"/>
<rect x="432" y="371" width="1" height="16" fill="#969650"/>
<rect x="433" y="371" width="1" height="16" fill="#0046f0"/>
<rect x="434" y="371" width="1" height="16" fill="#0096fa"/>
<rect x="435" y="371" width="1" height="16" fill="#0000be"/>
<rect x="436" y="371" width="1" height="16" fill="#0096fa"/>
<rect x="437" y="371" width="1" height="16" fill="#0046f0"/>
<rect x="438" y="371" width="1" height="16" fill="#0000be"/>
<rect x="439" y="371" width="1" height="16" fill="#0096fa"/>
<rect x="440" y="371" width="1" height="16" fill="#00e678"/>
<rect x="441" y="371" width="1" height="16" fill="#0096fa"/>
<rect x="442" y="371" width="1" height="16" fill="#000028"/>
<rect x="443" y="371" width="2" height="16" fill="#0096fa"/>
<rect x="445" y="371" width="1" height="16" fill="#0000be"/>
<rect x="446" y="371" width="1" height="16" fill="#000078"/>
<rect x="447" y="371" width="2" height="16" fill="#0000be"/>
<rect x="449" y="371" width="1" height="16" fill="#0096fa"/>
<rect x="450" y="371" width="1" height="16" fill="#000028"/>
<rect x="451" y="371" width="1" height="16" fill="#000078"/>
<rect x="452" y="371" width="1" height="16" fill="#0000be"/>
<rect x="453" y="371" width="1" height="16" fill="#0096fa"/>
<rect x="454" y="371" width="1" height="16" fill="#0000be"/>
<rect x="455" y="371" width="1" height="16" fill="#0096fa"/>
<rect x="456" y="371" width="3" height="16" fill="#00e678"/>
<rect x="459" y="371" width="2" height="16" fill="#0000be"/>
<rect x="461" y="371" width="2" height="16" fill="#000028"/>
<rect x="463" y="371" width="2" height="16" fill="#00e678"/>
<rect x="465" y="371" width="1" height="16" fill="#0000be"/>
<rect x="466" y="371" width="1" height="16" fill="#0096fa"/>
<rect x="467" y="371" width="1" height="16" fill="#0000be"/>
<rect x="468" y="371" width="3" height="16" fill="#0096fa"/>
<rect x="471" y="371" width="1" height="16" fill="#000028"/>
<rect x="472" y="371" width="1" height="16" fill="#0000be"/>
<rect x="473" y="371" width="1" height="16" fill="#0046f0"/>
<rect x="474" y="371" width="1" height="16" fill="#00e678"/>
<rect x="475" y="371" width="1" height="16" fill="#0096fa"/>
<rect x="476" y="371" width="1" height="16" fill="#00e678"/>
<rect x="477" y="371" width="1" height="16" fill="#969650"/>
<rect x="478" y="371" width="1" height="16" fill="#00e678"/>
<rect x="479" y="371" width="1" height="16" fill="#969650"/>
<rect x="480" y="371" width="1" height="16" fill="#0096fa"/>
<rect x="481" y="371" width="2" height="16" fill="#000028"/>
<rect x="483" y="371" width="3" height="16" fill="#00e678"/>
<rect x="486" y="371" width="1" height="16" fill="#0096fa"/>
<rect x="487" y="371" width="1" height="16" fill="#00e678"/>
<rect x="488" y="371" width="3" height="16" fill="#0000be"/>
<rect x="491" y="371" width="1" height="16" fill="#0046f0"/>
<rect x="492" y="371" width="1" height="16" fill="#000028"/>
<rect x="493" y="371" width="1" height="16" fill="#0096fa"/>
<rect x="494" y="371" width="1" height="16" fill="#0000be"/>
<rect x="495" y="371" width="1" height="16" fill="#000078"/>
<rect x="496" y="371" width="1" height="16" fill="#000028"/>
<rect x="497" y="371" width="2" height="16" fill="#00e678"/>
<rect x="499" y="371" width="1" height="16" fill="#000028"/>
<rect x="500" y="371" width="2" height="16" fill="#00e678"/>
<rect x="502" y="371" width="1" height="16" fill="#aaff14"/>
<rect x="503" y="371" width="2" height="16" fill="#00e678"/>
<rect x="505" y="371" width="2" height="16" fill="#0096fa"/>
<rect x="507" y="371" width="3" height="16" fill="#00e678"/>
<rect x="510" y="371" width="4" height="16" fill="#0000be"/>
<rect x="514" y="371" width="1" height="16" fill="#000028"/>
<rect x="515" y="371" width="4" height="16" fill="#0096fa"/>
<rect x="519" y="371" width="2" height="16" fill="#00e678"/>
<rect x="521" y="371" width="1" height="16" fill="#0096fa"/>
<rect x="522" y="371" width="1" height="16" fill="#00e678"/>
<rect x="523" y="371" width="1" height="16" fill="#0096fa"/>
<rect x="524" y="371" width="3" height="16" fill="#0000be"/>
<rect x="527" y="371" width="2" height="16" fill="#000028"/>
<rect x="529" y="371" width="2" height="16" fill="#0096fa"/>
<rect x="531" y="371" width="4" height="16" fill="#000078"/>
<rect x="535" y="371" width="1" height="16" fill="#0096fa"/>
<rect x="536" y="371" width="1" height="16" fill="#00e678"/>
<rect x="537" y="371" width="4" height="16" fill="#0096fa"/>
<rect x="541" y="371" width="2" height="16" fill="#000028"/>
<rect x="543" y="371" width="3" height="16" fill="#00e678"/>
<rect x="546" y="371" width="3" height="16" fill="#0096fa"/>
<rect x="549" y="371" width="3" height="16" fill="#0000be"/>
<rect x="552" y="371" width="4" height="16" fill="#00e678"/>
<rect x="556" y="371" width="4" height="16" fill="#0096fa"/>
<rect x="560" y="371" width="3" height="16" fill="#0000be"/>
<rect x="563" y="371" width="1" height="16" fill="#000028"/>
<rect x="564" y="371" width="2" height="16" fill="#0096fa"/>
<rect x="566" y="371" width="1" height="16" fill="#aaff14"/>
<rect x="567" y="371" width="1" height="16" fill="#00e678"/>
<rect x="568" y="371" width="1" height="16" fill="#aaff14"/>
<rect x="569" y="371" width="1" height="16" fill="#0096fa"/>
<rect x="570" y="371" width="1" height="16" fill="#0000be"/>
<rect x="571" y="371" width="1" height="16" fill="#000078"/>
<rect x="572" y="371" width="2" height="16" fill="#0000be"/>
<rect x="574" y="371" width="1" height="16" fill="#000078"/>
<rect x="575" y="371" width="2" height="16" fill="#00e678"/>
<rect x="577" y="371" width="2" height="16" fill="#0000be"/>
<rect x="579" y="371" width="1" height="16" fill="#0096fa"/>
<rect x="580" y="371" width="1" height="16" fill="#00e678"/>
<rect x="581" y="371" width="3" height="16" fill="#0096fa"/>
<rect x="584" y="371" width="3" height="16" fill="#0000be"/>
<rect x="587" y="371" width="1" height="16" fill="#0046f0"/>
<rect x="588" y="371" width="3" height="16" fill="#00e678"/>
<rect x="591" y="371" width="1" height="16" fill="#969650"/>
<rect x="592" y="371" width="2" height="16" fill="#0096fa"/>
<rect x="594" y="371" width="1" height="16" fill="#0046f0"/>
<rect x="595" y="371" width="4" height="16" fill="#0096fa"/>
<rect x="599" y="371" width="1" height="16" fill="#000028"/>
<rect x="600" y="371" width="3" height="16" fill="#0000be"/>
<rect x="603" y="371" width="3" height="16" fill="#0096fa"/>
<rect x="606" y="371" width="2" height="16" fill="#00e678"/>
<rect x="608" y="371" width="1" height="16" fill="#000028"/>
<rect x="609" y="371" width="1" height="16" fill="#969650"/>
<rect x="610" y="371" width="1" height="16" fill="#00e678"/>
<rect x="611" y="371" width="3" height="16" fill="#0096fa"/>
<rect x="614" y="371" width="2" height="16" fill="#0000be"/>
<rect x="616" y="371" width="1" height="16" fill="#000078"/>
<rect x="617" y="371" width="2" height="16" fill="#0096fa"/>
<rect x="619" y="371" width="1" height="16" fill="#000078"/>
<rect x="620" y="371" width="2" height="16" fill="#0000be"/>
<rect x="622" y="371" width="1" height="16" fill="#0096fa"/>
<rect x="623" y="371" width="3" height="16" fill="#0000be"/>
<rect x="626" y="371" width="1" height="16" fill="#0096fa"/>
<rect x="627" y="371" width="1" height="16" fill="#00e678"/>
<rect x="628" y="371" width="2" height="16" fill="#0000be"/>
<rect x="630" y="371" width="1" height="16" fill="#0046f0"/>
<rect x="631" y="371" width="2" height="16" fill="#0000be"/>
<rect x="633" y="371" width="1" height="16" fill="#000028"/>
<rect x="634" y="371" width="1" height="16" fill="#969650"/>
<rect x="635" y="371" width="1" height="16" fill="#aaff14"/>
<rect x="636" y="371" width="1" height="16" fill="#0096fa"/>
<rect x="637" y="371" width="1" height="16" fill="#0000be"/>
<rect x="638" y="371" width="1" height="16" fill="#0096fa"/>
<rect x="639" y="371" width="1" height="16" fill="#0046f0"/>
<rect x="640" y="371" width="1" height="16" fill="#0000be"/>
<rect x="641" y="371" width="1" height="16" fill="#0096fa"/>
<rect x="642" y="371" width="1" height="16" fill="#0000be"/>
<rect x="643" y="371" width="2" height="16" fill="#000028"/>
<rect x="645" y="371" width="3" height="16" fill="#0096fa"/>
<rect x="648" y="371" width="3" height="16" fill="#00e678"/>
<rect x="651" y="371" width="1" height="16" fill="#0000be"/>
<rect x="652" y="371" width="1" height="16" fill="#0096fa"/>
<rect x="653" y="371" width="1" height="16" fill="#0000be"/>
<rect x="654" y="371" width="5" height="16" fill="#0096fa"/>
<rect x="659" y="371" width="1" height="16" fill="#000028"/>
<rect x="660" y="371" width="3" height="16" fill="#00e678"/>
<rect x="663" y="371" width="4" height="16" fill="#0000be"/>
<rect x="667" y="371" width="1" height="16" fill="#000028"/>
<rect x="668" y="371" width="3" height="16" fill="#00e678"/>
<rect x="671" y="371" width="1" height="16" fill="#0096fa"/>
<rect x="672" y="371" width="1" height="16" fill="#00e678"/>
<rect x="673" y="371" width="1" height="16" fill="#0096fa"/>
<rect x="674" y="371" width="1" height="16" fill="#0000be"/>
<rect x="675" y="371" width="1" height="16" fill="#000028"/>
<rect x="676" y="371" width="1" height="16" fill="#0000be"/>
<rect x="677" y="371" width="4" height="16" fill="#0096fa"/>
<rect x="681" y="371" width="1" height="16" fill="#0000be"/>
<rect x="682" y="371" width="4" height="16" fill="#0096fa"/>
<rect x="686" y="371" width="3" height="16" fill="#0000be"/>
<rect x="689" y="371" width="1" height="16" fill="#0046f0"/>
<rect x="690" y="371" width="3" height="16" fill="#0000be"/>
<clipPath id="cB"><rect x="82" y="332" width="4" height="55"/><rect x="88" y="332" width="6" height="55"/><rect x="96" y="332" width="1" height="55"/><rect x="98" y="332" width="1" height="55"/><rect x="100" y="332" width="2" height="55"/><rect x="105" y="332" width="5" height="55"/><rect x="111" y="332" width="2" height="55"/><rect x="117" y="332" width="3" height="55"/><rect x="121" y="332" width="1" height="55"/><rect x="123" y="332" width="1" height="55"/><rect x="125" y="332" width="2" height="55"/><rect x="132" y="332" width="5" height="55"/><rect x="140" y="332" width="2" height="55"/><rect x="146" y="332" width="1" height="55"/><rect x="152" y="332" width="2" height="55"/><rect x="158" y="332" width="3" height="55"/><rect x="163" y="332" width="3" height="55"/><rect x="170" y="332" width="3" height="55"/><rect x="175" y="332" width="2" height="55"/><rect x="179" y="332" width="1" height="55"/><rect x="186" y="332" width="2" height="55"/><rect x="189" y="332" width="1" height="55"/><rect x="194" y="332" width="3" height="55"/><rect x="199" y="332" width="2" height="55"/><rect x="202" y="332" width="2" height="55"/><rect x="206" y="332" width="2" height="55"/><rect x="210" y="332" width="6" height="55"/><rect x="219" y="332" width="2" height="55"/><rect x="228" y="332" width="2" height="55"/><rect x="243" y="332" width="3" height="55"/><rect x="248" y="332" width="3" height="55"/><rect x="258" y="332" width="1" height="55"/><rect x="260" y="332" width="3" height="55"/><rect x="266" y="332" width="2" height="55"/><rect x="275" y="332" width="1" height="55"/><rect x="278" y="332" width="4" height="55"/><rect x="285" y="332" width="2" height="55"/><rect x="295" y="332" width="4" height="55"/><rect x="304" y="332" width="3" height="55"/><rect x="309" y="332" width="5" height="55"/><rect x="320" y="332" width="4" height="55"/><rect x="329" y="332" width="4" height="55"/><rect x="334" y="332" width="2" height="55"/><rect x="342" y="332" width="2" height="55"/><rect x="347" y="332" width="2" height="55"/><rect x="351" y="332" width="2" height="55"/><rect x="359" y="332" width="4" height="55"/><rect x="365" y="332" width="3" height="55"/><rect x="370" y="332" width="2" height="55"/><rect x="375" y="332" width="6" height="55"/><rect x="384" y="332" width="5" height="55"/><rect x="393" y="332" width="2" height="55"/><rect x="398" y="332" width="5" height="55"/><rect x="406" y="332" width="4" height="55"/><rect x="415" y="332" width="4" height="55"/><rect x="427" y="332" width="2" height="55"/><rect x="433" y="332" width="1" height="55"/><rect x="435" y="332" width="1" height="55"/><rect x="437" y="332" width="2" height="55"/><rect x="442" y="332" width="1" height="55"/><rect x="445" y="332" width="4" height="55"/><rect x="450" y="332" width="3" height="55"/><rect x="454" y="332" width="1" height="55"/><rect x="459" y="332" width="4" height="55"/><rect x="465" y="332" width="1" height="55"/><rect x="467" y="332" width="1" height="55"/><rect x="471" y="332" width="3" height="55"/><rect x="481" y="332" width="2" height="55"/><rect x="488" y="332" width="5" height="55"/><rect x="494" y="332" width="3" height="55"/><rect x="499" y="332" width="1" height="55"/><rect x="510" y="332" width="5" height="55"/><rect x="524" y="332" width="5" height="55"/><rect x="531" y="332" width="4" height="55"/><rect x="541" y="332" width="2" height="55"/><rect x="549" y="332" width="3" height="55"/><rect x="560" y="332" width="4" height="55"/><rect x="570" y="332" width="5" height="55"/><rect x="577" y="332" width="2" height="55"/><rect x="584" y="332" width="4" height="55"/><rect x="594" y="332" width="1" height="55"/><rect x="599" y="332" width="4" height="55"/><rect x="608" y="332" width="1" height="55"/><rect x="614" y="332" width="3" height="55"/><rect x="619" y="332" width="3" height="55"/><rect x="623" y="332" width="3" height="55"/><rect x="628" y="332" width="6" height="55"/><rect x="637" y="332" width="1" height="55"/><rect x="639" y="332" width="2" height="55"/><rect x="642" y="332" width="3" height="55"/><rect x="651" y="332" width="1" height="55"/><rect x="653" y="332" width="1" height="55"/><rect x="659" y="332" width="1" height="55"/><rect x="663" y="332" width="5" height="55"/><rect x="674" y="332" width="3" height="55"/><rect x="681" y="332" width="1" height="55"/><rect x="686" y="332" width="7" height="55"/></clipPath>
<clipPath id="cC"><rect x="79" y="332" width="3" height="55"/><rect x="86" y="332" width="2" height="55"/><rect x="94" y="332" width="2" height="55"/><rect x="97" y="332" width="1" height="55"/><rect x="99" y="332" width="1" height="55"/><rect x="102" y="332" width="3" height="55"/><rect x="110" y="332" width="1" height="55"/><rect x="113" y="332" width="4" height="55"/><rect x="120" y="332" width="1" height="55"/><rect x="122" y="332" width="1" height="55"/><rect x="124" y="332" width="1" height="55"/><rect x="127" y="332" width="5" height="55"/><rect x="137" y="332" width="3" height="55"/><rect x="142" y="332" width="4" height="55"/><rect x="147" y="332" width="5" height="55"/><rect x="154" y="332" width="4" height="55"/><rect x="161" y="332" width="2" height="55"/><rect x="166" y="332" width="4" height="55"/><rect x="173" y="332" width="2" height="55"/><rect x="177" y="332" width="2" height="55"/><rect x="180" y="332" width="6" height="55"/><rect x="188" y="332" width="1" height="55"/><rect x="190" y="332" width="4" height="55"/><rect x="197" y="332" width="2" height="55"/><rect x="201" y="332" width="1" height="55"/><rect x="204" y="332" width="2" height="55"/><rect x="208" y="332" width="2" height="55"/><rect x="216" y="332" width="3" height="55"/><rect x="221" y="332" width="7" height="55"/><rect x="230" y="332" width="13" height="55"/><rect x="246" y="332" width="2" height="55"/><rect x="251" y="332" width="7" height="55"/><rect x="259" y="332" width="1" height="55"/><rect x="263" y="332" width="3" height="55"/><rect x="268" y="332" width="7" height="55"/><rect x="276" y="332" width="2" height="55"/><rect x="282" y="332" width="3" height="55"/><rect x="287" y="332" width="8" height="55"/><rect x="299" y="332" width="5" height="55"/><rect x="307" y="332" width="2" height="55"/><rect x="314" y="332" width="6" height="55"/><rect x="324" y="332" width="5" height="55"/><rect x="333" y="332" width="1" height="55"/><rect x="336" y="332" width="6" height="55"/><rect x="344" y="332" width="3" height="55"/><rect x="349" y="332" width="2" height="55"/><rect x="353" y="332" width="6" height="55"/><rect x="363" y="332" width="2" height="55"/><rect x="368" y="332" width="2" height="55"/><rect x="372" y="332" width="3" height="55"/><rect x="381" y="332" width="3" height="55"/><rect x="389" y="332" width="4" height="55"/><rect x="395" y="332" width="3" height="55"/><rect x="403" y="332" width="3" height="55"/><rect x="410" y="332" width="5" height="55"/><rect x="419" y="332" width="8" height="55"/><rect x="429" y="332" width="4" height="55"/><rect x="434" y="332" width="1" height="55"/><rect x="436" y="332" width="1" height="55"/><rect x="439" y="332" width="3" height="55"/><rect x="443" y="332" width="2" height="55"/><rect x="449" y="332" width="1" height="55"/><rect x="453" y="332" width="1" height="55"/><rect x="455" y="332" width="4" height="55"/><rect x="463" y="332" width="2" height="55"/><rect x="466" y="332" width="1" height="55"/><rect x="468" y="332" width="3" height="55"/><rect x="474" y="332" width="7" height="55"/><rect x="483" y="332" width="5" height="55"/><rect x="493" y="332" width="1" height="55"/><rect x="497" y="332" width="2" height="55"/><rect x="500" y="332" width="10" height="55"/><rect x="515" y="332" width="9" height="55"/><rect x="529" y="332" width="2" height="55"/><rect x="535" y="332" width="6" height="55"/><rect x="543" y="332" width="6" height="55"/><rect x="552" y="332" width="8" height="55"/><rect x="564" y="332" width="6" height="55"/><rect x="575" y="332" width="2" height="55"/><rect x="579" y="332" width="5" height="55"/><rect x="588" y="332" width="6" height="55"/><rect x="595" y="332" width="4" height="55"/><rect x="603" y="332" width="5" height="55"/><rect x="609" y="332" width="5" height="55"/><rect x="617" y="332" width="2" height="55"/><rect x="622" y="332" width="1" height="55"/><rect x="626" y="332" width="2" height="55"/><rect x="634" y="332" width="3" height="55"/><rect x="638" y="332" width="1" height="55"/><rect x="641" y="332" width="1" height="55"/><rect x="645" y="332" width="6" height="55"/><rect x="652" y="332" width="1" height="55"/><rect x="654" y="332" width="5" height="55"/><rect x="660" y="332" width="3" height="55"/><rect x="668" y="332" width="6" height="55"/><rect x="677" y="332" width="4" height="55"/><rect x="682" y="332" width="4" height="55"/></clipPath>
<rect x="79" y="332" width="614" height="55" fill="url(#pc)" clip-path="url(#cB)"/>
<rect x="79" y="332" width="614" height="55" fill="url(#pk)" clip-path="url(#cB)"/>
<rect x="79" y="332" width="614" height="55" fill="url(#pb2)" clip-path="url(#cC)"/>
<rect x="79" y="332" width="614" height="55" fill="url(#pg)" clip-path="url(#cC)"/>
<rect x="79" y="363" width="614" height="1" fill="#30e0e0" fill-opacity="0.55"/>
<rect x="79" y="371" width="614" height="1" fill="#30e0e0" fill-opacity="0.5"/>
<rect x="79" y="387" width="3" height="29" fill="#006eeb"/>
<rect x="82" y="387" width="1" height="29" fill="#0000af"/>
<rect x="83" y="387" width="1" height="29" fill="#0028d2"/>
<rect x="84" y="387" width="1" height="29" fill="#0000af"/>
<rect x="85" y="387" width="1" height="29" fill="#0028d2"/>
<rect x="86" y="387" width="2" height="29" fill="#0096d2"/>
<rect x="88" y="387" width="1" height="29" fill="#00001e"/>
<rect x="89" y="387" width="1" height="29" fill="#00005a"/>
<rect x="90" y="387" width="2" height="29" fill="#0000af"/>
<rect x="92" y="387" width="1" height="29" fill="#0028d2"/>
<rect x="93" y="387" width="1" height="29" fill="#0000af"/>
<rect x="94" y="387" width="2" height="29" fill="#006eeb"/>
<rect x="96" y="387" width="1" height="29" fill="#0028d2"/>
<rect x="97" y="387" width="1" height="29" fill="#006eeb"/>
<rect x="98" y="387" width="1" height="29" fill="#0000af"/>
<rect x="99" y="387" width="1" height="29" fill="#785078"/>
<rect x="100" y="387" width="2" height="29" fill="#00001e"/>
<rect x="102" y="387" width="1" height="29" fill="#006eeb"/>
<rect x="103" y="387" width="1" height="29" fill="#0096d2"/>
<rect x="104" y="387" width="1" height="29" fill="#006eeb"/>
<rect x="105" y="387" width="1" height="29" fill="#00005a"/>
<rect x="106" y="387" width="2" height="29" fill="#0000af"/>
<rect x="108" y="387" width="1" height="29" fill="#0028d2"/>
<rect x="109" y="387" width="1" height="29" fill="#0000af"/>
<rect x="110" y="387" width="1" height="29" fill="#006eeb"/>
<rect x="111" y="387" width="1" height="29" fill="#0000af"/>
<rect x="112" y="387" width="1" height="29" fill="#0028d2"/>
<rect x="113" y="387" width="1" height="29" fill="#64c850"/>
<rect x="114" y="387" width="3" height="29" fill="#006eeb"/>
<rect x="117" y="387" width="1" height="29" fill="#00005a"/>
<rect x="118" y="387" width="2" height="29" fill="#0000af"/>
<rect x="120" y="387" width="1" height="29" fill="#006eeb"/>
<rect x="121" y="387" width="1" height="29" fill="#0028d2"/>
<rect x="122" y="387" width="1" height="29" fill="#006eeb"/>
<rect x="123" y="387" width="1" height="29" fill="#0000af"/>
<rect x="124" y="387" width="1" height="29" fill="#006eeb"/>
<rect x="125" y="387" width="2" height="29" fill="#00001e"/>
<rect x="127" y="387" width="1" height="29" fill="#0096d2"/>
<rect x="128" y="387" width="1" height="29" fill="#64c850"/>
<rect x="129" y="387" width="1" height="29" fill="#0096d2"/>
<rect x="130" y="387" width="2" height="29" fill="#006eeb"/>
<rect x="132" y="387" width="3" height="29" fill="#0000af"/>
<rect x="135" y="387" width="1" height="29" fill="#0028d2"/>
<rect x="136" y="387" width="1" height="29" fill="#0000af"/>
<rect x="137" y="387" width="3" height="29" fill="#006eeb"/>
<rect x="140" y="387" width="1" height="29" fill="#00001e"/>
<rect x="141" y="387" width="1" height="29" fill="#00005a"/>
<rect x="142" y="387" width="4" height="29" fill="#0096d2"/>
<rect x="146" y="387" width="1" height="29" fill="#00005a"/>
<rect x="147" y="387" width="3" height="29" fill="#006eeb"/>
<rect x="150" y="387" width="2" height="29" fill="#64c850"/>
<rect x="152" y="387" width="1" height="29" fill="#00001e"/>
<rect x="153" y="387" width="1" height="29" fill="#00005a"/>
<rect x="154" y="387" width="4" height="29" fill="#0096d2"/>
<rect x="158" y="387" width="2" height="29" fill="#0000af"/>
<rect x="160" y="387" width="1" height="29" fill="#00005a"/>
<rect x="161" y="387" width="2" height="29" fill="#006eeb"/>
<rect x="163" y="387" width="3" height="29" fill="#0000af"/>
<rect x="166" y="387" width="2" height="29" fill="#006eeb"/>
<rect x="168" y="387" width="1" height="29" fill="#0096d2"/>
<rect x="169" y="387" width="1" height="29" fill="#64c850"/>
<rect x="170" y="387" width="1" height="29" fill="#00005a"/>
<rect x="171" y="387" width="2" height="29" fill="#0000af"/>
<rect x="173" y="387" width="1" height="29" fill="#006eeb"/>
<rect x="174" y="387" width="1" height="29" fill="#785078"/>
<rect x="175" y="387" width="2" height="29" fill="#0000af"/>
<rect x="177" y="387" width="2" height="29" fill="#006eeb"/>
<rect x="179" y="387" width="1" height="29" fill="#00001e"/>
<rect x="180" y="387" width="2" height="29" fill="#0096d2"/>
<rect x="182" y="387" width="4" height="29" fill="#006eeb"/>
<rect x="186" y="387" width="2" height="29" fill="#0000af"/>
<rect x="188" y="387" width="1" height="29" fill="#785078"/>
<rect x="189" y="387" width="1" height="29" fill="#00005a"/>
<rect x="190" y="387" width="1" height="29" fill="#006eeb"/>
<rect x="191" y="387" width="1" height="29" fill="#0096d2"/>
<rect x="192" y="387" width="2" height="29" fill="#006eeb"/>
<rect x="194" y="387" width="3" height="29" fill="#0000af"/>
<rect x="197" y="387" width="2" height="29" fill="#006eeb"/>
<rect x="199" y="387" width="1" height="29" fill="#00005a"/>
<rect x="200" y="387" width="1" height="29" fill="#0000af"/>
<rect x="201" y="387" width="1" height="29" fill="#006eeb"/>
<rect x="202" y="387" width="2" height="29" fill="#0000af"/>
<rect x="204" y="387" width="2" height="29" fill="#006eeb"/>
<rect x="206" y="387" width="2" height="29" fill="#0000af"/>
<rect x="208" y="387" width="2" height="29" fill="#006eeb"/>
<rect x="210" y="387" width="3" height="29" fill="#0000af"/>
<rect x="213" y="387" width="1" height="29" fill="#0028d2"/>
<rect x="214" y="387" width="2" height="29" fill="#0000af"/>
<rect x="216" y="387" width="3" height="29" fill="#006eeb"/>
<rect x="219" y="387" width="2" height="29" fill="#0000af"/>
<rect x="221" y="387" width="1" height="29" fill="#785078"/>
<rect x="222" y="387" width="1" height="29" fill="#0096d2"/>
<rect x="223" y="387" width="1" height="29" fill="#64c850"/>
<rect x="224" y="387" width="1" height="29" fill="#0096d2"/>
<rect x="225" y="387" width="3" height="29" fill="#006eeb"/>
<rect x="228" y="387" width="1" height="29" fill="#0028d2"/>
<rect x="229" y="387" width="1" height="29" fill="#0000af"/>
<rect x="230" y="387" width="1" height="29" fill="#006eeb"/>
<rect x="231" y="387" width="3" height="29" fill="#0096d2"/>
<rect x="234" y="387" width="3" height="29" fill="#006eeb"/>
<rect x="237" y="387" width="3" height="29" fill="#0096d2"/>
<rect x="240" y="387" width="1" height="29" fill="#006eeb"/>
<rect x="241" y="387" width="1" height="29" fill="#0096d2"/>
<rect x="242" y="387" width="1" height="29" fill="#006eeb"/>
<rect x="243" y="387" width="3" height="29" fill="#0000af"/>
<rect x="246" y="387" width="2" height="29" fill="#006eeb"/>
<rect x="248" y="387" width="3" height="29" fill="#0000af"/>
<rect x="251" y="387" width="1" height="29" fill="#006eeb"/>
<rect x="252" y="387" width="3" height="29" fill="#0096d2"/>
<rect x="255" y="387" width="1" height="29" fill="#64c850"/>
<rect x="256" y="387" width="1" height="29" fill="#785078"/>
<rect x="257" y="387" width="1" height="29" fill="#0096d2"/>
<rect x="258" y="387" width="1" height="29" fill="#00005a"/>
<rect x="259" y="387" width="1" height="29" fill="#006eeb"/>
<rect x="260" y="387" width="1" height="29" fill="#00005a"/>
<rect x="261" y="387" width="2" height="29" fill="#0000af"/>
<rect x="263" y="387" width="3" height="29" fill="#006eeb"/>
<rect x="266" y="387" width="2" height="29" fill="#0000af"/>
<rect x="268" y="387" width="2" height="29" fill="#006eeb"/>
<rect x="270" y="387" width="1" height="29" fill="#0096d2"/>
<rect x="271" y="387" width="1" height="29" fill="#006eeb"/>
<rect x="272" y="387" width="1" height="29" fill="#0096d2"/>
<rect x="273" y="387" width="1" height="29" fill="#785078"/>
<rect x="274" y="387" width="1" height="29" fill="#0096d2"/>
<rect x="275" y="387" width="1" height="29" fill="#00001e"/>
<rect x="276" y="387" width="2" height="29" fill="#006eeb"/>
<rect x="278" y="387" width="4" height="29" fill="#0000af"/>
<rect x="282" y="387" width="3" height="29" fill="#006eeb"/>
<rect x="285" y="387" width="1" height="29" fill="#00005a"/>
<rect x="286" y="387" width="1" height="29" fill="#00001e"/>
<rect x="287" y="387" width="1" height="29" fill="#0096d2"/>
<rect x="288" y="387" width="1" height="29" fill="#64c850"/>
<rect x="289" y="387" width="2" height="29" fill="#0096d2"/>
<rect x="291" y="387" width="1" height="29" fill="#006eeb"/>
<rect x="292" y="387" width="1" height="29" fill="#0096d2"/>
<rect x="293" y="387" width="2" height="29" fill="#006eeb"/>
<rect x="295" y="387" width="1" height="29" fill="#00005a"/>
<rect x="296" y="387" width="1" height="29" fill="#0000af"/>
<rect x="297" y="387" width="1" height="29" fill="#00005a"/>
<rect x="298" y="387" width="1" height="29" fill="#0000af"/>
<rect x="299" y="387" width="3" height="29" fill="#006eeb"/>
<rect x="302" y="387" width="1" height="29" fill="#64c850"/>
<rect x="303" y="387" width="1" height="29" fill="#0096d2"/>
<rect x="304" y="387" width="1" height="29" fill="#00005a"/>
<rect x="305" y="387" width="2" height="29" fill="#0000af"/>
<rect x="307" y="387" width="2" height="29" fill="#006eeb"/>
<rect x="309" y="387" width="4" height="29" fill="#0000af"/>
<rect x="313" y="387" width="1" height="29" fill="#0028d2"/>
<rect x="314" y="387" width="5" height="29" fill="#0096d2"/>
<rect x="319" y="387" width="1" height="29" fill="#006eeb"/>
<rect x="320" y="387" width="3" height="29" fill="#0000af"/>
<rect x="323" y="387" width="1" height="29" fill="#0028d2"/>
<rect x="324" y="387" width="1" height="29" fill="#0096d2"/>
<rect x="325" y="387" width="4" height="29" fill="#006eeb"/>
<rect x="329" y="387" width="3" height="29" fill="#0000af"/>
<rect x="332" y="387" width="1" height="29" fill="#0028d2"/>
<rect x="333" y="387" width="1" height="29" fill="#0096d2"/>
<rect x="334" y="387" width="1" height="29" fill="#00001e"/>
<rect x="335" y="387" width="1" height="29" fill="#00005a"/>
<rect x="336" y="387" width="2" height="29" fill="#64c850"/>
<rect x="338" y="387" width="1" height="29" fill="#785078"/>
<rect x="339" y="387" width="3" height="29" fill="#006eeb"/>
<rect x="342" y="387" width="1" height="29" fill="#0028d2"/>
<rect x="343" y="387" width="1" height="29" fill="#0000af"/>
<rect x="344" y="387" width="3" height="29" fill="#006eeb"/>
<rect x="347" y="387" width="2" height="29" fill="#0000af"/>
<rect x="349" y="387" width="1" height="29" fill="#006eeb"/>
<rect x="350" y="387" width="1" height="29" fill="#0096d2"/>
<rect x="351" y="387" width="2" height="29" fill="#00001e"/>
<rect x="353" y="387" width="6" height="29" fill="#0096d2"/>
<rect x="359" y="387" width="2" height="29" fill="#0000af"/>
<rect x="361" y="387" width="2" height="29" fill="#00001e"/>
<rect x="363" y="387" width="2" height="29" fill="#006eeb"/>
<rect x="365" y="387" width="3" height="29" fill="#0000af"/>
<rect x="368" y="387" width="2" height="29" fill="#006eeb"/>
<rect x="370" y="387" width="1" height="29" fill="#00005a"/>
<rect x="371" y="387" width="1" height="29" fill="#00001e"/>
<rect x="372" y="387" width="1" height="29" fill="#006eeb"/>
<rect x="373" y="387" width="1" height="29" fill="#0096d2"/>
<rect x="374" y="387" width="1" height="29" fill="#006eeb"/>
<rect x="375" y="387" width="3" height="29" fill="#0000af"/>
<rect x="378" y="387" width="1" height="29" fill="#0028d2"/>
<rect x="379" y="387" width="2" height="29" fill="#0000af"/>
<rect x="381" y="387" width="1" height="29" fill="#006eeb"/>
<rect x="382" y="387" width="1" height="29" fill="#0096d2"/>
<rect x="383" y="387" width="1" height="29" fill="#006eeb"/>
<rect x="384" y="387" width="1" height="29" fill="#0000af"/>
<rect x="385" y="387" width="1" height="29" fill="#00005a"/>
<rect x="386" y="387" width="2" height="29" fill="#0000af"/>
<rect x="388" y="387" width="1" height="29" fill="#0028d2"/>
<rect x="389" y="387" width="3" height="29" fill="#006eeb"/>
<rect x="392" y="387" width="1" height="29" fill="#64c850"/>
<rect x="393" y="387" width="2" height="29" fill="#00001e"/>
<rect x="395" y="387" width="3" height="29" fill="#006eeb"/>
<rect x="398" y="387" width="3" height="29" fill="#0000af"/>
<rect x="401" y="387" width="1" height="29" fill="#0028d2"/>
<rect x="402" y="387" width="1" height="29" fill="#0000af"/>
<rect x="403" y="387" width="3" height="29" fill="#006eeb"/>
<rect x="406" y="387" width="2" height="29" fill="#0000af"/>
<rect x="408" y="387" width="2" height="29" fill="#00001e"/>
<rect x="410" y="387" width="1" height="29" fill="#64c850"/>
<rect x="411" y="387" width="4" height="29" fill="#0096d2"/>
<rect x="415" y="387" width="3" height="29" fill="#0000af"/>
<rect x="418" y="387" width="1" height="29" fill="#0028d2"/>
<rect x="419" y="387" width="3" height="29" fill="#006eeb"/>
<rect x="422" y="387" width="3" height="29" fill="#0096d2"/>
<rect x="425" y="387" width="2" height="29" fill="#006eeb"/>
<rect x="427" y="387" width="2" height="29" fill="#0000af"/>
<rect x="429" y="387" width="1" height="29" fill="#006eeb"/>
<rect x="430" y="387" width="1" height="29" fill="#0096d2"/>
<rect x="431" y="387" width="1" height="29" fill="#64c850"/>
<rect x="432" y="387" width="1" height="29" fill="#785078"/>
<rect x="433" y="387" width="1" height="29" fill="#0028d2"/>
<rect x="434" y="387" width="1" height="29" fill="#006eeb"/>
<rect x="435" y="387" width="1" height="29" fill="#0000af"/>
<rect x="436" y="387" width="1" height="29" fill="#006eeb"/>
<rect x="437" y="387" width="1" height="29" fill="#0028d2"/>
<rect x="438" y="387" width="1" height="29" fill="#0000af"/>
<rect x="439" y="387" width="1" height="29" fill="#006eeb"/>
<rect x="440" y="387" width="1" height="29" fill="#0096d2"/>
<rect x="441" y="387" width="1" height="29" fill="#006eeb"/>
<rect x="442" y="387" width="1" height="29" fill="#00001e"/>
<rect x="443" y="387" width="2" height="29" fill="#006eeb"/>
<rect x="445" y="387" width="1" height="29" fill="#0000af"/>
<rect x="446" y="387" width="1" height="29" fill="#00005a"/>
<rect x="447" y="387" width="2" height="29" fill="#0000af"/>
<rect x="449" y="387" width="1" height="29" fill="#006eeb"/>
<rect x="450" y="387" width="1" height="29" fill="#00001e"/>
<rect x="451" y="387" width="1" height="29" fill="#00005a"/>
<rect x="452" y="387" width="1" height="29" fill="#0000af"/>
<rect x="453" y="387" width="1" height="29" fill="#006eeb"/>
<rect x="454" y="387" width="1" height="29" fill="#0000af"/>
<rect x="455" y="387" width="1" height="29" fill="#006eeb"/>
<rect x="456" y="387" width="3" height="29" fill="#0096d2"/>
<rect x="459" y="387" width="2" height="29" fill="#0000af"/>
<rect x="461" y="387" width="2" height="29" fill="#00001e"/>
<rect x="463" y="387" width="2" height="29" fill="#0096d2"/>
<rect x="465" y="387" width="1" height="29" fill="#0000af"/>
<rect x="466" y="387" width="1" height="29" fill="#006eeb"/>
<rect x="467" y="387" width="1" height="29" fill="#0000af"/>
<rect x="468" y="387" width="3" height="29" fill="#006eeb"/>
<rect x="471" y="387" width="1" height="29" fill="#00001e"/>
<rect x="472" y="387" width="1" height="29" fill="#0000af"/>
<rect x="473" y="387" width="1" height="29" fill="#0028d2"/>
<rect x="474" y="387" width="1" height="29" fill="#0096d2"/>
<rect x="475" y="387" width="1" height="29" fill="#006eeb"/>
<rect x="476" y="387" width="1" height="29" fill="#0096d2"/>
<rect x="477" y="387" width="1" height="29" fill="#785078"/>
<rect x="478" y="387" width="1" height="29" fill="#0096d2"/>
<rect x="479" y="387" width="1" height="29" fill="#785078"/>
<rect x="480" y="387" width="1" height="29" fill="#006eeb"/>
<rect x="481" y="387" width="2" height="29" fill="#00001e"/>
<rect x="483" y="387" width="3" height="29" fill="#0096d2"/>
<rect x="486" y="387" width="1" height="29" fill="#006eeb"/>
<rect x="487" y="387" width="1" height="29" fill="#0096d2"/>
<rect x="488" y="387" width="3" height="29" fill="#0000af"/>
<rect x="491" y="387" width="1" height="29" fill="#0028d2"/>
<rect x="492" y="387" width="1" height="29" fill="#00001e"/>
<rect x="493" y="387" width="1" height="29" fill="#006eeb"/>
<rect x="494" y="387" width="1" height="29" fill="#0000af"/>
<rect x="495" y="387" width="1" height="29" fill="#00005a"/>
<rect x="496" y="387" width="1" height="29" fill="#00001e"/>
<rect x="497" y="387" width="2" height="29" fill="#0096d2"/>
<rect x="499" y="387" width="1" height="29" fill="#00001e"/>
<rect x="500" y="387" width="2" height="29" fill="#0096d2"/>
<rect x="502" y="387" width="1" height="29" fill="#64c850"/>
<rect x="503" y="387" width="2" height="29" fill="#0096d2"/>
<rect x="505" y="387" width="2" height="29" fill="#006eeb"/>
<rect x="507" y="387" width="3" height="29" fill="#0096d2"/>
<rect x="510" y="387" width="4" height="29" fill="#0000af"/>
<rect x="514" y="387" width="1" height="29" fill="#00001e"/>
<rect x="515" y="387" width="4" height="29" fill="#006eeb"/>
<rect x="519" y="387" width="2" height="29" fill="#0096d2"/>
<rect x="521" y="387" width="1" height="29" fill="#006eeb"/>
<rect x="522" y="387" width="1" height="29" fill="#0096d2"/>
<rect x="523" y="387" width="1" height="29" fill="#006eeb"/>
<rect x="524" y="387" width="3" height="29" fill="#0000af"/>
<rect x="527" y="387" width="2" height="29" fill="#00001e"/>
<rect x="529" y="387" width="2" height="29" fill="#006eeb"/>
<rect x="531" y="387" width="4" height="29" fill="#00005a"/>
<rect x="535" y="387" width="1" height="29" fill="#006eeb"/>
<rect x="536" y="387" width="1" height="29" fill="#0096d2"/>
<rect x="537" y="387" width="4" height="29" fill="#006eeb"/>
<rect x="541" y="387" width="2" height="29" fill="#00001e"/>
<rect x="543" y="387" width="3" height="29" fill="#0096d2"/>
<rect x="546" y="387" width="3" height="29" fill="#006eeb"/>
<rect x="549" y="387" width="3" height="29" fill="#0000af"/>
<rect x="552" y="387" width="4" height="29" fill="#0096d2"/>
<rect x="556" y="387" width="4" height="29" fill="#006eeb"/>
<rect x="560" y="387" width="3" height="29" fill="#0000af"/>
<rect x="563" y="387" width="1" height="29" fill="#00001e"/>
<rect x="564" y="387" width="2" height="29" fill="#006eeb"/>
<rect x="566" y="387" width="1" height="29" fill="#64c850"/>
<rect x="567" y="387" width="1" height="29" fill="#0096d2"/>
<rect x="568" y="387" width="1" height="29" fill="#64c850"/>
<rect x="569" y="387" width="1" height="29" fill="#006eeb"/>
<rect x="570" y="387" width="1" height="29" fill="#0000af"/>
<rect x="571" y="387" width="1" height="29" fill="#00005a"/>
<rect x="572" y="387" width="2" height="29" fill="#0000af"/>
<rect x="574" y="387" width="1" height="29" fill="#00005a"/>
<rect x="575" y="387" width="2" height="29" fill="#0096d2"/>
<rect x="577" y="387" width="2" height="29" fill="#0000af"/>
<rect x="579" y="387" width="1" height="29" fill="#006eeb"/>
<rect x="580" y="387" width="1" height="29" fill="#0096d2"/>
<rect x="581" y="387" width="3" height="29" fill="#006eeb"/>
<rect x="584" y="387" width="3" height="29" fill="#0000af"/>
<rect x="587" y="387" width="1" height="29" fill="#0028d2"/>
<rect x="588" y="387" width="3" height="29" fill="#0096d2"/>
<rect x="591" y="387" width="1" height="29" fill="#785078"/>
<rect x="592" y="387" width="2" height="29" fill="#006eeb"/>
<rect x="594" y="387" width="1" height="29" fill="#0028d2"/>
<rect x="595" y="387" width="4" height="29" fill="#006eeb"/>
<rect x="599" y="387" width="1" height="29" fill="#00001e"/>
<rect x="600" y="387" width="3" height="29" fill="#0000af"/>
<rect x="603" y="387" width="3" height="29" fill="#006eeb"/>
<rect x="606" y="387" width="2" height="29" fill="#0096d2"/>
<rect x="608" y="387" width="1" height="29" fill="#00001e"/>
<rect x="609" y="387" width="1" height="29" fill="#785078"/>
<rect x="610" y="387" width="1" height="29" fill="#0096d2"/>
<rect x="611" y="387" width="3" height="29" fill="#006eeb"/>
<rect x="614" y="387" width="2" height="29" fill="#0000af"/>
<rect x="616" y="387" width="1" height="29" fill="#00005a"/>
<rect x="617" y="387" width="2" height="29" fill="#006eeb"/>
<rect x="619" y="387" width="1" height="29" fill="#00005a"/>
<rect x="620" y="387" width="2" height="29" fill="#0000af"/>
<rect x="622" y="387" width="1" height="29" fill="#006eeb"/>
<rect x="623" y="387" width="3" height="29" fill="#0000af"/>
<rect x="626" y="387" width="1" height="29" fill="#006eeb"/>
<rect x="627" y="387" width="1" height="29" fill="#0096d2"/>
<rect x="628" y="387" width="2" height="29" fill="#0000af"/>
<rect x="630" y="387" width="1" height="29" fill="#0028d2"/>
<rect x="631" y="387" width="2" height="29" fill="#0000af"/>
<rect x="633" y="387" width="1" height="29" fill="#00001e"/>
<rect x="634" y="387" width="1" height="29" fill="#785078"/>
<rect x="635" y="387" width="1" height="29" fill="#64c850"/>
<rect x="636" y="387" width="1" height="29" fill="#006eeb"/>
<rect x="637" y="387" width="1" height="29" fill="#0000af"/>
<rect x="638" y="387" width="1" height="29" fill="#006eeb"/>
<rect x="639" y="387" width="1" height="29" fill="#0028d2"/>
<rect x="640" y="387" width="1" height="29" fill="#0000af"/>
<rect x="641" y="387" width="1" height="29" fill="#006eeb"/>
<rect x="642" y="387" width="1" height="29" fill="#0000af"/>
<rect x="643" y="387" width="2" height="29" fill="#00001e"/>
<rect x="645" y="387" width="3" height="29" fill="#006eeb"/>
<rect x="648" y="387" width="3" height="29" fill="#0096d2"/>
<rect x="651" y="387" width="1" height="29" fill="#0000af"/>
<rect x="652" y="387" width="1" height="29" fill="#006eeb"/>
<rect x="653" y="387" width="1" height="29" fill="#0000af"/>
<rect x="654" y="387" width="5" height="29" fill="#006eeb"/>
<rect x="659" y="387" width="1" height="29" fill="#00001e"/>
<rect x="660" y="387" width="3" height="29" fill="#0096d2"/>
<rect x="663" y="387" width="4" height="29" fill="#0000af"/>
<rect x="667" y="387" width="1" height="29" fill="#00001e"/>
<rect x="668" y="387" width="3" height="29" fill="#0096d2"/>
<rect x="671" y="387" width="1" height="29" fill="#006eeb"/>
<rect x="672" y="387" width="1" height="29" fill="#0096d2"/>
<rect x="673" y="387" width="1" height="29" fill="#006eeb"/>
<rect x="674" y="387" width="1" height="29" fill="#0000af"/>
<rect x="675" y="387" width="1" height="29" fill="#00001e"/>
<rect x="676" y="387" width="1" height="29" fill="#0000af"/>
<rect x="677" y="387" width="4" height="29" fill="#006eeb"/>
<rect x="681" y="387" width="1" height="29" fill="#0000af"/>
<rect x="682" y="387" width="4" height="29" fill="#006eeb"/>
<rect x="686" y="387" width="3" height="29" fill="#0000af"/>
<rect x="689" y="387" width="1" height="29" fill="#0028d2"/>
<rect x="690" y="387" width="3" height="29" fill="#0000af"/>
<rect x="79" y="416" width="3" height="72" fill="#001996"/>
<rect x="82" y="416" width="1" height="72" fill="#000069"/>
<rect x="83" y="416" width="1" height="72" fill="#000a82"/>
<rect x="84" y="416" width="1" height="72" fill="#000069"/>
<rect x="85" y="416" width="1" height="72" fill="#000a82"/>
<rect x="86" y="416" width="2" height="72" fill="#0023a0"/>
<rect x="88" y="416" width="1" height="72" fill="#000023"/>
<rect x="89" y="416" width="1" height="72" fill="#000046"/>
<rect x="90" y="416" width="2" height="72" fill="#000069"/>
<rect x="92" y="416" width="1" height="72" fill="#000a82"/>
<rect x="93" y="416" width="1" height="72" fill="#000069"/>
<rect x="94" y="416" width="2" height="72" fill="#001996"/>
<rect x="96" y="416" width="1" height="72" fill="#000a82"/>
<rect x="97" y="416" width="1" height="72" fill="#001996"/>
<rect x="98" y="416" width="1" height="72" fill="#000069"/>
<rect x="99" y="416" width="1" height="72" fill="#00006e"/>
<rect x="100" y="416" width="2" height="72" fill="#000023"/>
<rect x="102" y="416" width="1" height="72" fill="#001996"/>
<rect x="103" y="416" width="1" height="72" fill="#0023a0"/>
<rect x="104" y="416" width="1" height="72" fill="#001996"/>
<rect x="105" y="416" width="1" height="72" fill="#000046"/>
<rect x="106" y="416" width="2" height="72" fill="#000069"/>
<rect x="108" y="416" width="1" height="72" fill="#000a82"/>
<rect x="109" y="416" width="1" height="72" fill="#000069"/>
<rect x="110" y="416" width="1" height="72" fill="#001996"/>
<rect x="111" y="416" width="1" height="72" fill="#000069"/>
<rect x="112" y="416" width="1" height="72" fill="#000a82"/>
<rect x="113" y="416" width="1" height="72" fill="#0023a0"/>
<rect x="114" y="416" width="3" height="72" fill="#001996"/>
<rect x="117" y="416" width="1" height="72" fill="#000046"/>
<rect x="118" y="416" width="2" height="72" fill="#000069"/>
<rect x="120" y="416" width="1" height="72" fill="#001996"/>
<rect x="121" y="416" width="1" height="72" fill="#000a82"/>
<rect x="122" y="416" width="1" height="72" fill="#001996"/>
<rect x="123" y="416" width="1" height="72" fill="#000069"/>
<rect x="124" y="416" width="1" height="72" fill="#001996"/>
<rect x="125" y="416" width="2" height="72" fill="#000023"/>
<rect x="127" y="416" width="3" height="72" fill="#0023a0"/>
<rect x="130" y="416" width="2" height="72" fill="#001996"/>
<rect x="132" y="416" width="3" height="72" fill="#000069"/>
<rect x="135" y="416" width="1" height="72" fill="#000a82"/>
<rect x="136" y="416" width="1" height="72" fill="#000069"/>
<rect x="137" y="416" width="3" height="72" fill="#001996"/>
<rect x="140" y="416" width="1" height="72" fill="#000023"/>
<rect x="141" y="416" width="1" height="72" fill="#000046"/>
<rect x="142" y="416" width="4" height="72" fill="#0023a0"/>
<rect x="146" y="416" width="1" height="72" fill="#000046"/>
<rect x="147" y="416" width="3" height="72" fill="#001996"/>
<rect x="150" y="416" width="2" height="72" fill="#0023a0"/>
<rect x="152" y="416" width="1" height="72" fill="#000023"/>
<rect x="153" y="416" width="1" height="72" fill="#000046"/>
<rect x="154" y="416" width="4" height="72" fill="#0023a0"/>
<rect x="158" y="416" width="2" height="72" fill="#000069"/>
<rect x="160" y="416" width="1" height="72" fill="#000046"/>
<rect x="161" y="416" width="2" height="72" fill="#001996"/>
<rect x="163" y="416" width="3" height="72" fill="#000069"/>
<rect x="166" y="416" width="2" height="72" fill="#001996"/>
<rect x="168" y="416" width="2" height="72" fill="#0023a0"/>
<rect x="170" y="416" width="1" height="72" fill="#000046"/>
<rect x="171" y="416" width="2" height="72" fill="#000069"/>
<rect x="173" y="416" width="1" height="72" fill="#001996"/>
<rect x="174" y="416" width="1" height="72" fill="#00006e"/>
<rect x="175" y="416" width="2" height="72" fill="#000069"/>
<rect x="177" y="416" width="2" height="72" fill="#001996"/>
<rect x="179" y="416" width="1" height="72" fill="#000023"/>
<rect x="180" y="416" width="2" height="72" fill="#0023a0"/>
<rect x="182" y="416" width="4" height="72" fill="#001996"/>
<rect x="186" y="416" width="2" height="72" fill="#000069"/>
<rect x="188" y="416" width="1" height="72" fill="#00006e"/>
<rect x="189" y="416" width="1" height="72" fill="#000046"/>
<rect x="190" y="416" width="1" height="72" fill="#001996"/>
<rect x="191" y="416" width="1" height="72" fill="#0023a0"/>
<rect x="192" y="416" width="2" height="72" fill="#001996"/>
<rect x="194" y="416" width="3" height="72" fill="#000069"/>
<rect x="197" y="416" width="2" height="72" fill="#001996"/>
<rect x="199" y="416" width="1" height="72" fill="#000046"/>
<rect x="200" y="416" width="1" height="72" fill="#000069"/>
<rect x="201" y="416" width="1" height="72" fill="#001996"/>
<rect x="202" y="416" width="2" height="72" fill="#000069"/>
<rect x="204" y="416" width="2" height="72" fill="#001996"/>
<rect x="206" y="416" width="2" height="72" fill="#000069"/>
<rect x="208" y="416" width="2" height="72" fill="#001996"/>
<rect x="210" y="416" width="3" height="72" fill="#000069"/>
<rect x="213" y="416" width="1" height="72" fill="#000a82"/>
<rect x="214" y="416" width="2" height="72" fill="#000069"/>
<rect x="216" y="416" width="3" height="72" fill="#001996"/>
<rect x="219" y="416" width="2" height="72" fill="#000069"/>
<rect x="221" y="416" width="1" height="72" fill="#00006e"/>
<rect x="222" y="416" width="3" height="72" fill="#0023a0"/>
<rect x="225" y="416" width="3" height="72" fill="#001996"/>
<rect x="228" y="416" width="1" height="72" fill="#000a82"/>
<rect x="229" y="416" width="1" height="72" fill="#000069"/>
<rect x="230" y="416" width="1" height="72" fill="#001996"/>
<rect x="231" y="416" width="3" height="72" fill="#0023a0"/>
<rect x="234" y="416" width="3" height="72" fill="#001996"/>
<rect x="237" y="416" width="3" height="72" fill="#0023a0"/>
<rect x="240" y="416" width="1" height="72" fill="#001996"/>
<rect x="241" y="416" width="1" height="72" fill="#0023a0"/>
<rect x="242" y="416" width="1" height="72" fill="#001996"/>
<rect x="243" y="416" width="3" height="72" fill="#000069"/>
<rect x="246" y="416" width="2" height="72" fill="#001996"/>
<rect x="248" y="416" width="3" height="72" fill="#000069"/>
<rect x="251" y="416" width="1" height="72" fill="#001996"/>
<rect x="252" y="416" width="4" height="72" fill="#0023a0"/>
<rect x="256" y="416" width="1" height="72" fill="#00006e"/>
<rect x="257" y="416" width="1" height="72" fill="#0023a0"/>
<rect x="258" y="416" width="1" height="72" fill="#000046"/>
<rect x="259" y="416" width="1" height="72" fill="#001996"/>
<rect x="260" y="416" width="1" height="72" fill="#000046"/>
<rect x="261" y="416" width="2" height="72" fill="#000069"/>
<rect x="263" y="416" width="3" height="72" fill="#001996"/>
<rect x="266" y="416" width="2" height="72" fill="#000069"/>
<rect x="268" y="416" width="2" height="72" fill="#001996"/>
<rect x="270" y="416" width="1" height="72" fill="#0023a0"/>
<rect x="271" y="416" width="1" height="72" fill="#001996"/>
<rect x="272" y="416" width="1" height="72" fill="#0023a0"/>
<rect x="273" y="416" width="1" height="72" fill="#00006e"/>
<rect x="274" y="416" width="1" height="72" fill="#0023a0"/>
<rect x="275" y="416" width="1" height="72" fill="#000023"/>
<rect x="276" y="416" width="2" height="72" fill="#001996"/>
<rect x="278" y="416" width="4" height="72" fill="#000069"/>
<rect x="282" y="416" width="3" height="72" fill="#001996"/>
<rect x="285" y="416" width="1" height="72" fill="#000046"/>
<rect x="286" y="416" width="1" height="72" fill="#000023"/>
<rect x="287" y="416" width="4" height="72" fill="#0023a0"/>
<rect x="291" y="416" width="1" height="72" fill="#001996"/>
<rect x="292" y="416" width="1" height="72" fill="#0023a0"/>
<rect x="293" y="416" width="2" height="72" fill="#001996"/>
<rect x="295" y="416" width="1" height="72" fill="#000046"/>
<rect x="296" y="416" width="1" height="72" fill="#000069"/>
<rect x="297" y="416" width="1" height="72" fill="#000046"/>
<rect x="298" y="416" width="1" height="72" fill="#000069"/>
<rect x="299" y="416" width="3" height="72" fill="#001996"/>
<rect x="302" y="416" width="2" height="72" fill="#0023a0"/>
<rect x="304" y="416" width="1" height="72" fill="#000046"/>
<rect x="305" y="416" width="2" height="72" fill="#000069"/>
<rect x="307" y="416" width="2" height="72" fill="#001996"/>
<rect x="309" y="416" width="4" height="72" fill="#000069"/>
<rect x="313" y="416" width="1" height="72" fill="#000a82"/>
<rect x="314" y="416" width="5" height="72" fill="#0023a0"/>
<rect x="319" y="416" width="1" height="72" fill="#001996"/>
<rect x="320" y="416" width="3" height="72" fill="#000069"/>
<rect x="323" y="416" width="1" height="72" fill="#000a82"/>
<rect x="324" y="416" width="1" height="72" fill="#0023a0"/>
<rect x="325" y="416" width="4" height="72" fill="#001996"/>
<rect x="329" y="416" width="3" height="72" fill="#000069"/>
<rect x="332" y="416" width="1" height="72" fill="#000a82"/>
<rect x="333" y="416" width="1" height="72" fill="#0023a0"/>
<rect x="334" y="416" width="1" height="72" fill="#000023"/>
<rect x="335" y="416" width="1" height="72" fill="#000046"/>
<rect x="336" y="416" width="2" height="72" fill="#0023a0"/>
<rect x="338" y="416" width="1" height="72" fill="#00006e"/>
<rect x="339" y="416" width="3" height="72" fill="#001996"/>
<rect x="342" y="416" width="1" height="72" fill="#000a82"/>
<rect x="343" y="416" width="1" height="72" fill="#000069"/>
<rect x="344" y="416" width="3" height="72" fill="#001996"/>
<rect x="347" y="416" width="2" height="72" fill="#000069"/>
<rect x="349" y="416" width="1" height="72" fill="#001996"/>
<rect x="350" y="416" width="1" height="72" fill="#0023a0"/>
<rect x="351" y="416" width="2" height="72" fill="#000023"/>
<rect x="353" y="416" width="6" height="72" fill="#0023a0"/>
<rect x="359" y="416" width="2" height="72" fill="#000069"/>
<rect x="361" y="416" width="2" height="72" fill="#000023"/>
<rect x="363" y="416" width="2" height="72" fill="#001996"/>
<rect x="365" y="416" width="3" height="72" fill="#000069"/>
<rect x="368" y="416" width="2" height="72" fill="#001996"/>
<rect x="370" y="416" width="1" height="72" fill="#000046"/>
<rect x="371" y="416" width="1" height="72" fill="#000023"/>
<rect x="372" y="416" width="1" height="72" fill="#001996"/>
<rect x="373" y="416" width="1" height="72" fill="#0023a0"/>
<rect x="374" y="416" width="1" height="72" fill="#001996"/>
<rect x="375" y="416" width="3" height="72" fill="#000069"/>
<rect x="378" y="416" width="1" height="72" fill="#000a82"/>
<rect x="379" y="416" width="2" height="72" fill="#000069"/>
<rect x="381" y="416" width="1" height="72" fill="#001996"/>
<rect x="382" y="416" width="1" height="72" fill="#0023a0"/>
<rect x="383" y="416" width="1" height="72" fill="#001996"/>
<rect x="384" y="416" width="1" height="72" fill="#000069"/>
<rect x="385" y="416" width="1" height="72" fill="#000046"/>
<rect x="386" y="416" width="2" height="72" fill="#000069"/>
<rect x="388" y="416" width="1" height="72" fill="#000a82"/>
<rect x="389" y="416" width="3" height="72" fill="#001996"/>
<rect x="392" y="416" width="1" height="72" fill="#0023a0"/>
<rect x="393" y="416" width="2" height="72" fill="#000023"/>
<rect x="395" y="416" width="3" height="72" fill="#001996"/>
<rect x="398" y="416" width="3" height="72" fill="#000069"/>
<rect x="401" y="416" width="1" height="72" fill="#000a82"/>
<rect x="402" y="416" width="1" height="72" fill="#000069"/>
<rect x="403" y="416" width="3" height="72" fill="#001996"/>
<rect x="406" y="416" width="2" height="72" fill="#000069"/>
<rect x="408" y="416" width="2" height="72" fill="#000023"/>
<rect x="410" y="416" width="5" height="72" fill="#0023a0"/>
<rect x="415" y="416" width="3" height="72" fill="#000069"/>
<rect x="418" y="416" width="1" height="72" fill="#000a82"/>
<rect x="419" y="416" width="3" height="72" fill="#001996"/>
<rect x="422" y="416" width="3" height="72" fill="#0023a0"/>
<rect x="425" y="416" width="2" height="72" fill="#001996"/>
<rect x="427" y="416" width="2" height="72" fill="#000069"/>
<rect x="429" y="416" width="1" height="72" fill="#001996"/>
<rect x="430" y="416" width="2" height="72" fill="#0023a0"/>
<rect x="432" y="416" width="1" height="72" fill="#00006e"/>
<rect x="433" y="416" width="1" height="72" fill="#000a82"/>
<rect x="434" y="416" width="1" height="72" fill="#001996"/>
<rect x="435" y="416" width="1" height="72" fill="#000069"/>
<rect x="436" y="416" width="1" height="72" fill="#001996"/>
<rect x="437" y="416" width="1" height="72" fill="#000a82"/>
<rect x="438" y="416" width="1" height="72" fill="#000069"/>
<rect x="439" y="416" width="1" height="72" fill="#001996"/>
<rect x="440" y="416" width="1" height="72" fill="#0023a0"/>
<rect x="441" y="416" width="1" height="72" fill="#001996"/>
<rect x="442" y="416" width="1" height="72" fill="#000023"/>
<rect x="443" y="416" width="2" height="72" fill="#001996"/>
<rect x="445" y="416" width="1" height="72" fill="#000069"/>
<rect x="446" y="416" width="1" height="72" fill="#000046"/>
<rect x="447" y="416" width="2" height="72" fill="#000069"/>
<rect x="449" y="416" width="1" height="72" fill="#001996"/>
<rect x="450" y="416" width="1" height="72" fill="#000023"/>
<rect x="451" y="416" width="1" height="72" fill="#000046"/>
<rect x="452" y="416" width="1" height="72" fill="#000069"/>
<rect x="453" y="416" width="1" height="72" fill="#001996"/>
<rect x="454" y="416" width="1" height="72" fill="#000069"/>
<rect x="455" y="416" width="1" height="72" fill="#001996"/>
<rect x="456" y="416" width="3" height="72" fill="#0023a0"/>
<rect x="459" y="416" width="2" height="72" fill="#000069"/>
<rect x="461" y="416" width="2" height="72" fill="#000023"/>
<rect x="463" y="416" width="2" height="72" fill="#0023a0"/>
<rect x="465" y="416" width="1" height="72" fill="#000069"/>
<rect x="466" y="416" width="1" height="72" fill="#001996"/>
<rect x="467" y="416" width="1" height="72" fill="#000069"/>
<rect x="468" y="416" width="3" height="72" fill="#001996"/>
<rect x="471" y="416" width="1" height="72" fill="#000023"/>
<rect x="472" y="416" width="1" height="72" fill="#000069"/>
<rect x="473" y="416" width="1" height="72" fill="#000a82"/>
<rect x="474" y="416" width="1" height="72" fill="#0023a0"/>
<rect x="475" y="416" width="1" height="72" fill="#001996"/>
<rect x="476" y="416" width="1" height="72" fill="#0023a0"/>
<rect x="477" y="416" width="1" height="72" fill="#00006e"/>
<rect x="478" y="416" width="1" height="72" fill="#0023a0"/>
<rect x="479" y="416" width="1" height="72" fill="#00006e"/>
<rect x="480" y="416" width="1" height="72" fill="#001996"/>
<rect x="481" y="416" width="2" height="72" fill="#000023"/>
<rect x="483" y="416" width="3" height="72" fill="#0023a0"/>
<rect x="486" y="416" width="1" height="72" fill="#001996"/>
<rect x="487" y="416" width="1" height="72" fill="#0023a0"/>
<rect x="488" y="416" width="3" height="72" fill="#000069"/>
<rect x="491" y="416" width="1" height="72" fill="#000a82"/>
<rect x="492" y="416" width="1" height="72" fill="#000023"/>
<rect x="493" y="416" width="1" height="72" fill="#001996"/>
<rect x="494" y="416" width="1" height="72" fill="#000069"/>
<rect x="495" y="416" width="1" height="72" fill="#000046"/>
<rect x="496" y="416" width="1" height="72" fill="#000023"/>
<rect x="497" y="416" width="2" height="72" fill="#0023a0"/>
<rect x="499" y="416" width="1" height="72" fill="#000023"/>
<rect x="500" y="416" width="5" height="72" fill="#0023a0"/>
<rect x="505" y="416" width="2" height="72" fill="#001996"/>
<rect x="507" y="416" width="3" height="72" fill="#0023a0"/>
<rect x="510" y="416" width="4" height="72" fill="#000069"/>
<rect x="514" y="416" width="1" height="72" fill="#000023"/>
<rect x="515" y="416" width="4" height="72" fill="#001996"/>
<rect x="519" y="416" width="2" height="72" fill="#0023a0"/>
<rect x="521" y="416" width="1" height="72" fill="#001996"/>
<rect x="522" y="416" width="1" height="72" fill="#0023a0"/>
<rect x="523" y="416" width="1" height="72" fill="#001996"/>
<rect x="524" y="416" width="3" height="72" fill="#000069"/>
<rect x="527" y="416" width="2" height="72" fill="#000023"/>
<rect x="529" y="416" width="2" height="72" fill="#001996"/>
<rect x="531" y="416" width="4" height="72" fill="#000046"/>
<rect x="535" y="416" width="1" height="72" fill="#001996"/>
<rect x="536" y="416" width="1" height="72" fill="#0023a0"/>
<rect x="537" y="416" width="4" height="72" fill="#001996"/>
<rect x="541" y="416" width="2" height="72" fill="#000023"/>
<rect x="543" y="416" width="3" height="72" fill="#0023a0"/>
<rect x="546" y="416" width="3" height="72" fill="#001996"/>
<rect x="549" y="416" width="3" height="72" fill="#000069"/>
<rect x="552" y="416" width="4" height="72" fill="#0023a0"/>
<rect x="556" y="416" width="4" height="72" fill="#001996"/>
<rect x="560" y="416" width="3" height="72" fill="#000069"/>
<rect x="563" y="416" width="1" height="72" fill="#000023"/>
<rect x="564" y="416" width="2" height="72" fill="#001996"/>
<rect x="566" y="416" width="3" height="72" fill="#0023a0"/>
<rect x="569" y="416" width="1" height="72" fill="#001996"/>
<rect x="570" y="416" width="1" height="72" fill="#000069"/>
<rect x="571" y="416" width="1" height="72" fill="#000046"/>
<rect x="572" y="416" width="2" height="72" fill="#000069"/>
<rect x="574" y="416" width="1" height="72" fill="#000046"/>
<rect x="575" y="416" width="2" height="72" fill="#0023a0"/>
<rect x="577" y="416" width="2" height="72" fill="#000069"/>
<rect x="579" y="416" width="1" height="72" fill="#001996"/>
<rect x="580" y="416" width="1" height="72" fill="#0023a0"/>
<rect x="581" y="416" width="3" height="72" fill="#001996"/>
<rect x="584" y="416" width="3" height="72" fill="#000069"/>
<rect x="587" y="416" width="1" height="72" fill="#000a82"/>
<rect x="588" y="416" width="3" height="72" fill="#0023a0"/>
<rect x="591" y="416" width="1" height="72" fill="#00006e"/>
<rect x="592" y="416" width="2" height="72" fill="#001996"/>
<rect x="594" y="416" width="1" height="72" fill="#000a82"/>
<rect x="595" y="416" width="4" height="72" fill="#001996"/>
<rect x="599" y="416" width="1" height="72" fill="#000023"/>
<rect x="600" y="416" width="3" height="72" fill="#000069"/>
<rect x="603" y="416" width="3" height="72" fill="#001996"/>
<rect x="606" y="416" width="2" height="72" fill="#0023a0"/>
<rect x="608" y="416" width="1" height="72" fill="#000023"/>
<rect x="609" y="416" width="1" height="72" fill="#00006e"/>
<rect x="610" y="416" width="1" height="72" fill="#0023a0"/>
<rect x="611" y="416" width="3" height="72" fill="#001996"/>
<rect x="614" y="416" width="2" height="72" fill="#000069"/>
<rect x="616" y="416" width="1" height="72" fill="#000046"/>
<rect x="617" y="416" width="2" height="72" fill="#001996"/>
<rect x="619" y="416" width="1" height="72" fill="#000046"/>
<rect x="620" y="416" width="2" height="72" fill="#000069"/>
<rect x="622" y="416" width="1" height="72" fill="#001996"/>
<rect x="623" y="416" width="3" height="72" fill="#000069"/>
<rect x="626" y="416" width="1" height="72" fill="#001996"/>
<rect x="627" y="416" width="1" height="72" fill="#0023a0"/>
<rect x="628" y="416" width="2" height="72" fill="#000069"/>
<rect x="630" y="416" width="1" height="72" fill="#000a82"/>
<rect x="631" y="416" width="2" height="72" fill="#000069"/>
<rect x="633" y="416" width="1" height="72" fill="#000023"/>
<rect x="634" y="416" width="1" height="72" fill="#00006e"/>
<rect x="635" y="416" width="1" height="72" fill="#0023a0"/>
<rect x="636" y="416" width="1" height="72" fill="#001996"/>
<rect x="637" y="416" width="1" height="72" fill="#000069"/>
<rect x="638" y="416" width="1" height="72" fill="#001996"/>
<rect x="639" y="416" width="1" height="72" fill="#000a82"/>
<rect x="640" y="416" width="1" height="72" fill="#000069"/>
<rect x="641" y="416" width="1" height="72" fill="#001996"/>
<rect x="642" y="416" width="1" height="72" fill="#000069"/>
<rect x="643" y="416" width="2" height="72" fill="#000023"/>
<rect x="645" y="416" width="3" height="72" fill="#001996"/>
<rect x="648" y="416" width="3" height="72" fill="#0023a0"/>
<rect x="651" y="416" width="1" height="72" fill="#000069"/>
<rect x="652" y="416" width="1" height="72" fill="#001996"/>
<rect x="653" y="416" width="1" height="72" fill="#000069"/>
<rect x="654" y="416" width="5" height="72" fill="#001996"/>
<rect x="659" y="416" width="1" height="72" fill="#000023"/>
<rect x="660" y="416" width="3" height="72" fill="#0023a0"/>
<rect x="663" y="416" width="4" height="72" fill="#000069"/>
<rect x="667" y="416" width="1" height="72" fill="#000023"/>
<rect x="668" y="416" width="3" height="72" fill="#0023a0"/>
<rect x="671" y="416" width="1" height="72" fill="#001996"/>
<rect x="672" y="416" width="1" height="72" fill="#0023a0"/>
<rect x="673" y="416" width="1" height="72" fill="#001996"/>
<rect x="674" y="416" width="1" height="72" fill="#000069"/>
<rect x="675" y="416" width="1" height="72" fill="#000023"/>
<rect x="676" y="416" width="1" height="72" fill="#000069"/>
<rect x="677" y="416" width="4" height="72" fill="#001996"/>
<rect x="681" y="416" width="1" height="72" fill="#000069"/>
<rect x="682" y="416" width="4" height="72" fill="#001996"/>
<rect x="686" y="416" width="3" height="72" fill="#000069"/>
<rect x="689" y="416" width="1" height="72" fill="#000a82"/>
<rect x="690" y="416" width="3" height="72" fill="#000069"/>
<rect x="79" y="386" width="614" height="2" fill="#00dca0" fill-opacity="0.6"/>
<rect x="79" y="388" width="614" height="3" fill="#14ff3c" fill-opacity="0.85"/>
<rect x="79" y="391" width="614" height="5" fill="#96ff00" fill-opacity="0.8"/>
<rect x="79" y="396" width="614" height="1" fill="#00c8dc" fill-opacity="0.6"/>
<rect x="79" y="406" width="614" height="2" fill="#00d2c8" fill-opacity="0.55"/>
<rect x="79" y="408" width="614" height="3" fill="#000ad2" fill-opacity="0.45"/>
<rect x="79" y="411" width="614" height="3" fill="#14ff50" fill-opacity="0.92"/>
<rect x="79" y="414" width="614" height="2" fill="#00a0f0" fill-opacity="0.75"/>
<rect x="79" y="430" width="614" height="1" fill="#00d7ff" fill-opacity="0.9"/>
<rect x="79" y="431" width="614" height="1" fill="#0096fa" fill-opacity="0.45"/>
<rect x="79" y="432" width="614" height="2" fill="#0014c8" fill-opacity="0.55"/>
<rect x="79" y="434" width="614" height="1" fill="#00dcf0" fill-opacity="0.85"/>
<rect x="79" y="435" width="614" height="2" fill="#001ee6" fill-opacity="0.7"/>
<rect x="79" y="437" width="614" height="1" fill="#00a0ff" fill-opacity="0.5"/>
<rect x="79" y="438" width="614" height="6" fill="#0000c8" fill-opacity="0.5"/>
<rect x="79" y="444" width="614" height="6" fill="#0046fa" fill-opacity="0.55"/>
<rect x="79" y="454" width="614" height="1" fill="#00d2f5" fill-opacity="0.85"/>
<rect x="79" y="457" width="614" height="1" fill="#00f0b4" fill-opacity="0.85"/>
<rect x="79" y="460" width="614" height="1" fill="#00cdff" fill-opacity="0.85"/>
<rect x="79" y="461" width="614" height="2" fill="#0028d2" fill-opacity="0.5"/>
<rect x="79" y="463" width="614" height="11" fill="#00001e" fill-opacity="0.6"/>
<rect x="79" y="475" width="614" height="1" fill="#008cfa" fill-opacity="0.7"/>
<rect x="79" y="476" width="614" height="2" fill="#001ebe" fill-opacity="0.6"/>
<rect x="79" y="478" width="614" height="1" fill="#000028" fill-opacity="0.8"/>
<rect x="79" y="479" width="614" height="1" fill="#d2468c" fill-opacity="0.85"/>
<rect x="79" y="480" width="614" height="3" fill="#8cd2f0" fill-opacity="0.85"/>
<rect x="79" y="483" width="614" height="2" fill="#00eba0" fill-opacity="0.85"/>
<rect x="79" y="485" width="614" height="2" fill="#000050" fill-opacity="0.7"/>
<rect x="79" y="487" width="614" height="1" fill="#d73c6e" fill-opacity="0.9"/>
<rect x="79" y="388" width="614" height="8" fill="url(#pb2)"/>
<rect x="79" y="444" width="614" height="6" fill="url(#plb)"/>
<rect x="79" y="416" width="614" height="14" fill="url(#pn)"/>
<rect x="79" y="416" width="614" height="14" fill="url(#pd)"/>
<rect x="79" y="416" width="614" height="14" fill="url(#pw2)"/>
<rect x="79" y="438" width="614" height="6" fill="url(#pn)"/>
<rect x="79" y="438" width="614" height="6" fill="url(#pd)"/>
<rect x="79" y="438" width="614" height="6" fill="url(#pw2)"/>
<rect x="79" y="450" width="614" height="4" fill="url(#pn)"/>
<rect x="79" y="450" width="614" height="4" fill="url(#pd)"/>
<rect x="79" y="450" width="614" height="4" fill="url(#pw2)"/>
<rect x="79" y="463" width="614" height="11" fill="url(#pn)"/>
<rect x="79" y="463" width="614" height="11" fill="url(#pd)"/>
<rect x="79" y="463" width="614" height="11" fill="url(#pw2)"/>
<rect x="79" y="485" width="614" height="2" fill="url(#pn)"/>
<rect x="79" y="485" width="614" height="2" fill="url(#pd)"/>
<rect x="79" y="485" width="614" height="2" fill="url(#pw2)"/>
<rect x="98" y="332" width="1" height="55" fill="#beff00" fill-opacity="0.5"/>
<rect x="98" y="387" width="1" height="101" fill="#beff00" fill-opacity="0.9"/>
<rect x="102" y="387" width="1" height="101" fill="#00dcff" fill-opacity="0.75"/>
<rect x="112" y="332" width="1" height="55" fill="#beff00" fill-opacity="0.5"/>
<rect x="112" y="387" width="1" height="101" fill="#beff00" fill-opacity="0.9"/>
<rect x="116" y="387" width="1" height="101" fill="#00dcff" fill-opacity="0.75"/>
<rect x="127" y="387" width="1" height="101" fill="#00dcff" fill-opacity="0.75"/>
<rect x="151" y="332" width="1" height="55" fill="#28ff3c" fill-opacity="0.5"/>
<rect x="151" y="387" width="1" height="101" fill="#28ff3c" fill-opacity="0.75"/>
<rect x="156" y="387" width="1" height="101" fill="#00dcff" fill-opacity="0.75"/>
<rect x="168" y="387" width="1" height="101" fill="#00dcff" fill-opacity="0.75"/>
<rect x="173" y="387" width="1" height="101" fill="#00dcff" fill-opacity="0.75"/>
<rect x="180" y="332" width="1" height="55" fill="#28ff3c" fill-opacity="0.5"/>
<rect x="180" y="387" width="1" height="101" fill="#28ff3c" fill-opacity="0.75"/>
<rect x="188" y="332" width="1" height="55" fill="#beff00" fill-opacity="0.5"/>
<rect x="188" y="387" width="1" height="101" fill="#beff00" fill-opacity="0.9"/>
<rect x="190" y="387" width="1" height="101" fill="#00dcff" fill-opacity="0.75"/>
<rect x="201" y="387" width="1" height="101" fill="#00dcff" fill-opacity="0.75"/>
<rect x="217" y="387" width="1" height="101" fill="#00dcff" fill-opacity="0.75"/>
<rect x="220" y="332" width="1" height="55" fill="#beff00" fill-opacity="0.5"/>
<rect x="220" y="387" width="1" height="101" fill="#beff00" fill-opacity="0.9"/>
<rect x="251" y="332" width="1" height="55" fill="#28ff3c" fill-opacity="0.5"/>
<rect x="251" y="387" width="1" height="101" fill="#28ff3c" fill-opacity="0.75"/>
<rect x="255" y="332" width="1" height="55" fill="#beff00" fill-opacity="0.5"/>
<rect x="255" y="387" width="1" height="101" fill="#beff00" fill-opacity="0.9"/>
<rect x="259" y="387" width="1" height="101" fill="#00dcff" fill-opacity="0.75"/>
<rect x="273" y="387" width="1" height="101" fill="#00dcff" fill-opacity="0.75"/>
<rect x="277" y="387" width="1" height="101" fill="#00dcff" fill-opacity="0.75"/>
<rect x="288" y="332" width="1" height="55" fill="#beff00" fill-opacity="0.5"/>
<rect x="288" y="387" width="1" height="101" fill="#beff00" fill-opacity="0.9"/>
<rect x="291" y="387" width="1" height="101" fill="#00dcff" fill-opacity="0.75"/>
<rect x="316" y="387" width="1" height="101" fill="#00dcff" fill-opacity="0.75"/>
<rect x="318" y="332" width="1" height="55" fill="#28ff3c" fill-opacity="0.5"/>
<rect x="318" y="387" width="1" height="101" fill="#28ff3c" fill-opacity="0.75"/>
<rect x="336" y="332" width="1" height="55" fill="#28ff3c" fill-opacity="0.5"/>
<rect x="336" y="387" width="1" height="101" fill="#28ff3c" fill-opacity="0.75"/>
<rect x="350" y="387" width="1" height="101" fill="#00dcff" fill-opacity="0.75"/>
<rect x="383" y="387" width="1" height="101" fill="#00dcff" fill-opacity="0.75"/>
<rect x="386" y="332" width="1" height="55" fill="#28ff3c" fill-opacity="0.5"/>
<rect x="386" y="387" width="1" height="101" fill="#28ff3c" fill-opacity="0.75"/>
<rect x="392" y="332" width="1" height="55" fill="#28ff3c" fill-opacity="0.5"/>
<rect x="392" y="387" width="1" height="101" fill="#28ff3c" fill-opacity="0.75"/>
<rect x="404" y="387" width="1" height="101" fill="#00dcff" fill-opacity="0.75"/>
<rect x="431" y="332" width="1" height="55" fill="#28ff3c" fill-opacity="0.5"/>
<rect x="431" y="387" width="1" height="101" fill="#28ff3c" fill-opacity="0.75"/>
<rect x="433" y="387" width="1" height="101" fill="#00dcff" fill-opacity="0.75"/>
<rect x="462" y="387" width="1" height="101" fill="#00dcff" fill-opacity="0.75"/>
<rect x="475" y="387" width="1" height="101" fill="#00dcff" fill-opacity="0.75"/>
<rect x="478" y="387" width="1" height="101" fill="#00dcff" fill-opacity="0.75"/>
<rect x="483" y="387" width="1" height="101" fill="#00dcff" fill-opacity="0.75"/>
<rect x="493" y="332" width="1" height="55" fill="#28ff3c" fill-opacity="0.5"/>
<rect x="493" y="387" width="1" height="101" fill="#28ff3c" fill-opacity="0.75"/>
<rect x="497" y="332" width="1" height="55" fill="#beff00" fill-opacity="0.5"/>
<rect x="497" y="387" width="1" height="101" fill="#beff00" fill-opacity="0.9"/>
<rect x="508" y="387" width="1" height="101" fill="#00dcff" fill-opacity="0.75"/>
<rect x="515" y="387" width="1" height="101" fill="#00dcff" fill-opacity="0.75"/>
<rect x="521" y="387" width="1" height="101" fill="#00dcff" fill-opacity="0.75"/>
<rect x="529" y="387" width="1" height="101" fill="#00dcff" fill-opacity="0.75"/>
<rect x="540" y="332" width="1" height="55" fill="#28ff3c" fill-opacity="0.5"/>
<rect x="540" y="387" width="1" height="101" fill="#28ff3c" fill-opacity="0.75"/>
<rect x="543" y="387" width="1" height="101" fill="#00dcff" fill-opacity="0.75"/>
<rect x="566" y="387" width="1" height="101" fill="#00dcff" fill-opacity="0.75"/>
<rect x="580" y="387" width="1" height="101" fill="#00dcff" fill-opacity="0.75"/>
<rect x="591" y="332" width="1" height="55" fill="#beff00" fill-opacity="0.5"/>
<rect x="591" y="387" width="1" height="101" fill="#beff00" fill-opacity="0.9"/>
<rect x="601" y="387" width="1" height="101" fill="#00dcff" fill-opacity="0.75"/>
<rect x="606" y="387" width="1" height="101" fill="#00dcff" fill-opacity="0.75"/>
<rect x="617" y="387" width="1" height="101" fill="#00dcff" fill-opacity="0.75"/>
<rect x="625" y="387" width="1" height="101" fill="#00dcff" fill-opacity="0.75"/>
<rect x="634" y="332" width="1" height="55" fill="#beff00" fill-opacity="0.5"/>
<rect x="634" y="387" width="1" height="101" fill="#beff00" fill-opacity="0.9"/>
<rect x="649" y="332" width="1" height="55" fill="#28ff3c" fill-opacity="0.5"/>
<rect x="649" y="387" width="1" height="101" fill="#28ff3c" fill-opacity="0.75"/>
<rect x="660" y="387" width="1" height="101" fill="#00dcff" fill-opacity="0.75"/>
<rect x="677" y="387" width="1" height="101" fill="#00dcff" fill-opacity="0.75"/>
<rect x="691" y="387" width="1" height="101" fill="#00dcff" fill-opacity="0.75"/>
<rect x="356" y="466" width="11" height="7" fill="#0040e8" fill-opacity="0.7"/>
<rect x="356" y="470" width="11" height="3" fill="#2090ff" fill-opacity="0.8"/>
<rect x="356" y="473" width="11" height="5" fill="#30ff40"/>
<rect x="649" y="463" width="12" height="11" fill="#0038e8" fill-opacity="0.75"/>
<rect x="650" y="474" width="11" height="4" fill="#30ff40"/>
</g>
<line x1="79.5" y1="497.5" x2="703.5" y2="497.5" stroke="#686868" stroke-width="1"/>
<line x1="79.5" y1="528.5" x2="703.5" y2="528.5" stroke="#686868" stroke-width="1"/>
<line x1="79.5" y1="497.5" x2="79.5" y2="528.5" stroke="#686868" stroke-width="1"/>
<line x1="703.5" y1="497.5" x2="703.5" y2="528.5" stroke="#686868" stroke-width="1"/>
<line x1="79.5" y1="497.5" x2="79.5" y2="487.5" stroke="#404040" stroke-width="1"/>
<line x1="89.5" y1="497.5" x2="89.5" y2="493.5" stroke="#8a8a8a" stroke-width="1"/>
<line x1="100.5" y1="497.5" x2="100.5" y2="493.5" stroke="#8a8a8a" stroke-width="1"/>
<line x1="110.5" y1="497.5" x2="110.5" y2="493.5" stroke="#8a8a8a" stroke-width="1"/>
<line x1="120.5" y1="497.5" x2="120.5" y2="493.5" stroke="#8a8a8a" stroke-width="1"/>
<line x1="131.5" y1="497.5" x2="131.5" y2="493.5" stroke="#8a8a8a" stroke-width="1"/>
<line x1="141.5" y1="497.5" x2="141.5" y2="487.5" stroke="#404040" stroke-width="1"/>
<line x1="152.5" y1="497.5" x2="152.5" y2="493.5" stroke="#8a8a8a" stroke-width="1"/>
<line x1="162.5" y1="497.5" x2="162.5" y2="493.5" stroke="#8a8a8a" stroke-width="1"/>
<line x1="172.5" y1="497.5" x2="172.5" y2="493.5" stroke="#8a8a8a" stroke-width="1"/>
<line x1="183.5" y1="497.5" x2="183.5" y2="493.5" stroke="#8a8a8a" stroke-width="1"/>
<line x1="193.5" y1="497.5" x2="193.5" y2="493.5" stroke="#8a8a8a" stroke-width="1"/>
<line x1="204.5" y1="497.5" x2="204.5" y2="487.5" stroke="#404040" stroke-width="1"/>
<line x1="214.5" y1="497.5" x2="214.5" y2="493.5" stroke="#8a8a8a" stroke-width="1"/>
<line x1="224.5" y1="497.5" x2="224.5" y2="493.5" stroke="#8a8a8a" stroke-width="1"/>
<line x1="235.5" y1="497.5" x2="235.5" y2="493.5" stroke="#8a8a8a" stroke-width="1"/>
<line x1="245.5" y1="497.5" x2="245.5" y2="493.5" stroke="#8a8a8a" stroke-width="1"/>
<line x1="256.5" y1="497.5" x2="256.5" y2="493.5" stroke="#8a8a8a" stroke-width="1"/>
<line x1="266.5" y1="497.5" x2="266.5" y2="487.5" stroke="#404040" stroke-width="1"/>
<line x1="276.5" y1="497.5" x2="276.5" y2="493.5" stroke="#8a8a8a" stroke-width="1"/>
<line x1="287.5" y1="497.5" x2="287.5" y2="493.5" stroke="#8a8a8a" stroke-width="1"/>
<line x1="297.5" y1="497.5" x2="297.5" y2="493.5" stroke="#8a8a8a" stroke-width="1"/>
<line x1="308.5" y1="497.5" x2="308.5" y2="493.5" stroke="#8a8a8a" stroke-width="1"/>
<line x1="318.5" y1="497.5" x2="318.5" y2="493.5" stroke="#8a8a8a" stroke-width="1"/>
<line x1="328.5" y1="497.5" x2="328.5" y2="487.5" stroke="#404040" stroke-width="1"/>
<line x1="339.5" y1="497.5" x2="339.5" y2="493.5" stroke="#8a8a8a" stroke-width="1"/>
<line x1="349.5" y1="497.5" x2="349.5" y2="493.5" stroke="#8a8a8a" stroke-width="1"/>
<line x1="360.5" y1="497.5" x2="360.5" y2="493.5" stroke="#8a8a8a" stroke-width="1"/>
<line x1="370.5" y1="497.5" x2="370.5" y2="493.5" stroke="#8a8a8a" stroke-width="1"/>
<line x1="380.5" y1="497.5" x2="380.5" y2="493.5" stroke="#8a8a8a" stroke-width="1"/>
<line x1="391.5" y1="497.5" x2="391.5" y2="487.5" stroke="#404040" stroke-width="1"/>
<line x1="401.5" y1="497.5" x2="401.5" y2="493.5" stroke="#8a8a8a" stroke-width="1"/>
<line x1="412.5" y1="497.5" x2="412.5" y2="493.5" stroke="#8a8a8a" stroke-width="1"/>
<line x1="422.5" y1="497.5" x2="422.5" y2="493.5" stroke="#8a8a8a" stroke-width="1"/>
<line x1="432.5" y1="497.5" x2="432.5" y2="493.5" stroke="#8a8a8a" stroke-width="1"/>
<line x1="443.5" y1="497.5" x2="443.5" y2="493.5" stroke="#8a8a8a" stroke-width="1"/>
<line x1="453.5" y1="497.5" x2="453.5" y2="487.5" stroke="#404040" stroke-width="1"/>
<line x1="463.5" y1="497.5" x2="463.5" y2="493.5" stroke="#8a8a8a" stroke-width="1"/>
<line x1="474.5" y1="497.5" x2="474.5" y2="493.5" stroke="#8a8a8a" stroke-width="1"/>
<line x1="484.5" y1="497.5" x2="484.5" y2="493.5" stroke="#8a8a8a" stroke-width="1"/>
<line x1="495.5" y1="497.5" x2="495.5" y2="493.5" stroke="#8a8a8a" stroke-width="1"/>
<line x1="505.5" y1="497.5" x2="505.5" y2="493.5" stroke="#8a8a8a" stroke-width="1"/>
<line x1="516.5" y1="497.5" x2="516.5" y2="487.5" stroke="#404040" stroke-width="1"/>
<line x1="526.5" y1="497.5" x2="526.5" y2="493.5" stroke="#8a8a8a" stroke-width="1"/>
<line x1="536.5" y1="497.5" x2="536.5" y2="493.5" stroke="#8a8a8a" stroke-width="1"/>
<line x1="547.5" y1="497.5" x2="547.5" y2="493.5" stroke="#8a8a8a" stroke-width="1"/>
<line x1="557.5" y1="497.5" x2="557.5" y2="493.5" stroke="#8a8a8a" stroke-width="1"/>
<line x1="568.5" y1="497.5" x2="568.5" y2="493.5" stroke="#8a8a8a" stroke-width="1"/>
<line x1="578.5" y1="497.5" x2="578.5" y2="487.5" stroke="#404040" stroke-width="1"/>
<line x1="588.5" y1="497.5" x2="588.5" y2="493.5" stroke="#8a8a8a" stroke-width="1"/>
<line x1="599.5" y1="497.5" x2="599.5" y2="493.5" stroke="#8a8a8a" stroke-width="1"/>
<line x1="609.5" y1="497.5" x2="609.5" y2="493.5" stroke="#8a8a8a" stroke-width="1"/>
<line x1="620.5" y1="497.5" x2="620.5" y2="493.5" stroke="#8a8a8a" stroke-width="1"/>
<line x1="630.5" y1="497.5" x2="630.5" y2="493.5" stroke="#8a8a8a" stroke-width="1"/>
<line x1="640.5" y1="497.5" x2="640.5" y2="487.5" stroke="#404040" stroke-width="1"/>
<line x1="651.5" y1="497.5" x2="651.5" y2="493.5" stroke="#8a8a8a" stroke-width="1"/>
<line x1="661.5" y1="497.5" x2="661.5" y2="493.5" stroke="#8a8a8a" stroke-width="1"/>
<line x1="672.5" y1="497.5" x2="672.5" y2="493.5" stroke="#8a8a8a" stroke-width="1"/>
<line x1="682.5" y1="497.5" x2="682.5" y2="493.5" stroke="#8a8a8a" stroke-width="1"/>
<line x1="692.5" y1="497.5" x2="692.5" y2="493.5" stroke="#8a8a8a" stroke-width="1"/>
<line x1="703.5" y1="497.5" x2="703.5" y2="487.5" stroke="#404040" stroke-width="1"/>
<line x1="79.5" y1="528.5" x2="79.5" y2="538.5" stroke="#404040" stroke-width="1"/>
<line x1="89.5" y1="528.5" x2="89.5" y2="532.5" stroke="#8a8a8a" stroke-width="1"/>
<line x1="100.5" y1="528.5" x2="100.5" y2="532.5" stroke="#8a8a8a" stroke-width="1"/>
<line x1="110.5" y1="528.5" x2="110.5" y2="532.5" stroke="#8a8a8a" stroke-width="1"/>
<line x1="120.5" y1="528.5" x2="120.5" y2="532.5" stroke="#8a8a8a" stroke-width="1"/>
<line x1="131.5" y1="528.5" x2="131.5" y2="532.5" stroke="#8a8a8a" stroke-width="1"/>
<line x1="141.5" y1="528.5" x2="141.5" y2="538.5" stroke="#404040" stroke-width="1"/>
<line x1="152.5" y1="528.5" x2="152.5" y2="532.5" stroke="#8a8a8a" stroke-width="1"/>
<line x1="162.5" y1="528.5" x2="162.5" y2="532.5" stroke="#8a8a8a" stroke-width="1"/>
<line x1="172.5" y1="528.5" x2="172.5" y2="532.5" stroke="#8a8a8a" stroke-width="1"/>
<line x1="183.5" y1="528.5" x2="183.5" y2="532.5" stroke="#8a8a8a" stroke-width="1"/>
<line x1="193.5" y1="528.5" x2="193.5" y2="532.5" stroke="#8a8a8a" stroke-width="1"/>
<line x1="204.5" y1="528.5" x2="204.5" y2="538.5" stroke="#404040" stroke-width="1"/>
<line x1="214.5" y1="528.5" x2="214.5" y2="532.5" stroke="#8a8a8a" stroke-width="1"/>
<line x1="224.5" y1="528.5" x2="224.5" y2="532.5" stroke="#8a8a8a" stroke-width="1"/>
<line x1="235.5" y1="528.5" x2="235.5" y2="532.5" stroke="#8a8a8a" stroke-width="1"/>
<line x1="245.5" y1="528.5" x2="245.5" y2="532.5" stroke="#8a8a8a" stroke-width="1"/>
<line x1="256.5" y1="528.5" x2="256.5" y2="532.5" stroke="#8a8a8a" stroke-width="1"/>
<line x1="266.5" y1="528.5" x2="266.5" y2="538.5" stroke="#404040" stroke-width="1"/>
<line x1="276.5" y1="528.5" x2="276.5" y2="532.5" stroke="#8a8a8a" stroke-width="1"/>
<line x1="287.5" y1="528.5" x2="287.5" y2="532.5" stroke="#8a8a8a" stroke-width="1"/>
<line x1="297.5" y1="528.5" x2="297.5" y2="532.5" stroke="#8a8a8a" stroke-width="1"/>
<line x1="308.5" y1="528.5" x2="308.5" y2="532.5" stroke="#8a8a8a" stroke-width="1"/>
<line x1="318.5" y1="528.5" x2="318.5" y2="532.5" stroke="#8a8a8a" stroke-width="1"/>
<line x1="328.5" y1="528.5" x2="328.5" y2="538.5" stroke="#404040" stroke-width="1"/>
<line x1="339.5" y1="528.5" x2="339.5" y2="532.5" stroke="#8a8a8a" stroke-width="1"/>
<line x1="349.5" y1="528.5" x2="349.5" y2="532.5" stroke="#8a8a8a" stroke-width="1"/>
<line x1="360.5" y1="528.5" x2="360.5" y2="532.5" stroke="#8a8a8a" stroke-width="1"/>
<line x1="370.5" y1="528.5" x2="370.5" y2="532.5" stroke="#8a8a8a" stroke-width="1"/>
<line x1="380.5" y1="528.5" x2="380.5" y2="532.5" stroke="#8a8a8a" stroke-width="1"/>
<line x1="391.5" y1="528.5" x2="391.5" y2="538.5" stroke="#404040" stroke-width="1"/>
<line x1="401.5" y1="528.5" x2="401.5" y2="532.5" stroke="#8a8a8a" stroke-width="1"/>
<line x1="412.5" y1="528.5" x2="412.5" y2="532.5" stroke="#8a8a8a" stroke-width="1"/>
<line x1="422.5" y1="528.5" x2="422.5" y2="532.5" stroke="#8a8a8a" stroke-width="1"/>
<line x1="432.5" y1="528.5" x2="432.5" y2="532.5" stroke="#8a8a8a" stroke-width="1"/>
<line x1="443.5" y1="528.5" x2="443.5" y2="532.5" stroke="#8a8a8a" stroke-width="1"/>
<line x1="453.5" y1="528.5" x2="453.5" y2="538.5" stroke="#404040" stroke-width="1"/>
<line x1="463.5" y1="528.5" x2="463.5" y2="532.5" stroke="#8a8a8a" stroke-width="1"/>
<line x1="474.5" y1="528.5" x2="474.5" y2="532.5" stroke="#8a8a8a" stroke-width="1"/>
<line x1="484.5" y1="528.5" x2="484.5" y2="532.5" stroke="#8a8a8a" stroke-width="1"/>
<line x1="495.5" y1="528.5" x2="495.5" y2="532.5" stroke="#8a8a8a" stroke-width="1"/>
<line x1="505.5" y1="528.5" x2="505.5" y2="532.5" stroke="#8a8a8a" stroke-width="1"/>
<line x1="516.5" y1="528.5" x2="516.5" y2="538.5" stroke="#404040" stroke-width="1"/>
<line x1="526.5" y1="528.5" x2="526.5" y2="532.5" stroke="#8a8a8a" stroke-width="1"/>
<line x1="536.5" y1="528.5" x2="536.5" y2="532.5" stroke="#8a8a8a" stroke-width="1"/>
<line x1="547.5" y1="528.5" x2="547.5" y2="532.5" stroke="#8a8a8a" stroke-width="1"/>
<line x1="557.5" y1="528.5" x2="557.5" y2="532.5" stroke="#8a8a8a" stroke-width="1"/>
<line x1="568.5" y1="528.5" x2="568.5" y2="532.5" stroke="#8a8a8a" stroke-width="1"/>
<line x1="578.5" y1="528.5" x2="578.5" y2="538.5" stroke="#404040" stroke-width="1"/>
<line x1="588.5" y1="528.5" x2="588.5" y2="532.5" stroke="#8a8a8a" stroke-width="1"/>
<line x1="599.5" y1="528.5" x2="599.5" y2="532.5" stroke="#8a8a8a" stroke-width="1"/>
<line x1="609.5" y1="528.5" x2="609.5" y2="532.5" stroke="#8a8a8a" stroke-width="1"/>
<line x1="620.5" y1="528.5" x2="620.5" y2="532.5" stroke="#8a8a8a" stroke-width="1"/>
<line x1="630.5" y1="528.5" x2="630.5" y2="532.5" stroke="#8a8a8a" stroke-width="1"/>
<line x1="640.5" y1="528.5" x2="640.5" y2="538.5" stroke="#404040" stroke-width="1"/>
<line x1="651.5" y1="528.5" x2="651.5" y2="532.5" stroke="#8a8a8a" stroke-width="1"/>
<line x1="661.5" y1="528.5" x2="661.5" y2="532.5" stroke="#8a8a8a" stroke-width="1"/>
<line x1="672.5" y1="528.5" x2="672.5" y2="532.5" stroke="#8a8a8a" stroke-width="1"/>
<line x1="682.5" y1="528.5" x2="682.5" y2="532.5" stroke="#8a8a8a" stroke-width="1"/>
<line x1="692.5" y1="528.5" x2="692.5" y2="532.5" stroke="#8a8a8a" stroke-width="1"/>
<line x1="703.5" y1="528.5" x2="703.5" y2="538.5" stroke="#404040" stroke-width="1"/>
<line x1="74" y1="497.5" x2="79.5" y2="497.5" stroke="#686868" stroke-width="1"/>
<line x1="703.5" y1="497.5" x2="708.5" y2="497.5" stroke="#686868" stroke-width="1"/>
<line x1="74" y1="528.5" x2="79.5" y2="528.5" stroke="#686868" stroke-width="1"/>
<line x1="703.5" y1="528.5" x2="708.5" y2="528.5" stroke="#686868" stroke-width="1"/>
<line x1="77" y1="505.25" x2="79.5" y2="505.25" stroke="#666" stroke-width="1"/>
<line x1="703.5" y1="505.25" x2="705.5" y2="505.25" stroke="#666" stroke-width="1"/>
<line x1="77" y1="513.0" x2="79.5" y2="513.0" stroke="#666" stroke-width="1"/>
<line x1="703.5" y1="513.0" x2="705.5" y2="513.0" stroke="#666" stroke-width="1"/>
<line x1="77" y1="520.75" x2="79.5" y2="520.75" stroke="#666" stroke-width="1"/>
<line x1="703.5" y1="520.75" x2="705.5" y2="520.75" stroke="#666" stroke-width="1"/>
<rect x="79" y="510" width="614" height="3" fill="#111"/>
<defs><pattern id="dots3" width="7" height="3" patternUnits="userSpaceOnUse"><rect x="2" y="1" width="2" height="1" fill="#777"/><rect x="5" y="0" width="1" height="1" fill="#555"/></pattern></defs>
<rect x="79" y="510" width="614" height="3" fill="url(#dots3)"/>
<defs><linearGradient id="g201" x1="0" y1="1" x2="0" y2="0"><stop offset="0.000" stop-color="rgb(0, 0, 0)"/><stop offset="0.087" stop-color="rgb(0, 0, 120)"/><stop offset="0.175" stop-color="rgb(0, 0, 255)"/><stop offset="0.238" stop-color="rgb(0, 140, 255)"/><stop offset="0.288" stop-color="rgb(0, 235, 255)"/><stop offset="0.375" stop-color="rgb(0, 255, 80)"/><stop offset="0.475" stop-color="rgb(0, 255, 0)"/><stop offset="0.575" stop-color="rgb(255, 255, 0)"/><stop offset="0.637" stop-color="rgb(255, 140, 0)"/><stop offset="0.712" stop-color="rgb(255, 0, 0)"/><stop offset="0.875" stop-color="rgb(255, 150, 150)"/><stop offset="1.000" stop-color="rgb(255, 255, 255)"/></linearGradient></defs>
<rect x="719" y="201.3" width="9" height="108.80000000000001" fill="url(#g201)"/>
<line x1="728.5" y1="201.3" x2="728.5" y2="310.1" stroke="#686868" stroke-width="1"/>
<line x1="728.5" y1="201.3" x2="733" y2="201.3" stroke="#686868" stroke-width="1"/>
<line x1="728.5" y1="228.5" x2="733" y2="228.5" stroke="#686868" stroke-width="1"/>
<line x1="728.5" y1="255.70000000000002" x2="733" y2="255.70000000000002" stroke="#686868" stroke-width="1"/>
<line x1="728.5" y1="282.9" x2="733" y2="282.9" stroke="#686868" stroke-width="1"/>
<line x1="728.5" y1="310.1" x2="733" y2="310.1" stroke="#686868" stroke-width="1"/>
<defs><linearGradient id="g366" x1="0" y1="1" x2="0" y2="0"><stop offset="0.000" stop-color="rgb(0, 0, 0)"/><stop offset="0.087" stop-color="rgb(0, 0, 120)"/><stop offset="0.175" stop-color="rgb(0, 0, 255)"/><stop offset="0.238" stop-color="rgb(0, 140, 255)"/><stop offset="0.288" stop-color="rgb(0, 235, 255)"/><stop offset="0.375" stop-color="rgb(0, 255, 80)"/><stop offset="0.475" stop-color="rgb(0, 255, 0)"/><stop offset="0.575" stop-color="rgb(255, 255, 0)"/><stop offset="0.637" stop-color="rgb(255, 140, 0)"/><stop offset="0.712" stop-color="rgb(255, 0, 0)"/><stop offset="0.875" stop-color="rgb(255, 150, 150)"/><stop offset="1.000" stop-color="rgb(255, 255, 255)"/></linearGradient></defs>
<rect x="719" y="366.7" width="9" height="108.80000000000001" fill="url(#g366)"/>
<line x1="728.5" y1="366.7" x2="728.5" y2="475.5" stroke="#686868" stroke-width="1"/>
<line x1="728.5" y1="366.7" x2="733" y2="366.7" stroke="#686868" stroke-width="1"/>
<line x1="728.5" y1="393.9" x2="733" y2="393.9" stroke="#686868" stroke-width="1"/>
<line x1="728.5" y1="421.09999999999997" x2="733" y2="421.09999999999997" stroke="#686868" stroke-width="1"/>
<line x1="728.5" y1="448.29999999999995" x2="733" y2="448.29999999999995" stroke="#686868" stroke-width="1"/>
<line x1="728.5" y1="475.5" x2="733" y2="475.5" stroke="#686868" stroke-width="1"/>
</g>
<text transform="translate(70.8,130) scale(1.1,1)" font-size="9" text-anchor="end" >10</text>
<text transform="translate(56.2,161) scale(1.1,1)" font-size="9" text-anchor="start" textLength="13.27" lengthAdjust="spacing" >-10</text>
<text transform="translate(51,158.3) rotate(-90)" font-size="10" textLength="31.6" lengthAdjust="spacing">ch.1(V)</text>
<text transform="translate(70.8,325.5) scale(1.1,1)" font-size="9" text-anchor="end" >0</text>
<text transform="translate(70.8,294.3) scale(1.1,1)" font-size="9" text-anchor="end" >2</text>
<text transform="translate(70.8,263.1) scale(1.1,1)" font-size="9" text-anchor="end" >4</text>
<text transform="translate(70.8,231.9) scale(1.1,1)" font-size="9" text-anchor="end" >6</text>
<text transform="translate(70.8,200.7) scale(1.1,1)" font-size="9" text-anchor="end" >8</text>
<text transform="translate(70.8,169.5) scale(1.1,1)" font-size="9" text-anchor="end" >10</text>
<text transform="translate(51.3,253.2) rotate(-90)" font-size="8.5" textLength="17.3" lengthAdjust="spacing">ch.1</text>
<text transform="translate(59,268.1) rotate(-90)" font-size="9.5" textLength="73.5" lengthAdjust="spacing">Frequency  (kHz)</text>
<text transform="translate(70.8,490.5) scale(1.1,1)" font-size="9" text-anchor="end" >0</text>
<text transform="translate(70.8,459.5) scale(1.1,1)" font-size="9" text-anchor="end" >2</text>
<text transform="translate(70.8,428.5) scale(1.1,1)" font-size="9" text-anchor="end" >4</text>
<text transform="translate(70.8,397.5) scale(1.1,1)" font-size="9" text-anchor="end" >6</text>
<text transform="translate(70.8,366.5) scale(1.1,1)" font-size="9" text-anchor="end" >8</text>
<text transform="translate(70.8,335.5) scale(1.1,1)" font-size="9" text-anchor="end" >10</text>
<text transform="translate(51.3,419.2) rotate(-90)" font-size="8.5" textLength="17.3" lengthAdjust="spacing">ch.2</text>
<text transform="translate(59,434.1) rotate(-90)" font-size="9.5" textLength="73.5" lengthAdjust="spacing">Frequency  (kHz)</text>
<text transform="translate(70.8,501) scale(1.1,1)" font-size="9" text-anchor="end" >5</text>
<text transform="translate(70.8,532) scale(1.1,1)" font-size="9" text-anchor="end" >-5</text>
<text transform="translate(51,529.3) rotate(-90)" font-size="10" textLength="31" lengthAdjust="spacing">ch.3(V)</text>
<text transform="translate(79.5,549) scale(1.0,1)" font-size="9" text-anchor="middle" >0</text>
<text transform="translate(141.5,549) scale(1.0,1)" font-size="9" text-anchor="middle" >1</text>
<text transform="translate(204.5,549) scale(1.0,1)" font-size="9" text-anchor="middle" >2</text>
<text transform="translate(266.5,549) scale(1.0,1)" font-size="9" text-anchor="middle" >3</text>
<text transform="translate(328.5,549) scale(1.0,1)" font-size="9" text-anchor="middle" >4</text>
<text transform="translate(391.5,549) scale(1.0,1)" font-size="9" text-anchor="middle" >5</text>
<text transform="translate(453.5,549) scale(1.0,1)" font-size="9" text-anchor="middle" >6</text>
<text transform="translate(516.5,549) scale(1.0,1)" font-size="9" text-anchor="middle" >7</text>
<text transform="translate(578.5,549) scale(1.0,1)" font-size="9" text-anchor="middle" >8</text>
<text transform="translate(640.5,549) scale(1.0,1)" font-size="9" text-anchor="middle" >9</text>
<text transform="translate(703.5,549) scale(1.0,1)" font-size="9" text-anchor="middle" >10</text>
<text transform="translate(376.1,557.5) scale(1.1,1)" font-size="8.5" text-anchor="start" textLength="18.09" lengthAdjust="spacing" >Time</text>
<text transform="translate(402.1,557.5) scale(1.1,1)" font-size="8.5" text-anchor="start" textLength="20.27" lengthAdjust="spacing" >(min)</text>
<text transform="translate(79.3,122.8) scale(1.05,1)" font-size="11.5" text-anchor="start" textLength="22.19" lengthAdjust="spacing" >VLF</text>
<text transform="translate(108.8,122.8) scale(1.05,1)" font-size="11.5" text-anchor="start" textLength="36.48" lengthAdjust="spacing" >Spectra</text>
<text transform="translate(251.3,123) scale(1.1,1)" font-size="9" text-anchor="start" textLength="22.09" lengthAdjust="spacing" >Aug.7</text>
<text transform="translate(282.3,123) scale(1.1,1)" font-size="9" text-anchor="start" >,</text>
<text transform="translate(287.6,123) scale(1.1,1)" font-size="9" text-anchor="start" textLength="18.00" lengthAdjust="spacing" >2025</text>
<text transform="translate(343.6,123) scale(1.1,1)" font-size="9" text-anchor="start" textLength="50.73" lengthAdjust="spacing" >station=GAK</text>
<text transform="translate(437.3,123) scale(1.1,1)" font-size="9" text-anchor="start" textLength="16.91" lengthAdjust="spacing" >start</text>
<text transform="translate(461.4,123) scale(1.1,1)" font-size="9" text-anchor="start" textLength="11.36" lengthAdjust="spacing" >UT</text>
<text transform="translate(477.6,123) scale(1.1,1)" font-size="9" text-anchor="start" textLength="5.45" lengthAdjust="spacing" >=</text>
<text transform="translate(492.9,123) scale(1.1,1)" font-size="9" text-anchor="start" >2</text>
<text transform="translate(503.3,123) scale(1.1,1)" font-size="9" text-anchor="start" >:</text>
<text transform="translate(507.5,123) scale(1.1,1)" font-size="9" text-anchor="start" textLength="8.36" lengthAdjust="spacing" >20</text>
<text transform="translate(517.9,123) scale(1.1,1)" font-size="9" text-anchor="start" >:</text>
<text transform="translate(524.1,123) scale(1.1,1)" font-size="9" text-anchor="start" >0</text>
<text transform="translate(734.6,203.9) scale(1.1,1)" font-size="7" text-anchor="start" textLength="6.18" lengthAdjust="spacing" >-3</text>
<text transform="translate(734.6,231.1) scale(1.1,1)" font-size="7" text-anchor="start" textLength="6.18" lengthAdjust="spacing" >-4</text>
<text transform="translate(734.6,258.3) scale(1.1,1)" font-size="7" text-anchor="start" textLength="6.18" lengthAdjust="spacing" >-5</text>
<text transform="translate(734.6,285.5) scale(1.1,1)" font-size="7" text-anchor="start" textLength="6.18" lengthAdjust="spacing" >-6</text>
<text transform="translate(734.6,312.70000000000005) scale(1.1,1)" font-size="7" text-anchor="start" textLength="6.18" lengthAdjust="spacing" >-7</text>
<text transform="translate(751,287.6) rotate(-90)" font-size="7" textLength="53.5" lengthAdjust="spacing">log(PSD)(V<tspan font-size="4.5" dy="-2.8">2</tspan><tspan dy="2.8">/Hz)</tspan></text>
<text transform="translate(734.6,369.3) scale(1.1,1)" font-size="7" text-anchor="start" textLength="6.18" lengthAdjust="spacing" >-3</text>
<text transform="translate(734.6,396.5) scale(1.1,1)" font-size="7" text-anchor="start" textLength="6.18" lengthAdjust="spacing" >-4</text>
<text transform="translate(734.6,423.7) scale(1.1,1)" font-size="7" text-anchor="start" textLength="6.18" lengthAdjust="spacing" >-5</text>
<text transform="translate(734.6,450.9) scale(1.1,1)" font-size="7" text-anchor="start" textLength="6.18" lengthAdjust="spacing" >-6</text>
<text transform="translate(734.6,478.1) scale(1.1,1)" font-size="7" text-anchor="start" textLength="6.18" lengthAdjust="spacing" >-7</text>
<text transform="translate(751,453.0) rotate(-90)" font-size="7" textLength="53.5" lengthAdjust="spacing">log(PSD)(V<tspan font-size="4.5" dy="-2.8">2</tspan><tspan dy="2.8">/Hz)</tspan></text>
</svg></body></html>
